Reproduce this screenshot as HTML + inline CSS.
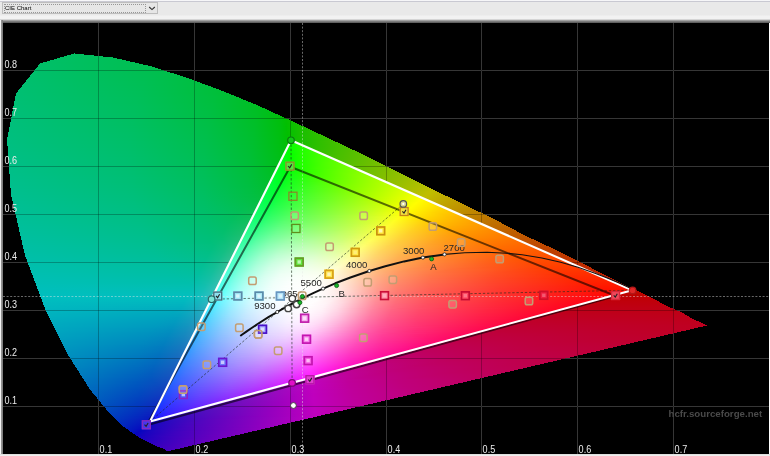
<!DOCTYPE html>
<html><head><meta charset="utf-8"><title>CIE Chart</title>
<style>
html,body{margin:0;padding:0}
body{width:770px;height:456px;position:relative;overflow:hidden;background:#ebebeb;font-family:"Liberation Sans",sans-serif}
.tb{position:absolute;left:0;top:0;width:770px;height:23px;background:linear-gradient(#f6f6f8 0,#f6f6f8 1px,#c9c9d2 1px,#c9c9d2 2px,#e9e9e9 2px,#e9e9e9 15px,#f2f2f2 16px,#f2f2f2 19px,#b8b8b8 20px,#8a8a8a 21px,#6e6e6e 22px,#555 23px)}
.cb{position:absolute;left:2px;top:2px;width:154px;height:10px;border:1px solid #bdbdbd;background:#e6e6e6}
.cb .f{position:absolute;left:1px;top:1px;width:140px;height:7px;border:1px dotted #969696}
.cb .t{position:absolute;left:2px;top:1.6px;font-size:6px;line-height:7px;color:#000;white-space:nowrap}
.cb svg{position:absolute;left:145px;top:3px}
.ch{position:absolute;left:3px;top:23px;width:766px;height:431px;background:#000;overflow:hidden}
.ch i{position:absolute;display:block;height:1px}
.lb{position:absolute;left:0;top:20px;width:3px;height:436px;background:linear-gradient(90deg,#f4f4f4 0,#f4f4f4 1px,#9a9a9a 1px,#777 3px)}
.rb{position:absolute;left:769px;top:23px;width:1px;height:433px;background:#fff}
.bb{position:absolute;left:0;top:454px;width:770px;height:2px;background:linear-gradient(#d8d8d8,#f4f4f4)}
svg.g,svg.o{position:absolute;left:0;top:0}
svg text{font-family:"Liberation Sans",sans-serif}
svg.o{will-change:transform}
.cb .t{will-change:transform}
</style></head><body>
<div class="tb"></div>
<div class="cb"><div class="f"></div><div class="t">CIE Chart</div><svg width="8" height="5" viewBox="0 0 8 5"><path d="M1.2 1l2.8 2.6L6.8 1" stroke="#333" stroke-width="1.1" fill="none"/></svg></div>
<div class="ch">
<svg class="g" style="left:-3px;top:-23px" width="770" height="456" viewBox="0 0 770 456"><path d="M98.5 23V454M194.5 23V454M290.5 23V454M386.5 23V454M481.5 23V454M577.5 23V454M673.5 23V454M3 406.5H769M3 358.5H769M3 310.5H769M3 262.5H769M3 214.5H769M3 166.5H769M3 118.5H769M3 70.5H769" stroke="#4a4a4a" stroke-width="1" fill="none"/></svg>
<i style="top:30px;left:71px;width:1px;background:linear-gradient(90deg,#00bf60 0px,#00bf60 1px)"></i>
<i style="top:31px;left:68px;width:13px;background:linear-gradient(90deg,#00bf60 0px,#00bf5e 13px)"></i>
<i style="top:32px;left:64px;width:27px;background:linear-gradient(90deg,#00bf61 0px,#00bf5c 27px)"></i>
<i style="top:33px;left:61px;width:39px;background:linear-gradient(90deg,#00bf62 0px,#00bf5a 39px)"></i>
<i style="top:34px;left:57px;width:53px;background:linear-gradient(90deg,#00bf63 0px,#00bf58 53px)"></i>
<i style="top:35px;left:54px;width:60px;background:linear-gradient(90deg,#00bf64 0px,#00bf57 60px)"></i>
<i style="top:36px;left:51px;width:68px;background:linear-gradient(90deg,#00bf65 0px,#00bf56 68px)"></i>
<i style="top:37px;left:47px;width:76px;background:linear-gradient(90deg,#00bf66 0px,#00bf55 76px)"></i>
<i style="top:38px;left:44px;width:83px;background:linear-gradient(90deg,#00bf67 0px,#00bf54 83px)"></i>
<i style="top:39px;left:40px;width:92px;background:linear-gradient(90deg,#00bf67 0px,#00bf53 92px)"></i>
<i style="top:40px;left:37px;width:99px;background:linear-gradient(90deg,#00bf68 0px,#00bf52 99px)"></i>
<i style="top:41px;left:36px;width:104px;background:linear-gradient(90deg,#00bf69 0px,#00bf51 104px)"></i>
<i style="top:42px;left:35px;width:110px;background:linear-gradient(90deg,#00bf69 0px,#00bf50 110px)"></i>
<i style="top:43px;left:35px;width:114px;background:linear-gradient(90deg,#00bf69 0px,#00bf4f 114px)"></i>
<i style="top:44px;left:34px;width:118px;background:linear-gradient(90deg,#00bf6a 0px,#00bf4e 115.5px,#00bf4e 118px)"></i>
<i style="top:45px;left:33px;width:122px;background:linear-gradient(90deg,#00bf6a 0px,#00bf4f 116.5px,#00bf4d 122px)"></i>
<i style="top:46px;left:32px;width:126px;background:linear-gradient(90deg,#00bf6a 0px,#00bf4f 116.5px,#00bf4c 126px)"></i>
<i style="top:47px;left:31px;width:130px;background:linear-gradient(90deg,#00bf6b 0px,#00bf50 116.5px,#00bf4b 130px)"></i>
<i style="top:48px;left:31px;width:133px;background:linear-gradient(90deg,#00bf6b 0px,#00bf50 116.5px,#00bf4b 133px)"></i>
<i style="top:49px;left:30px;width:137px;background:linear-gradient(90deg,#00bf6b 0px,#00bf50 116.5px,#00bf4a 137px)"></i>
<i style="top:50px;left:29px;width:142px;background:linear-gradient(90deg,#00bf6c 0px,#00bf51 117.5px,#00bf49 142px)"></i>
<i style="top:51px;left:28px;width:146px;background:linear-gradient(90deg,#00bf6c 0px,#00bf51 117.5px,#00bf48 146px)"></i>
<i style="top:52px;left:27px;width:150px;background:linear-gradient(90deg,#00bf6c 0px,#00bf52 117.5px,#00bf47 150px)"></i>
<i style="top:53px;left:27px;width:153px;background:linear-gradient(90deg,#00bf6d 0px,#00bf52 117.5px,#00bf46 153px)"></i>
<i style="top:54px;left:26px;width:157px;background:linear-gradient(90deg,#00bf6d 0px,#00bf52 118.5px,#00bf45 157px)"></i>
<i style="top:55px;left:25px;width:161px;background:linear-gradient(90deg,#00bf6d 0px,#00bf53 118.5px,#00bf44 161px)"></i>
<i style="top:56px;left:24px;width:165px;background:linear-gradient(90deg,#00bf6e 0px,#00bf53 118.5px,#00bf43 165px)"></i>
<i style="top:57px;left:23px;width:168px;background:linear-gradient(90deg,#00bf6e 0px,#00bf53 119.5px,#00bf42 168px)"></i>
<i style="top:58px;left:23px;width:171px;background:linear-gradient(90deg,#00bf6e 0px,#00bf54 119.5px,#00bf41 171px)"></i>
<i style="top:59px;left:22px;width:175px;background:linear-gradient(90deg,#00bf6f 0px,#00bf54 119.5px,#00bf40 175px)"></i>
<i style="top:60px;left:21px;width:178px;background:linear-gradient(90deg,#00bf6f 0px,#00bf55 119.5px,#00bf3f 178px)"></i>
<i style="top:61px;left:20px;width:182px;background:linear-gradient(90deg,#00bf70 0px,#00bf55 119.5px,#00bf3e 182px)"></i>
<i style="top:62px;left:19px;width:186px;background:linear-gradient(90deg,#00bf70 0px,#00bf55 120.5px,#00bf3d 186px)"></i>
<i style="top:63px;left:19px;width:189px;background:linear-gradient(90deg,#00bf70 0px,#00bf56 120.5px,#00bf3c 189px)"></i>
<i style="top:64px;left:18px;width:192px;background:linear-gradient(90deg,#00bf71 0px,#00bf56 120.5px,#00bf3b 192px)"></i>
<i style="top:65px;left:17px;width:196px;background:linear-gradient(90deg,#00bf71 0px,#00bf57 120.5px,#00bf3a 196px)"></i>
<i style="top:66px;left:16px;width:200px;background:linear-gradient(90deg,#00bf71 0px,#00bf57 121.5px,#00bf3a 196.5px,#00bf38 200px)"></i>
<i style="top:67px;left:15px;width:203px;background:linear-gradient(90deg,#00bf72 0px,#00bf57 121.5px,#00bf3b 196.5px,#00bf38 203px)"></i>
<i style="top:68px;left:15px;width:206px;background:linear-gradient(90deg,#00bf72 0px,#00bf58 121.5px,#00bf3b 196.5px,#00bf36 206px)"></i>
<i style="top:69px;left:14px;width:209px;background:linear-gradient(90deg,#00bf72 0px,#00bf58 121.5px,#00bf3b 197.5px,#00bf35 209px)"></i>
<i style="top:70px;left:13px;width:213px;background:linear-gradient(90deg,#00bf73 0px,#00bf58 122.5px,#00bf3b 198.5px,#00bf34 213px)"></i>
<i style="top:71px;left:13px;width:215px;background:linear-gradient(90deg,#00bf73 0px,#00bf59 121.5px,#00bf3c 197.5px,#00bf33 215px)"></i>
<i style="top:72px;left:13px;width:218px;background:linear-gradient(90deg,#00bf73 0px,#00bf59 121.5px,#00bf3c 197.5px,#00bf31 218px)"></i>
<i style="top:73px;left:12px;width:221px;background:linear-gradient(90deg,#00bf74 0px,#00bf59 122.5px,#00bf3d 198.5px,#00bf30 221px)"></i>
<i style="top:74px;left:12px;width:224px;background:linear-gradient(90deg,#00bf74 0px,#00bf5a 122.5px,#00bf3d 198.5px,#00bf2f 224px)"></i>
<i style="top:75px;left:12px;width:226px;background:linear-gradient(90deg,#00bf74 0px,#00bf5a 122.5px,#00bf3d 198.5px,#00bf2d 226px)"></i>
<i style="top:76px;left:12px;width:228px;background:linear-gradient(90deg,#00bf74 0px,#00bf5a 122.5px,#00bf3d 198.5px,#00bf2c 228px)"></i>
<i style="top:77px;left:12px;width:231px;background:linear-gradient(90deg,#00bf74 0px,#00bf5b 121.5px,#00bf3e 197.5px,#00bf2a 231px)"></i>
<i style="top:78px;left:11px;width:234px;background:linear-gradient(90deg,#00bf75 0px,#00bf5b 122.5px,#00bf3e 198.5px,#00bf29 234px)"></i>
<i style="top:79px;left:11px;width:237px;background:linear-gradient(90deg,#00bf75 0px,#00bf5b 122.5px,#00bf3e 198.5px,#00bf27 237px)"></i>
<i style="top:80px;left:11px;width:239px;background:linear-gradient(90deg,#00bf75 0px,#00bf5b 122.5px,#00bf3f 198.5px,#00bf26 239px)"></i>
<i style="top:81px;left:11px;width:242px;background:linear-gradient(90deg,#00bf75 0px,#00bf5c 122.5px,#00bf3f 198.5px,#00bf24 242px)"></i>
<i style="top:82px;left:11px;width:244px;background:linear-gradient(90deg,#00bf76 0px,#00bf5c 122.5px,#00bf3f 198.5px,#00bf22 244px)"></i>
<i style="top:83px;left:10px;width:247px;background:linear-gradient(90deg,#00bf76 0px,#00bf5d 122.5px,#00bf40 198.5px,#00bf22 244.5px,#00bf21 247px)"></i>
<i style="top:84px;left:10px;width:249px;background:linear-gradient(90deg,#00bf76 0px,#00bf5d 122.5px,#00bf40 198.5px,#00bf23 244.5px,#00bf1f 249px)"></i>
<i style="top:85px;left:10px;width:252px;background:linear-gradient(90deg,#00bf77 0px,#00bf5d 122.5px,#00bf40 198.5px,#00bf23 244.5px,#00bf1c 252px)"></i>
<i style="top:86px;left:10px;width:254px;background:linear-gradient(90deg,#00bf77 0px,#00bf5d 122.5px,#00bf41 198.5px,#00bf23 244.5px,#00bf1b 254px)"></i>
<i style="top:87px;left:10px;width:256px;background:linear-gradient(90deg,#00bf77 0px,#00bf5e 122.5px,#00bf41 198.5px,#00bf23 244.5px,#00bf19 256px)"></i>
<i style="top:88px;left:9px;width:259px;background:linear-gradient(90deg,#00bf77 0px,#00bf5e 122.5px,#00bf42 198.5px,#00bf24 244.5px,#00bf17 259px)"></i>
<i style="top:89px;left:9px;width:261px;background:linear-gradient(90deg,#00bf78 0px,#00bf5e 122.5px,#00bf42 198.5px,#00bf24 244.5px,#00bf15 261px)"></i>
<i style="top:90px;left:9px;width:263px;background:linear-gradient(90deg,#00bf78 0px,#00bf5f 122.5px,#00bf42 198.5px,#00bf25 244.5px,#00bf13 263px)"></i>
<i style="top:91px;left:9px;width:266px;background:linear-gradient(90deg,#00bf78 0px,#00bf5f 122.5px,#00bf42 198.5px,#00bf25 244.5px,#00bf0f 266px)"></i>
<i style="top:92px;left:9px;width:268px;background:linear-gradient(90deg,#00bf78 0px,#00bf5f 122.5px,#00bf43 198.5px,#00bf25 244.5px,#00bf0c 268px)"></i>
<i style="top:93px;left:9px;width:270px;background:linear-gradient(90deg,#00bf79 0px,#00bf5f 122.5px,#00bf43 197.5px,#00bf25 244.5px,#00bf0b 268.5px,#00bf09 270px)"></i>
<i style="top:94px;left:8px;width:273px;background:linear-gradient(90deg,#00bf79 0px,#00bf60 122.5px,#00bf44 198.5px,#00bf26 245.5px,#00bf0b 269.5px,#00bf06 273px)"></i>
<i style="top:95px;left:8px;width:275px;background:linear-gradient(90deg,#00bf79 0px,#00bf60 122.5px,#00bf44 198.5px,#00bf27 244.5px,#00bf0d 268.5px,#00bf01 275px)"></i>
<i style="top:96px;left:8px;width:278px;background:linear-gradient(90deg,#00bf7a 0px,#00bf60 122.5px,#00bf44 198.5px,#00bf27 244.5px,#00bf0d 268.5px,#00bf01 274.5px,#07bf00 278px)"></i>
<i style="top:97px;left:8px;width:280px;background:linear-gradient(90deg,#00bf7a 0px,#00bf61 122.5px,#00bf44 198.5px,#00bf27 244.5px,#00bf0d 268.5px,#02bf00 275.5px,#0bbf00 280px)"></i>
<i style="top:98px;left:8px;width:282px;background:linear-gradient(90deg,#00bf7a 0px,#00bf61 122.5px,#00bf45 197.5px,#00bf27 244.5px,#00bf0d 268.5px,#02bf00 275.5px,#0ebf00 282px)"></i>
<i style="top:99px;left:7px;width:285px;background:linear-gradient(90deg,#00bf7a 0px,#00bf62 122.5px,#00bf45 198.5px,#00bf27 245.5px,#00bf0e 269.5px,#02bf00 276.5px,#11bf00 285px)"></i>
<i style="top:100px;left:7px;width:287px;background:linear-gradient(90deg,#00bf7b 0px,#00bf62 122.5px,#00bf46 198.5px,#00bf28 245.5px,#00bf0e 269.5px,#01bf00 276.5px,#13bf00 287px)"></i>
<i style="top:101px;left:7px;width:289px;background:linear-gradient(90deg,#00bf7b 0px,#00bf62 122.5px,#00bf46 198.5px,#00bf28 245.5px,#00bf0d 270.5px,#01bf00 276.5px,#16bf00 289px)"></i>
<i style="top:102px;left:7px;width:291px;background:linear-gradient(90deg,#00bf7b 0px,#00bf62 122.5px,#00bf46 198.5px,#00bf28 245.5px,#00bf0d 270.5px,#01bf00 276.5px,#15bf00 287.5px,#19bf00 291px)"></i>
<i style="top:103px;left:7px;width:294px;background:linear-gradient(90deg,#00bf7b 0px,#00bf63 122.5px,#00bf47 197.5px,#00bf29 244.5px,#00bf0e 269.5px,#00bf00 276.5px,#12bf00 285.5px,#1dbf00 294px)"></i>
<i style="top:104px;left:6px;width:297px;background:linear-gradient(90deg,#00bf7c 0px,#00bf63 122.5px,#00bf47 198.5px,#00bf29 245.5px,#00bf0f 270.5px,#00bf01 277.5px,#12bf00 286.5px,#1fbf00 297px)"></i>
<i style="top:105px;left:6px;width:299px;background:linear-gradient(90deg,#00bf7c 0px,#00bf64 122.5px,#00bf48 198.5px,#00bf2a 245.5px,#00bf0f 270.5px,#00bf01 277.5px,#13bf00 287.5px,#21bf00 299px)"></i>
<i style="top:106px;left:6px;width:301px;background:linear-gradient(90deg,#00bf7c 0px,#00bf64 122.5px,#00bf48 198.5px,#00bf2a 245.5px,#00bf0f 270.5px,#00bf01 277.5px,#15bf00 288.5px,#24bf00 301px)"></i>
<i style="top:107px;left:6px;width:303px;background:linear-gradient(90deg,#00bf7d 0px,#00bf64 122.5px,#00bf48 198.5px,#00bf2a 245.5px,#00bf0f 270.5px,#00bf02 277.5px,#16bf00 289.5px,#26bf00 303px)"></i>
<i style="top:108px;left:6px;width:305px;background:linear-gradient(90deg,#00bf7d 0px,#00bf64 122.5px,#00bf49 197.5px,#00bf2b 244.5px,#00bf0f 270.5px,#02bf00 278.5px,#1abf00 292.5px,#29bf00 305px)"></i>
<i style="top:109px;left:5px;width:308px;background:linear-gradient(90deg,#00bf7d 0px,#00bf65 123.5px,#00bf49 198.5px,#00bf2c 245.5px,#00bf10 271.5px,#02bf00 279.5px,#19bf00 292.5px,#2bbf00 308px)"></i>
<i style="top:110px;left:5px;width:310px;background:linear-gradient(90deg,#00bf7e 0px,#00bf65 123.5px,#00bf49 198.5px,#00bf2c 245.5px,#00bf10 271.5px,#02bf00 279.5px,#17bf00 291.5px,#2dbf00 310px)"></i>
<i style="top:111px;left:5px;width:313px;background:linear-gradient(90deg,#00bf7e 0px,#00bf66 122.5px,#00bf4a 198.5px,#00bf2c 245.5px,#00bf10 271.5px,#01bf00 279.5px,#17bf00 291.5px,#31bf00 313px)"></i>
<i style="top:112px;left:5px;width:315px;background:linear-gradient(90deg,#00bf7e 0px,#00bf66 122.5px,#00bf4a 198.5px,#00bf2c 245.5px,#00bf10 271.5px,#01bf00 279.5px,#16bf00 290.5px,#33bf00 315px)"></i>
<i style="top:113px;left:5px;width:317px;background:linear-gradient(90deg,#00bf7e 0px,#00bf66 122.5px,#00bf4b 197.5px,#00bf2d 244.5px,#00bf12 270.5px,#00bf03 278.5px,#04bf00 280.5px,#1ebf00 296.5px,#35bf00 317px)"></i>
<i style="top:114px;left:4px;width:320px;background:linear-gradient(90deg,#00bf7f 0px,#00bf66 123.5px,#00bf4b 198.5px,#00bf2e 245.5px,#00bf12 271.5px,#00bf04 279.5px,#04bf00 281.5px,#1dbf00 296.5px,#37bf00 320px)"></i>
<i style="top:115px;left:4px;width:322px;background:linear-gradient(90deg,#00bf7f 0px,#00bf67 123.5px,#00bf4b 198.5px,#00bf2e 245.5px,#00bf12 271.5px,#00bf01 280.5px,#13bf00 289.5px,#3abf00 322px)"></i>
<i style="top:116px;left:4px;width:324px;background:linear-gradient(90deg,#00bf7f 0px,#00bf67 123.5px,#00bf4c 198.5px,#00bf2e 245.5px,#00bf13 271.5px,#00bf01 280.5px,#14bf00 290.5px,#3cbf00 324px)"></i>
<i style="top:117px;left:4px;width:326px;background:linear-gradient(90deg,#00bf80 0px,#00bf67 123.5px,#00bf4c 198.5px,#00bf2e 245.5px,#00bf13 271.5px,#00bf02 280.5px,#16bf00 291.5px,#3ebf00 326px)"></i>
<i style="top:118px;left:4px;width:328px;background:linear-gradient(90deg,#00bf80 0px,#00bf68 123.5px,#00bf4c 198.5px,#00bf2f 245.5px,#00bf13 271.5px,#00bf02 280.5px,#05bf00 283px,#0aff00 283px,#12ff00 287px,#0fbf00 287px,#36bf00 317.5px,#40bf00 328px)"></i>
<i style="top:119px;left:4px;width:331px;background:linear-gradient(90deg,#00bf80 0px,#00bf68 123.5px,#00bf4d 198.5px,#00bf2f 245.5px,#00bf13 271.5px,#00bf02 280.5px,#05bf00 283px,#0aff00 283px,#16ff00 289px,#12bf00 289px,#3bbf00 322.5px,#44bf00 331px)"></i>
<i style="top:120px;left:4px;width:333px;background:linear-gradient(90deg,#00bf80 0px,#00bf68 123.5px,#00bf4d 198.5px,#00bf2f 245.5px,#00bf13 271.5px,#02bf00 282px,#07ff00 282px,#1bff00 291px,#15bf00 291px,#41bf00 327.5px,#46bf00 333px)"></i>
<i style="top:121px;left:4px;width:335px;background:linear-gradient(90deg,#00bf81 0px,#00bf69 123.5px,#00bf4d 198.5px,#00bf2f 245.5px,#00bf14 271.5px,#02bf00 282px,#06ff00 282px,#21ff00 294px,#1abf00 294px,#48bf00 335px)"></i>
<i style="top:122px;left:4px;width:337px;background:linear-gradient(90deg,#00bf81 0px,#00bf69 122.5px,#00bf4e 197.5px,#00bf31 244.5px,#00bf14 271.5px,#00bf03 281px,#02ff00 281px,#18ff00 289.5px,#24ff00 296px,#1dbf00 296px,#4bbf00 337px)"></i>
<i style="top:123px;left:5px;width:338px;background:linear-gradient(90deg,#00bf81 0px,#00bf69 122.5px,#00bf4e 197.5px,#00bf30 244.5px,#00bf14 270.5px,#00bf03 280px,#01ff00 280px,#16ff00 287.5px,#28ff00 297px,#1fbf00 297px,#4dbf00 338px)"></i>
<i style="top:124px;left:5px;width:340px;background:linear-gradient(90deg,#00bf81 0px,#00bf69 122.5px,#00bf4e 197.5px,#00bf31 243.5px,#00bf14 270.5px,#00bf06 279px,#00ff05 279px,#01ff00 280.5px,#14ff00 286.5px,#2cff00 299px,#22bf00 299px,#4fbf00 340px)"></i>
<i style="top:125px;left:5px;width:342px;background:linear-gradient(90deg,#00bf82 0px,#00bf6a 122.5px,#00bf4e 197.5px,#00bf31 243.5px,#00bf15 270.5px,#00bf07 279px,#00ff05 279px,#00ff01 280.5px,#1f0 285.5px,#31ff00 302px,#26bf00 302px,#51bf00 342px)"></i>
<i style="top:126px;left:5px;width:344px;background:linear-gradient(90deg,#00bf82 0px,#00bf6a 122.5px,#00bf4f 197.5px,#00bf32 243.5px,#00bf15 270.5px,#00bf09 278px,#00ff09 278px,#00ff01 280.5px,#13ff00 286.5px,#35ff00 304px,#29bf00 304px,#54bf00 344px)"></i>
<i style="top:127px;left:5px;width:347px;background:linear-gradient(90deg,#00bf82 0px,#00bf6a 122.5px,#00bf50 196.5px,#00bf32 243.5px,#00bf15 270.5px,#00bf09 278px,#00ff09 278px,#00ff02 280.5px,#16ff00 287.5px,#38ff00 306px,#2bbf00 306px,#57bf00 347px)"></i>
<i style="top:128px;left:5px;width:349px;background:linear-gradient(90deg,#00bf82 0px,#00bf6b 122.5px,#00bf50 196.5px,#00bf32 243.5px,#00bf15 270.5px,#00bf0b 277px,#00ff0d 277px,#00ff02 280.5px,#15ff00 287.5px,#3cff00 308px,#2ebf00 308px,#59bf00 349px)"></i>
<i style="top:129px;left:5px;width:351px;background:linear-gradient(90deg,#00bf83 0px,#00bf6b 122.5px,#00bf50 196.5px,#00bf33 243.5px,#00bf16 270.5px,#00bf0c 277px,#00ff0d 277px,#00ff03 280.5px,#0bff00 283.5px,#2cff00 298.5px,#41ff00 311px,#32bf00 311px,#5cbf00 351px)"></i>
<i style="top:130px;left:5px;width:353px;background:linear-gradient(90deg,#00bf83 0px,#00bf6b 122.5px,#00bf51 196.5px,#00bf34 242.5px,#00bf17 269.5px,#00bf0e 276px,#00ff10 276px,#00ff03 280.5px,#07ff00 282.5px,#24ff00 294.5px,#4f0 313px,#34bf00 313px,#5ebf00 353px)"></i>
<i style="top:131px;left:5px;width:355px;background:linear-gradient(90deg,#00bf83 0px,#00bf6c 122.5px,#00bf51 196.5px,#00bf34 242.5px,#00bf18 269.5px,#00bf0e 276px,#00ff10 276px,#00ff04 280.5px,#07ff00 282.5px,#24ff00 294.5px,#48ff00 315px,#37bf00 315px,#60bf00 355px)"></i>
<i style="top:132px;left:5px;width:357px;background:linear-gradient(90deg,#00bf84 0px,#00bf6c 122.5px,#00bf51 196.5px,#00bf34 242.5px,#00bf18 269.5px,#00bf10 275px,#00ff13 275px,#02ff00 281.5px,#1aff00 289.5px,#48ff00 314.5px,#4dff00 318px,#3bbf00 318px,#63bf00 357px)"></i>
<i style="top:133px;left:5px;width:359px;background:linear-gradient(90deg,#00bf84 0px,#00bf6c 122.5px,#00bf52 196.5px,#00bf35 242.5px,#00bf18 269.5px,#00bf10 275px,#00ff13 275px,#02ff00 281.5px,#17ff00 288.5px,#43ff00 311.5px,#50ff00 320px,#3dbf00 320px,#65bf00 359px)"></i>
<i style="top:134px;left:5px;width:361px;background:linear-gradient(90deg,#00bf84 0px,#00bf6d 122.5px,#00bf52 196.5px,#00bf35 242.5px,#00bf18 269.5px,#00bf12 274px,#00ff16 274px,#00ff05 280.5px,#01ff00 281.5px,#15ff00 287.5px,#3eff00 308.5px,#53ff00 322px,#40bf00 322px,#67bf00 361px)"></i>
<i style="top:135px;left:5px;width:363px;background:linear-gradient(90deg,#00bf84 0px,#00bf6d 122.5px,#00bf52 196.5px,#00bf35 242.5px,#00bf19 269.5px,#00bf12 274px,#00ff16 274px,#00ff05 280.5px,#0f0 281.5px,#12ff00 286.5px,#3bff00 306.5px,#57ff00 324px,#42bf00 324px,#6abf00 363px)"></i>
<i style="top:136px;left:5px;width:365px;background:linear-gradient(90deg,#00bf85 0px,#00bf6d 122.5px,#00bf53 196.5px,#00bf36 242.5px,#00bf19 269.5px,#00bf14 273px,#00ff19 273px,#00ff06 280.5px,#00ff01 281.5px,#12ff00 286.5px,#3aff00 305.5px,#5cff00 327px,#46bf00 327px,#6cbf00 365px)"></i>
<i style="top:137px;left:6px;width:366px;background:linear-gradient(90deg,#00bf85 0px,#00bf6e 121.5px,#00bf53 195.5px,#00bf36 241.5px,#00bf19 268.5px,#00bf15 272px,#00ff19 272px,#00ff06 279.5px,#00ff02 280.5px,#14ff00 286.5px,#3fff00 307.5px,#5fff00 328px,#48bf00 328px,#6fbf00 366px)"></i>
<i style="top:138px;left:6px;width:368px;background:linear-gradient(90deg,#00bf85 0px,#00bf6e 121.5px,#00bf53 195.5px,#00bf36 241.5px,#00bf19 268.5px,#00bf16 271px,#00ff1c 271px,#00ff07 279.5px,#00ff02 280.5px,#17ff00 287.5px,#43ff00 309.5px,#62ff00 330px,#4bbf00 330px,#71bf00 368px)"></i>
<i style="top:139px;left:6px;width:370px;background:linear-gradient(90deg,#00bf85 0px,#00bf6e 121.5px,#00bf54 195.5px,#00bf37 241.5px,#00bf1a 268.5px,#00bf17 271px,#00ff1c 271px,#00ff07 279.5px,#04ff00 281.5px,#1eff00 290.5px,#4fff00 316.5px,#67ff00 333px,#4fbf00 333px,#74bf00 370px)"></i>
<i style="top:140px;left:6px;width:372px;background:linear-gradient(90deg,#00bf86 0px,#00bf6f 121.5px,#00bf54 195.5px,#00bf37 241.5px,#00bf1a 268.5px,#00bf18 270px,#00ff1f 270px,#00ff07 279.5px,#04ff00 281.5px,#1eff00 290.5px,#4fff00 316.5px,#6bff00 335px,#51bf00 335px,#76bf00 372px)"></i>
<i style="top:141px;left:6px;width:374px;background:linear-gradient(90deg,#00bf86 0px,#00bf6f 121.5px,#00bf54 195.5px,#00bf37 241.5px,#00bf1a 268.5px,#00bf19 270px,#00ff1f 270px,#00ff08 279.5px,#03ff00 281.5px,#1bff00 289.5px,#4aff00 313.5px,#6eff00 337px,#54bf00 337px,#79bf00 374px)"></i>
<i style="top:142px;left:6px;width:376px;background:linear-gradient(90deg,#00bf86 0px,#00bf6f 121.5px,#00bf55 194.5px,#00bf38 240.5px,#00bf1c 267.5px,#00bf1a 269px,#00ff21 269px,#00ff08 279.5px,#03ff00 281.5px,#1bff00 289.5px,#4aff00 313.5px,#72ff00 339px,#56bf00 339px,#7bbf00 376px)"></i>
<i style="top:143px;left:6px;width:378px;background:linear-gradient(90deg,#00bf87 0px,#00bf70 121.5px,#00bf56 194.5px,#00bf39 240.5px,#00bf1c 267.5px,#00bf1b 269px,#0f2 269px,#00ff09 279.5px,#02ff00 281.5px,#19ff00 288.5px,#45ff00 310.5px,#7f0 342px,#5abf00 342px,#7ebf00 378px)"></i>
<i style="top:144px;left:6px;width:380px;background:linear-gradient(90deg,#00bf87 0px,#00bf70 121.5px,#00bf56 194.5px,#00bf39 240.5px,#00bf1c 268px,#00ff24 268px,#00ff09 279.5px,#04ff03 281.5px,#16ff00 287.5px,#42ff00 308.5px,#7aff00 344px,#5dbf00 344px,#80bf00 380px)"></i>
<i style="top:145px;left:6px;width:382px;background:linear-gradient(90deg,#00bf87 0px,#00bf71 121.5px,#00bf56 194.5px,#00bf39 240.5px,#00bf1d 268px,#00ff24 268px,#00ff09 279.5px,#16ff00 287.5px,#41ff00 307.5px,#7dff00 346px,#5fbf00 346px,#83bf00 382px)"></i>
<i style="top:146px;left:6px;width:384px;background:linear-gradient(90deg,#00bf88 0px,#00bf71 121.5px,#00bf57 194.5px,#00bf3a 240.5px,#00bf1e 267px,#00ff27 267px,#00ff0d 278.5px,#00ff0a 279.5px,#14ff03 286.5px,#2f0 292.5px,#56ff00 319.5px,#81ff00 348px,#62bf00 348px,#86bf00 384px)"></i>
<i style="top:147px;left:6px;width:386px;background:linear-gradient(90deg,#00bf88 0px,#00bf71 121.5px,#00bf57 194.5px,#00bf3a 240.5px,#00bf1f 267px,#00ff27 267px,#00ff0e 278.5px,#1cff03 289.5px,#37ff00 302.5px,#76ff00 339.5px,#86ff00 351px,#66bf00 351px,#88bf00 386px)"></i>
<i style="top:148px;left:6px;width:388px;background:linear-gradient(90deg,#00bf88 0px,#00bf72 121.5px,#00bf58 194.5px,#00bf3a 240.5px,#00bf20 266px,#00ff29 266px,#00ff0e 278.5px,#13ff0a 284.5px,#29ff00 295.5px,#60ff00 325.5px,#8aff00 353px,#68bf00 353px,#8bbf00 388px)"></i>
<i style="top:149px;left:6px;width:390px;background:linear-gradient(90deg,#00bf88 0px,#00bf72 121.5px,#00bf58 194.5px,#00bf3b 240.5px,#00bf21 266px,#00ff2a 266px,#0f1 277.5px,#1aff09 287.5px,#30ff00 298.5px,#6aff00 331.5px,#8dff00 355px,#6bbf00 355px,#8ebf00 390px)"></i>
<i style="top:150px;left:6px;width:392px;background:linear-gradient(90deg,#00bf89 0px,#00bf72 121.5px,#00bf58 194.5px,#00bf3b 240.5px,#00bf22 265px,#00ff2c 265px,#01ff12 277.5px,#15ff0d 284.5px,#34ff00 300.5px,#70ff00 334.5px,#92ff00 358px,#6fbf00 358px,#90bf00 392px)"></i>
<i style="top:151px;left:7px;width:393px;background:linear-gradient(90deg,#00bf89 0px,#00bf72 121.5px,#00bf59 193.5px,#00bf3c 239.5px,#00bf23 264px,#01ff2d 264px,#01ff15 275.5px,#19ff0f 284.5px,#3aff00 302.5px,#7aff00 339.5px,#96ff00 359px,#71bf00 359px,#93bf00 393px)"></i>
<i style="top:152px;left:7px;width:395px;background:linear-gradient(90deg,#00bf89 0px,#00bf73 121.5px,#00bf59 193.5px,#00bf3c 239.5px,#00bf24 263px,#01ff2f 263px,#02ff16 275.5px,#18ff11 283.5px,#3eff00 304.5px,#7fff00 342.5px,#9f0 361px,#74bf00 361px,#96bf00 395px)"></i>
<i style="top:153px;left:7px;width:397px;background:linear-gradient(90deg,#00bf8a 0px,#00bf73 121.5px,#00bf59 193.5px,#00bf3c 239.5px,#01bf25 263px,#01ff2f 263px,#01ff18 274.5px,#17ff13 282.5px,#4f0 307.5px,#89ff00 348.5px,#9dff00 363px,#77bf00 363px,#99bf00 397px)"></i>
<i style="top:154px;left:7px;width:399px;background:linear-gradient(90deg,#00bf8a 0px,#00bf74 121.5px,#00bf5a 193.5px,#00bf3d 238.5px,#01bf26 262px,#01ff32 262px,#03ff19 274.5px,#18ff15 282.5px,#43ff02 306.5px,#89ff00 348.5px,#a2ff00 366px,#7bbf00 366px,#9bbf00 399px)"></i>
<i style="top:155px;left:7px;width:401px;background:linear-gradient(90deg,#00bf8a 0px,#00bf74 121.5px,#00bf5a 193.5px,#00bf3e 238.5px,#01bf27 262px,#01ff32 262px,#01ff1c 273.5px,#15ff18 280.5px,#46ff04 307.5px,#50ff00 313.5px,#9f0 358.5px,#a6ff00 368px,#7ebf00 368px,#9ebf00 401px)"></i>
<i style="top:156px;left:7px;width:403px;background:linear-gradient(90deg,#00bf8b 0px,#00bf74 121.5px,#00bf5b 193.5px,#00bf3e 238.5px,#01bf28 261px,#01ff34 261px,#01ff1f 272.5px,#1dff18 283.5px,#4dff02 311.5px,#98ff00 357.5px,#af0 370px,#80bf00 370px,#a1bf00 403px)"></i>
<i style="top:157px;left:7px;width:405px;background:linear-gradient(90deg,#00bf8b 0px,#00bf75 121.5px,#00bf5b 193.5px,#00bf3f 238.5px,#01bf29 261px,#01ff35 261px,#01ff1f 272.5px,#14ff1c 278.5px,#42ff0c 303.5px,#58ff00 317.5px,#a5ff00 365.5px,#aeff00 372px,#83bf00 372px,#a4bf00 405px)"></i>
<i style="top:158px;left:7px;width:407px;background:linear-gradient(90deg,#00bf8b 0px,#00bf75 121.5px,#00bf5c 193.5px,#00bf3e 239.5px,#01bf2b 260px,#01ff37 260px,#01ff22 271.5px,#1cff1c 281.5px,#53ff06 313.5px,#5cff00 319.5px,#af0 368.5px,#b3ff00 375px,#87bf00 375px,#a7bf00 407px)"></i>
<i style="top:159px;left:7px;width:409px;background:linear-gradient(90deg,#00bf8c 0px,#00bf75 121.5px,#00bf5c 193.5px,#00bf3f 239.5px,#01bf2b 260px,#01ff38 260px,#02ff23 271.5px,#14ff20 277.5px,#42ff11 302.5px,#62ff00 322.5px,#b2ff00 373.5px,#b7ff00 377px,#8abf00 377px,#aabf00 409px)"></i>
<i style="top:160px;left:7px;width:411px;background:linear-gradient(90deg,#00bf8c 0px,#00bf76 121.5px,#00bf5c 193.5px,#00bf3f 239.5px,#01bf2d 259px,#02ff3a 259px,#01ff25 270.5px,#1aff20 279.5px,#4fff0e 309.5px,#6f0 324.5px,#b8ff00 376.5px,#bf0 379px,#8dbf00 379px,#adbf00 411px)"></i>
<i style="top:161px;left:7px;width:413px;background:linear-gradient(90deg,#00bf8c 0px,#00bf76 121.5px,#00bf5d 193.5px,#00bf40 239.5px,#01bf2d 259px,#02ff3b 259px,#03ff26 270.5px,#17ff23 277.5px,#48ff13 304.5px,#6cff00 327.5px,#bfff00 380.5px,#c0ff00 382px,#91bf00 382px,#b0bf00 413px)"></i>
<i style="top:162px;left:7px;width:415px;background:linear-gradient(90deg,#00bf8c 0px,#00bf77 121.5px,#00bf5d 193.5px,#00bf40 239.5px,#01bf2f 258px,#02ff3d 258px,#02ff29 269.5px,#19ff24 277.5px,#4bff15 305.5px,#72ff00 330.5px,#c4ff00 384px,#94bf00 384px,#b3bf00 415px)"></i>
<i style="top:163px;left:7px;width:417px;background:linear-gradient(90deg,#00bf8d 0px,#00bf77 121.5px,#00bf5e 193.5px,#00bf40 239.5px,#02bf2f 258px,#02ff3d 258px,#04ff2a 269.5px,#1aff26 277.5px,#4eff16 306.5px,#76ff00 332.5px,#c8ff00 386px,#97bf00 386px,#b6bf00 417px)"></i>
<i style="top:164px;left:7px;width:419px;background:linear-gradient(90deg,#00bf8d 0px,#00bf77 121.5px,#00bf5e 193.5px,#00bf41 239.5px,#02bf31 257px,#02ff40 257px,#02ff2c 268.5px,#17ff28 275.5px,#47ff1b 301.5px,#73ff04 330.5px,#7dff00 336.5px,#cf0 388px,#9abf00 388px,#babf00 419px)"></i>
<i style="top:165px;left:8px;width:420px;background:linear-gradient(90deg,#00bf8d 0px,#00bf78 121.5px,#00bf5f 192.5px,#01bf41 238.5px,#02bf31 256px,#02ff40 256px,#03ff2f 266.5px,#1dff29 276.5px,#55ff17 308.5px,#80ff00 336.5px,#d2ff00 390px,#9fbf00 390px,#bdbf00 420px)"></i>
<i style="top:166px;left:8px;width:422px;background:linear-gradient(90deg,#00bf8e 0px,#00bf78 121.5px,#00bf5f 192.5px,#01bf42 238.5px,#02bf33 255px,#03ff43 255px,#03ff2f 266.5px,#16ff2d 272.5px,#43ff20 296.5px,#7aff07 332.5px,#85ff00 339.5px,#d6ff00 392px,#a2bf00 392px,#bfbe00 422px)"></i>
<i style="top:167px;left:8px;width:424px;background:linear-gradient(90deg,#00bf8e 0px,#00bf78 121.5px,#00bf5f 192.5px,#01bf42 239.5px,#02bf34 255px,#03ff43 255px,#03ff32 265.5px,#1cff2d 274.5px,#4fff1e 303.5px,#82ff05 336.5px,#8aff00 341.5px,#daff00 394px,#a5bf00 394px,#bfbd00 421.5px,#bfbb00 424px)"></i>
<i style="top:168px;left:8px;width:426px;background:linear-gradient(90deg,#00bf8e 0px,#00bf79 121.5px,#00bf60 192.5px,#01bf42 239.5px,#02bf35 254px,#03ff46 254px,#04ff33 265.5px,#17ff30 271.5px,#44ff24 295.5px,#83ff08 336.5px,#90ff00 344.5px,#e0ff00 397px,#a9bf00 397px,#bfbe00 419.5px,#bfb800 426px)"></i>
<i style="top:169px;left:8px;width:428px;background:linear-gradient(90deg,#00bf8f 0px,#00bf79 121.5px,#00bf60 192.5px,#01bf43 239.5px,#03bf36 254px,#04ff46 254px,#04ff35 264.5px,#1dff31 273.5px,#50ff22 302.5px,#89ff07 339.5px,#94ff00 346.5px,#e5ff00 399px,#acbf00 399px,#bfbe00 418.5px,#bfb500 428px)"></i>
<i style="top:170px;left:8px;width:430px;background:linear-gradient(90deg,#00bf8f 0px,#00bf7a 121.5px,#00bf61 192.5px,#01bf42 240.5px,#03bf37 253px,#04ff49 253px,#05ff36 264.5px,#1aff34 271.5px,#4aff27 297.5px,#8cff09 340.5px,#9aff00 349.5px,#e9ff00 401px,#b0bf00 401px,#bfbe00 417.5px,#bfb200 430px)"></i>
<i style="top:171px;left:8px;width:432px;background:linear-gradient(90deg,#00bf8f 0px,#00bf7a 121.5px,#00bf61 192.5px,#02bf43 240.5px,#03bf38 253px,#04ff49 253px,#04ff39 263.5px,#1cff35 271.5px,#4dff28 298.5px,#90ff09 342.5px,#9eff00 351.5px,#edff00 403px,#b3bf00 403px,#bfbd00 416.5px,#bfaf00 432px)"></i>
<i style="top:172px;left:8px;width:434px;background:linear-gradient(90deg,#00bf90 0px,#00bf7b 121.5px,#00bf62 192.5px,#02bf43 241.5px,#03bf3a 252px,#05ff4c 252px,#07ff3a 263.5px,#1dff37 271.5px,#50ff29 299.5px,#95ff0a 344.5px,#a4ff00 354.5px,#f3ff00 406px,#b8bf00 406px,#bfbd00 415.5px,#bfac00 434px)"></i>
<i style="top:173px;left:8px;width:437px;background:linear-gradient(90deg,#00bf90 0px,#00bf7b 121.5px,#00bf62 192.5px,#02bf42 242.5px,#04bf3a 252px,#05ff4d 252px,#05ff3c 262.5px,#1bff39 269.5px,#49ff2e 294.5px,#96ff0c 344.5px,#a8ff00 356.5px,#f8ff00 408px,#bbbf00 408px,#bfbc00 415.5px,#bfa900 437px)"></i>
<i style="top:174px;left:9px;width:438px;background:linear-gradient(90deg,#00bf90 0px,#00bf7b 121.5px,#00bf63 191.5px,#02bf43 241.5px,#04bf3c 250px,#05ff4f 250px,#06ff3f 260.5px,#21ff3a 270.5px,#56ff2c 300.5px,#9dff0b 347.5px,#afff00 358.5px,#fdff00 409px,#bfbf00 409px,#bfa600 438px)"></i>
<i style="top:175px;left:9px;width:440px;background:linear-gradient(90deg,#00bf91 0px,#00bf7c 121.5px,#00bf63 191.5px,#03bf43 242.5px,#04bf3d 250px,#06ff50 250px,#06ff40 260.5px,#1aff3e 266.5px,#45ff33 289.5px,#9aff10 344.5px,#b3ff00 360.5px,#fffe00 409.5px,#fffd00 411px,#bfbc00 411px,#bfa300 440px)"></i>
<i style="top:176px;left:9px;width:442px;background:linear-gradient(90deg,#00bf91 0px,#00bf7c 121.5px,#00bf64 191.5px,#03bf43 243.5px,#05bf3e 249px,#06ff52 249px,#07ff43 259.5px,#20ff3f 268.5px,#52ff31 296.5px,#a5ff0d 350.5px,#b9ff00 363.5px,#fffe00 408.5px,#fff700 414px,#bfb800 414px,#bfa000 442px)"></i>
<i style="top:177px;left:9px;width:444px;background:linear-gradient(90deg,#00bf91 0px,#00bf7c 121.5px,#00bf64 191.5px,#03bf45 241.5px,#05bf3f 249px,#07ff53 249px,#08ff44 259.5px,#1bff42 265.5px,#47ff37 288.5px,#a2ff12 347.5px,#beff00 365.5px,#fffd00 407.5px,#fff200 416px,#bfb500 416px,#bf9e00 444px)"></i>
<i style="top:178px;left:10px;width:445px;background:linear-gradient(90deg,#00bf92 0px,#00bf7d 120.5px,#00bf65 190.5px,#03bf47 238.5px,#05bf41 247px,#07ff55 247px,#08ff47 257.5px,#1fff43 265.5px,#4dff38 290.5px,#af1 350.5px,#c4ff00 367.5px,#fffd00 405.5px,#fe0 417px,#bfb100 417px,#bf9b00 445px)"></i>
<i style="top:179px;left:10px;width:447px;background:linear-gradient(90deg,#00bf92 0px,#00bf7d 121.5px,#00bf65 191.5px,#03bf49 236.5px,#06bf42 247px,#08ff56 247px,#0aff48 257.5px,#1fff45 264.5px,#4cff3b 288.5px,#adff12 351.5px,#c9ff00 369.5px,#fffe00 403.5px,#ffe800 420px,#bfad00 420px,#bf9900 447px)"></i>
<i style="top:180px;left:10px;width:449px;background:linear-gradient(90deg,#00bf92 0px,#00bf7e 121.5px,#00bf65 191.5px,#03bf4b 235.5px,#06bf43 246px,#09ff59 246px,#09ff4a 256.5px,#1fff48 263.5px,#4aff3e 286.5px,#aeff14 351.5px,#d0ff00 372.5px,#fffe00 402.5px,#ffe400 422px,#bfaa00 422px,#bf9600 449px)"></i>
<i style="top:181px;left:10px;width:451px;background:linear-gradient(90deg,#00bf93 0px,#00bf7e 121.5px,#00bf66 191.5px,#03bf4d 233.5px,#07bf44 246px,#09ff5a 246px,#0cff4c 256.5px,#23ff49 264.5px,#51ff3e 289.5px,#b8ff12 356.5px,#d5ff00 374.5px,#fffe00 401.5px,#ffe000 424px,#bfa700 424px,#bf9400 451px)"></i>
<i style="top:182px;left:11px;width:452px;background:linear-gradient(90deg,#00bf93 0px,#00bf7f 120.5px,#00bf66 190.5px,#03bf4e 231.5px,#07bf46 244px,#0aff5c 244px,#0bff4e 254.5px,#21ff4c 261.5px,#4cff42 284.5px,#b6ff16 353.5px,#d6ff02 373.5px,#fffd00 399.5px,#ffdc00 425px,#bfa400 425px,#bf9100 452px)"></i>
<i style="top:183px;left:11px;width:454px;background:linear-gradient(90deg,#00bf93 0px,#00bf7f 120.5px,#00bf67 190.5px,#03bf50 230.5px,#08bf47 244px,#0bff5d 244px,#0cff51 253.5px,#28ff4d 263.5px,#57ff41 290.5px,#c5ff12 361.5px,#e0ff00 378.5px,#fffd00 398.5px,#ffd700 428px,#bfa000 428px,#bf8f00 454px)"></i>
<i style="top:184px;left:11px;width:456px;background:linear-gradient(90deg,#00bf94 0px,#00bf7f 121.5px,#00bf67 190.5px,#03bf52 228.5px,#08bf49 243px,#0bff60 243px,#0dff52 253.5px,#20ff51 259.5px,#49ff48 280.5px,#b6ff1c 351.5px,#e0ff03 377.5px,#e9ff00 382.5px,#fffe00 396.5px,#ffd600 426.5px,#ffd300 430px,#bf9e00 430px,#bf8d00 456px)"></i>
<i style="top:185px;left:11px;width:458px;background:linear-gradient(90deg,#00bf94 0px,#00bf80 121.5px,#00bf68 190.5px,#03bf53 227.5px,#09bf4a 243px,#0cff61 243px,#0dff55 252.5px,#28ff52 261.5px,#53ff48 285.5px,#caff15 362.5px,#ecff00 383.5px,#fffe00 395.5px,#ffd700 424.5px,#ffcf00 432px,#bf9b00 432px,#bf8a00 458px)"></i>
<i style="top:186px;left:11px;width:460px;background:linear-gradient(90deg,#00bf94 0px,#00bf80 121.5px,#00bf68 190.5px,#03bf54 226.5px,#09bf4b 242px,#0dff63 242px,#0fff57 252.5px,#23ff55 258.5px,#4aff4e 278.5px,#b5ff22 348.5px,#e9ff06 380.5px,#f1ff00 385.5px,#fffd00 394.5px,#ffd600 423.5px,#ffcb00 435px,#bf9700 435px,#bf8800 460px)"></i>
<i style="top:187px;left:12px;width:461px;background:linear-gradient(90deg,#00bf95 0px,#00bf81 120.5px,#00bf69 189.5px,#03bf55 224.5px,#0abf4c 241px,#0eff65 241px,#0fff59 250.5px,#28ff57 258.5px,#51ff4e 280.5px,#c8ff1c 358.5px,#f2ff04 383.5px,#f8ff00 387.5px,#fffd00 392.5px,#ffd600 421.5px,#ffc700 436px,#bf9500 436px,#bf8600 461px)"></i>
<i style="top:188px;left:12px;width:463px;background:linear-gradient(90deg,#00bf95 0px,#00bf81 120.5px,#00bf69 189.5px,#03bf57 223.5px,#0abf4e 240px,#0eff67 240px,#12ff5b 250.5px,#28ff59 257.5px,#50ff52 278.5px,#c0ff22 352.5px,#f5ff06 384.5px,#feff00 389.5px,#ffd400 421.5px,#ffc400 438px,#bf9200 438px,#bf8400 463px)"></i>
<i style="top:189px;left:12px;width:466px;background:linear-gradient(90deg,#00bf95 0px,#00bf81 121.5px,#00bf69 190.5px,#03bf58 222.5px,#0bbf4f 240px,#0fff68 240px,#12ff5e 249.5px,#28ff5c 256.5px,#4fff55 276.5px,#afff2c 340.5px,#f6ff0b 383.5px,#fffc01 390.5px,#ffd500 418.5px,#ffc000 440px,#bf9000 440px,#bf8100 466px)"></i>
<i style="top:190px;left:12px;width:468px;background:linear-gradient(90deg,#00bf96 0px,#00bf82 121.5px,#00bf6a 190.5px,#03bf59 221.5px,#0cbf51 239px,#10ff6b 239px,#15ff5f 249.5px,#2aff5e 256.5px,#51ff57 276.5px,#acff30 337.5px,#fbff0b 385.5px,#fffa05 390.5px,#fff400 394.5px,#ffcd00 424.5px,#ffbc00 443px,#bf8c00 443px,#bf7f00 468px)"></i>
<i style="top:191px;left:13px;width:469px;background:linear-gradient(90deg,#00bf96 0px,#00bf82 120.5px,#00bf6b 189.5px,#03bf5b 219.5px,#0dbf52 238px,#11ff6c 238px,#14ff62 247.5px,#2bff61 254.5px,#51ff5a 274.5px,#a1ff38 328.5px,#ffff0d 385.5px,#ffed00 396.5px,#ffc700 427.5px,#ffb900 444px,#bf8a00 444px,#bf7d00 469px)"></i>
<i style="top:192px;left:13px;width:471px;background:linear-gradient(90deg,#00bf97 0px,#00bf83 120.5px,#00bf6b 189.5px,#03bf5c 218.5px,#0dbf53 237px,#12ff6f 237px,#15ff65 246.5px,#32ff62 256.5px,#5aff5b 278.5px,#c1ff2d 347.5px,#fffd0f 385.5px,#ffe800 398.5px,#ffc300 430.5px,#ffb600 446px,#bf8800 446px,#bf7b00 471px)"></i>
<i style="top:193px;left:13px;width:473px;background:linear-gradient(90deg,#00bf97 0px,#00bf83 121.5px,#00bf6c 189.5px,#03bf5d 217.5px,#0ebf55 237px,#13ff70 237px,#16ff66 246.5px,#2bff66 252.5px,#50ff61 270.5px,#90ff46 314.5px,#e4ff21 367.5px,#fffe14 383.5px,#ffe200 401.5px,#ffbc00 435.5px,#ffb200 448px,#bf8500 448px,#bf7900 473px)"></i>
<i style="top:194px;left:13px;width:475px;background:linear-gradient(90deg,#00bf97 0px,#00bf84 121.5px,#00bf6c 189.5px,#03bf5e 216.5px,#0ebf56 236px,#14ff72 236px,#17ff69 245.5px,#33ff68 254.5px,#59ff62 274.5px,#9cff43 321.5px,#f7ff1b 377.5px,#fffc16 383.5px,#fd0 403.5px,#ffb900 437.5px,#ffae00 451px,#bf8200 451px,#bf7700 475px)"></i>
<i style="top:195px;left:14px;width:476px;background:linear-gradient(90deg,#00bf98 0px,#00bf84 120.5px,#00bf6d 188.5px,#03bf5f 215.5px,#10bf58 235px,#15ff74 235px,#19ff6b 244.5px,#2eff6a 250.5px,#53ff66 268.5px,#8cff4f 308.5px,#d3ff2d 354.5px,#fffe1a 380.5px,#ffd800 405.5px,#ffb300 441.5px,#ffab00 452px,#bf8000 452px,#bf7500 476px)"></i>
<i style="top:196px;left:14px;width:478px;background:linear-gradient(90deg,#00bf98 0px,#00bf85 120.5px,#00bf6e 188.5px,#03bf60 214.5px,#10bf59 234px,#16ff76 234px,#1aff6e 243.5px,#33ff6d 251.5px,#59ff68 270.5px,#91ff50 310.5px,#d7ff2e 355.5px,#fffd1d 379.5px,#ffd300 407.5px,#ffaf00 444.5px,#ffa800 454px,#bf7e00 454px,#bf7300 478px)"></i>
<i style="top:197px;left:14px;width:480px;background:linear-gradient(90deg,#00bf98 0px,#00bf85 121.5px,#00bf6e 189.5px,#03bf61 213.5px,#11bf5a 234px,#18ff78 234px,#1dff70 243.5px,#34ff6f 250.5px,#58ff6b 268.5px,#8eff55 306.5px,#cfff34 349.5px,#ffff21 377.5px,#ffd103 407.5px,#ffc800 415.5px,#ffa500 455.5px,#ffa500 457px,#bf7b00 457px,#bf7100 480px)"></i>
<i style="top:198px;left:14px;width:482px;background:linear-gradient(90deg,#00bf99 0px,#00bf85 121.5px,#00bf6e 189.5px,#03bf63 212.5px,#12bf5c 233px,#19ff7a 233px,#1dff72 242.5px,#34ff72 249.5px,#58ff6f 266.5px,#8aff5b 302.5px,#c8ff3a 344.5px,#fffe24 376.5px,#ffd107 406.5px,#ffc900 412.5px,#ffa700 451.5px,#ffa200 459px,#bf7900 459px,#bf6f00 482px)"></i>
<i style="top:199px;left:14px;width:484px;background:linear-gradient(90deg,#00bf99 0px,#00bf86 121.5px,#00bf6f 189.5px,#03bf63 212.5px,#13bf5d 233px,#1aff7c 233px,#21ff74 242.5px,#37ff74 249.5px,#5cff71 267.5px,#8cff5d 302.5px,#c7ff3d 342.5px,#fffe26 375.5px,#ffd00b 405.5px,#ffc300 416.5px,#ffa100 457.5px,#ff9f00 461px,#bf7700 461px,#bf6d00 484px)"></i>
<i style="top:200px;left:15px;width:484px;background:linear-gradient(90deg,#00bf99 0px,#00bf86 121.5px,#00bf70 188.5px,#03bf65 210.5px,#13bf5f 231px,#1bff7e 231px,#20ff77 240.5px,#35ff77 246.5px,#58ff75 262.5px,#86ff65 294.5px,#c0ff43 336.5px,#fffd29 373.5px,#ffd00e 403.5px,#ffbf00 417.5px,#ff9d00 459.5px,#ff9c00 462px,#bf7500 462px,#bf6c00 484px)"></i>
<i style="top:201px;left:15px;width:486px;background:linear-gradient(90deg,#00bf9a 0px,#00bf87 121.5px,#00bf70 188.5px,#03bf66 209.5px,#15bf60 231px,#1cff80 231px,#21ff7a 239.5px,#3eff79 248.5px,#62ff77 266.5px,#8eff64 299.5px,#c4ff45 337.5px,#fffd2c 372.5px,#ffcf11 402.5px,#fb0 420.5px,#f90 465px,#bf7200 465px,#bf6a00 486px)"></i>
<i style="top:202px;left:15px;width:488px;background:linear-gradient(90deg,#00bf9a 0px,#00bf87 121.5px,#00bf71 188.5px,#03bf67 208.5px,#15bf62 230px,#1dff82 230px,#23ff7b 239.5px,#39ff7c 245.5px,#5cff7b 261.5px,#84ff6e 289.5px,#bcff4b 331.5px,#fffe30 370.5px,#ffd014 400.5px,#ffb700 422.5px,#ff9600 467px,#bf7000 467px,#bf6800 488px)"></i>
<i style="top:203px;left:15px;width:490px;background:linear-gradient(90deg,#00bf9b 0px,#00bf88 121.5px,#00bf71 188.5px,#03bf68 208.5px,#15bf63 228.5px,#16bf63 230px,#1fff84 230px,#24ff7e 238.5px,#41ff7f 247.5px,#64ff7d 264.5px,#8eff6d 295.5px,#c1ff4c 333.5px,#fffe32 369.5px,#ffd017 399.5px,#ffb200 425.5px,#ff9300 469px,#bf6e00 469px,#bf6600 490px)"></i>
<i style="top:204px;left:16px;width:491px;background:linear-gradient(90deg,#00bf9b 0px,#00bf88 121.5px,#00bf72 188.5px,#03bf69 206.5px,#15bf65 226.5px,#17bf65 228px,#20ff86 228px,#27ff80 237.5px,#3dff81 243.5px,#61ff81 259.5px,#86ff76 285.5px,#bdff52 328.5px,#fffe35 367.5px,#ffcf1a 397.5px,#ffaf00 426.5px,#ff9000 471px,#bf6c00 471px,#bf6400 491px)"></i>
<i style="top:205px;left:16px;width:493px;background:linear-gradient(90deg,#00bf9b 0px,#00bf89 121.5px,#00bf72 188.5px,#03bf6a 206.5px,#15bf66 225.5px,#18bf66 228px,#21ff88 228px,#28ff83 236.5px,#43ff84 244.5px,#65ff84 260.5px,#8bff78 287.5px,#beff55 327.5px,#fffd37 366.5px,#ffcf1c 396.5px,#fa0 429.5px,#ff8e00 473px,#bf6a00 473px,#bf6300 493px)"></i>
<i style="top:206px;left:16px;width:495px;background:linear-gradient(90deg,#00bf9c 0px,#00bf89 121.5px,#00bf73 188.5px,#03bf6b 205.5px,#16bf68 224.5px,#18bf68 227px,#22ff8a 227px,#2bff85 236.5px,#43ff86 243.5px,#67ff87 259.5px,#8aff7d 284.5px,#beff58 326.5px,#fffd3a 365.5px,#ffce1f 395.5px,#ffa700 431.5px,#ff8b00 475px,#bf6800 475px,#bf6100 495px)"></i>
<i style="top:207px;left:16px;width:497px;background:linear-gradient(90deg,#00bf9c 0px,#00bf8a 121.5px,#00bf74 188.5px,#03bf6c 205.5px,#16bf69 223.5px,#1abf69 227px,#24ff8c 227px,#2bff87 235.5px,#44ff89 242.5px,#68ff8a 258.5px,#89ff82 281.5px,#b2ff64 316.5px,#e4ff48 348.5px,#fffe3e 363.5px,#ffd123 392.5px,#ffa501 431.5px,#f80 477px,#bf6600 477px,#bf5f00 497px)"></i>
<i style="top:208px;left:16px;width:498px;background:linear-gradient(90deg,#00bf9d 0px,#00bf8a 122.5px,#00bf74 188.5px,#03bf6d 204.5px,#16bf6a 222.5px,#1abf6b 226px,#25ff8e 226px,#2fff8a 235.5px,#47ff8b 242.5px,#6cff8d 258.5px,#8cff85 281.5px,#b2ff69 314.5px,#e1ff4d 345.5px,#fffe40 362.5px,#ffd025 391.5px,#ffa505 430.5px,#ff9f00 436.5px,#ff8500 480px,#bf6400 480px,#bf5e00 498px)"></i>
<i style="top:209px;left:17px;width:499px;background:linear-gradient(90deg,#00bf9d 0px,#00bf8b 121.5px,#00bf75 187.5px,#04bf6e 203.5px,#16bf6c 220.5px,#1cbf6c 225px,#27ff90 225px,#2eff8c 233.5px,#48ff8e 240.5px,#6bff90 255.5px,#8bff8a 276.5px,#abff73 306.5px,#d4ff56 335.5px,#fffe43 360.5px,#ffd027 389.5px,#ffa409 428.5px,#ff9c00 438.5px,#ff8300 481px,#bf6200 481px,#bf5c00 499px)"></i>
<i style="top:210px;left:17px;width:501px;background:linear-gradient(90deg,#00bf9d 0px,#00bf8b 122.5px,#00bf75 188.5px,#03bf6f 202.5px,#16bf6d 219.5px,#1cbf6e 224px,#27ff92 224px,#2fff8e 232.5px,#4eff90 241.5px,#72ff93 257.5px,#91ff8c 279.5px,#b1ff73 309.5px,#d9ff57 337.5px,#fffd46 359.5px,#ffcf2a 388.5px,#ffa40b 427.5px,#ff9800 440.5px,#ff8100 483px,#bf6000 483px,#bf5b00 501px)"></i>
<i style="top:211px;left:17px;width:503px;background:linear-gradient(90deg,#00bf9e 0px,#00bf8c 122.5px,#00bf76 188.5px,#04bf70 202.5px,#17bf6e 219.5px,#1ebf6f 224px,#29ff94 224px,#32ff90 232.5px,#49ff92 238.5px,#6eff95 253.5px,#8cff93 272.5px,#aaff7f 300.5px,#ceff61 329.5px,#ffff4a 357.5px,#ffd02d 386.5px,#ffa510 424.5px,#ff9500 443.5px,#ff7e00 485px,#bf5e00 485px,#bf5900 503px)"></i>
<i style="top:212px;left:17px;width:505px;background:linear-gradient(90deg,#00bf9e 0px,#00bf8c 122.5px,#00bf77 188.5px,#04bf71 201.5px,#15bf70 217.5px,#1ebf70 223px,#2aff96 223px,#33ff93 231.5px,#52ff96 240.5px,#7f9 256.5px,#95ff94 277.5px,#b1ff7d 305.5px,#d5ff60 332.5px,#fffe4c 356.5px,#ffcf2f 385.5px,#ffa412 423.5px,#ff9200 445.5px,#ff7b00 488px,#bf5c00 488px,#bf5700 505px)"></i>
<i style="top:213px;left:18px;width:506px;background:linear-gradient(90deg,#00bf9f 0px,#00bf8d 122.5px,#00bf77 188.5px,#05bf72 201.5px,#18bf71 217.5px,#20bf72 222px,#2cff98 222px,#35ff95 230.5px,#4dff97 236.5px,#73ff9b 251.5px,#91ff99 270.5px,#acff88 296.5px,#ceff69 325.5px,#fffe4f 354.5px,#ffcf31 383.5px,#ffa414 421.5px,#ff8e00 447.5px,#ff7900 489px,#bf5b00 489px,#bf5600 506px)"></i>
<i style="top:214px;left:18px;width:508px;background:linear-gradient(90deg,#00bf9f 0px,#00bf8d 122.5px,#00bf78 188.5px,#05bf73 201.5px,#1abf73 217.5px,#20bf73 221px,#2dff9a 221px,#36ff97 229.5px,#54ff9a 237.5px,#78ff9e 252.5px,#96ff9c 271.5px,#afff8b 297.5px,#d0ff6b 325.5px,#fffd52 353.5px,#ffcf33 382.5px,#ffa317 420.5px,#ff8b00 450.5px,#f70 491px,#bf5900 491px,#bf5400 508px)"></i>
<i style="top:215px;left:18px;width:510px;background:linear-gradient(90deg,#00bfa0 0px,#00bf8e 122.5px,#00bf78 188.5px,#06bf74 201.5px,#1abf74 216.5px,#22bf75 221px,#2fff9c 221px,#39ff99 229.5px,#54ff9c 236.5px,#7affa1 251.5px,#96ffa0 269.5px,#afff91 294.5px,#ceff71 322.5px,#fffd55 352.5px,#ffce36 381.5px,#ffa319 419.5px,#f80 452.5px,#ff7400 494px,#bf5700 494px,#bf5300 510px)"></i>
<i style="top:216px;left:18px;width:513px;background:linear-gradient(90deg,#00bfa0 0px,#00bf8e 123.5px,#00bf79 188.5px,#06bf75 201.5px,#1bbf75 216.5px,#22bf76 220px,#2fff9e 220px,#39ff9c 228.5px,#55ff9f 235.5px,#7bffa4 250.5px,#99ffa4 268.5px,#b1ff95 293.5px,#ceff75 321.5px,#ffff59 350.5px,#ffcf39 379.5px,#ffa41c 416.5px,#ff8400 455.5px,#ff7200 496px,#bf5500 496px,#bf5100 513px)"></i>
<i style="top:217px;left:19px;width:514px;background:linear-gradient(90deg,#00bfa0 0px,#00bf8f 122.5px,#00bf7a 187.5px,#08bf76 201.5px,#1fbf77 216.5px,#24bf78 219px,#31ffa0 219px,#3dff9e 227.5px,#58ffa1 234.5px,#7fffa7 249.5px,#9bffa7 266.5px,#b2ff9a 290.5px,#cfff79 319.5px,#fffe5c 348.5px,#ffce3b 377.5px,#ffa41e 414.5px,#ff8200 456.5px,#ff7000 497px,#bf5300 497px,#bf4f00 514px)"></i>
<i style="top:218px;left:19px;width:516px;background:linear-gradient(90deg,#00bfa1 0px,#00bf8f 123.5px,#00bf7a 188.5px,#0bbf77 203.5px,#23bf79 218px,#32ffa2 218px,#3dffa0 226.5px,#59ffa3 233.5px,#80ffa9 248.5px,#9dffab 265.5px,#b4ff9e 289.5px,#d0ff7d 318.5px,#fffe5f 347.5px,#ffcf3e 375.5px,#ffa522 411.5px,#ff7f00 458.5px,#ff6d00 499px,#bf5200 499px,#bf4e00 516px)"></i>
<i style="top:219px;left:19px;width:518px;background:linear-gradient(90deg,#00bfa1 0px,#00bf90 123.5px,#00bf7b 188.5px,#0cbf78 203.5px,#25bf7b 218px,#34ffa3 218px,#41ffa2 226.5px,#5fffa6 234.5px,#86ffac 249.5px,#a1ffae 266.5px,#b7ffa1 289.5px,#d2ff80 318.5px,#fbff65 343.5px,#fffb60 347.5px,#ffcd3f 375.5px,#ffa322 412.5px,#ff7d01 458.5px,#ff6b00 502px,#bf5000 502px,#bf4c00 518px)"></i>
<i style="top:220px;left:19px;width:520px;background:linear-gradient(90deg,#00bfa2 0px,#00bf91 123.5px,#00bf7c 188.5px,#0dbf79 203.5px,#25bf7c 217px,#34ffa5 217px,#40ffa4 225.5px,#59ffa7 231.5px,#81ffae 245.5px,#9effb1 261.5px,#b5ffa9 283.5px,#c9ff90 308.5px,#e8ff74 331.5px,#fffd65 345.5px,#ffd144 371.5px,#ffa728 406.5px,#ff7e07 455.5px,#ff7900 464.5px,#ff6900 504px,#bf4e00 504px,#bf4b00 520px)"></i>
<i style="top:221px;left:19px;width:522px;background:linear-gradient(90deg,#00bfa2 0px,#00bf91 124.5px,#02bf7c 191.5px,#12bf7a 206.5px,#27bf7d 217px,#36ffa7 217px,#41ffa6 224.5px,#63ffab 233.5px,#8bffb2 248.5px,#a7ffb4 265.5px,#bbffa9 288.5px,#d5ff87 317.5px,#fcff6c 341.5px,#fff965 346.5px,#ffce45 372.5px,#ffa328 408.5px,#ff7b06 458.5px,#ff7600 466.5px,#ff6700 506px,#bf4d00 506px,#bf4900 522px)"></i>
<i style="top:222px;left:20px;width:523px;background:linear-gradient(90deg,#00bfa3 0px,#00bf92 123.5px,#02bf7d 190.5px,#14bf7c 205.5px,#27bf7e 215px,#36ffa9 215px,#43ffa8 223.5px,#5dffac 229.5px,#85ffb3 243.5px,#a4ffb7 259.5px,#baffb1 281.5px,#cbff9a 304.5px,#e6ff7e 326.5px,#fffe6d 341.5px,#ffd34b 366.5px,#ffa92e 400.5px,#ff800e 448.5px,#ff7300 468.5px,#ff6400 508px,#bf4b00 508px,#bf4800 523px)"></i>
<i style="top:223px;left:20px;width:526px;background:linear-gradient(90deg,#00bfa3 0px,#00bf92 124.5px,#02bf7e 189.5px,#13bf7d 204.5px,#29bf80 215px,#38ffab 215px,#4fa 222.5px,#64ffaf 230.5px,#8bffb6 244.5px,#a8ffba 260.5px,#bdffb3 282.5px,#ceff9c 305.5px,#e8ff80 326.5px,#fffe70 340.5px,#ffd44f 364.5px,#ffa931 398.5px,#ff8112 445.5px,#ff7000 470.5px,#ff6200 510px,#bf4900 510px,#bf4600 526px)"></i>
<i style="top:224px;left:20px;width:528px;background:linear-gradient(90deg,#00bfa4 0px,#00bf93 124.5px,#02bf7f 189.5px,#13bf7e 203.5px,#28bf81 214px,#39ffad 214px,#47ffac 222.5px,#64ffb1 229.5px,#8cffb8 243.5px,#aaffbd 259.5px,#bfffb8 280.5px,#ceffa3 302.5px,#e5ff87 323.5px,#fffd74 339.5px,#ffd451 363.5px,#fa3 396.5px,#ff8114 443.5px,#ff6e00 473.5px,#ff6000 512px,#bf4800 512px,#bf4500 528px)"></i>
<i style="top:225px;left:20px;width:530px;background:linear-gradient(90deg,#00bfa4 0px,#00bf93 125.5px,#02bf80 188.5px,#12bf7f 202.5px,#2abf83 214px,#3bffaf 214px,#46ffae 221.5px,#64ffb2 228.5px,#8dffba 242.5px,#acffc0 258.5px,#c0ffbc 278.5px,#cfffa9 300.5px,#e4ff8d 321.5px,#fffd77 338.5px,#ffd453 362.5px,#ffa935 395.5px,#ff8016 442.5px,#ff6b00 476.5px,#ff5e00 514px,#bf4600 514px,#bf4300 530px)"></i>
<i style="top:226px;left:21px;width:531px;background:linear-gradient(90deg,#00bfa4 0px,#00bf94 125.5px,#02bf81 187.5px,#13bf80 201.5px,#2abf84 212px,#3bffb0 212px,#4affb0 220.5px,#6bffb5 228.5px,#93ffbe 242.5px,#b1ffc3 258.5px,#c5ffbe 279.5px,#d3ffa9 301.5px,#e8ff8e 321.5px,#fffe7d 335.5px,#ffd658 358.5px,#ffac39 390.5px,#ff831b 435.5px,#ff6800 478.5px,#ff5c00 516px,#bf4500 516px,#bf4200 531px)"></i>
<i style="top:227px;left:21px;width:533px;background:linear-gradient(90deg,#00bfa5 0px,#00bf95 125.5px,#02bf82 186.5px,#13bf82 200.5px,#2cbf85 212px,#3dffb2 212px,#49ffb2 219.5px,#68ffb6 226.5px,#92ffbf 240.5px,#b0ffc5 255.5px,#c4ffc4 273.5px,#d1ffb4 295.5px,#e5ff97 317.5px,#fffe80 334.5px,#ffd65b 357.5px,#ffad3c 388.5px,#ff831e 433.5px,#f60 480.5px,#ff5a00 518px,#bf4300 518px,#bf4000 533px)"></i>
<i style="top:228px;left:21px;width:535px;background:linear-gradient(90deg,#00bfa5 0px,#00bf95 125.5px,#01bf84 185.5px,#12bf83 199.5px,#2bbf86 211px,#3dffb4 211px,#4effb4 219.5px,#6fffb9 227.5px,#98ffc2 241.5px,#b5ffc8 256.5px,#c7ffc7 274.5px,#d3ffb7 295.5px,#e5ff9b 316.5px,#fffe84 333.5px,#ffd55e 356.5px,#ffad3f 386.5px,#ff8421 430.5px,#ff6300 483.5px,#ff5800 520px,#bf4200 520px,#bf3f00 535px)"></i>
<i style="top:229px;left:21px;width:537px;background:linear-gradient(90deg,#00bfa6 0px,#00bf96 126.5px,#02bf85 185.5px,#13bf84 199.5px,#2dbf88 211px,#3fffb6 211px,#4cffb6 218.5px,#67ffba 224.5px,#93ffc3 238.5px,#b3ffca 253.5px,#c7ffcb 270.5px,#d3ffbe 291.5px,#e5ffa1 314.5px,#fffd88 332.5px,#ffd560 355.5px,#ffae41 384.5px,#ff8524 427.5px,#ff6100 484.5px,#ff5600 522px,#bf4000 522px,#bf3e00 537px)"></i>
<i style="top:230px;left:22px;width:538px;background:linear-gradient(90deg,#00bfa6 0px,#00bf96 126.5px,#01bf86 183.5px,#13bf85 197.5px,#2cbf89 209px,#3fffb7 209px,#4cffb8 216.5px,#72ffbd 225.5px,#9cffc6 239.5px,#baffcd 254.5px,#ccffcd 272.5px,#d7ffbe 293.5px,#e8ffa2 314.5px,#fffd8c 330.5px,#ffd563 353.5px,#ffae44 381.5px,#ff8526 424.5px,#ff5f00 484.5px,#ff5400 524px,#bf3f00 524px,#bf3c00 538px)"></i>
<i style="top:231px;left:22px;width:540px;background:linear-gradient(90deg,#00bfa7 0px,#00bf97 126.5px,#02bf87 183.5px,#14bf86 197.5px,#2fbf8b 209px,#41ffb9 209px,#4fffb9 216.5px,#6affbd 222.5px,#97ffc7 236.5px,#b8ffcf 251.5px,#ccffd1 267.5px,#d7ffc6 288.5px,#e7ffaa 311.5px,#fffe92 328.5px,#ffd667 351.5px,#ffb149 377.5px,#ff892b 418.5px,#ff6107 478.5px,#ff5c00 489.5px,#ff5200 526px,#bf3d00 526px,#bf3b00 540px)"></i>
<i style="top:232px;left:22px;width:542px;background:linear-gradient(90deg,#00bfa7 0px,#00bf98 127.5px,#02bf88 182.5px,#13bf87 196.5px,#2ebf8b 208px,#40ffbb 208px,#4effbb 215.5px,#71ffc0 223.5px,#9dffca 237.5px,#bdffd2 252.5px,#d0ffd4 269.5px,#daffc8 290.5px,#eaffab 312.5px,#fffe96 327.5px,#ffd66a 350.5px,#ffb24c 375.5px,#ff8a2e 415.5px,#ff620b 474.5px,#ff5900 492.5px,#ff5000 528px,#bf3c00 528px,#bf3a00 542px)"></i>
<i style="top:233px;left:22px;width:544px;background:linear-gradient(90deg,#00bfa8 0px,#00bf98 127.5px,#02bf89 182.5px,#14bf89 196.5px,#30bf8d 208px,#42ffbc 208px,#51ffbd 215.5px,#71ffc2 222.5px,#9effcb 236.5px,#beffd4 251.5px,#d1ffd7 267.5px,#dcffcc 288.5px,#eaffb1 310.5px,#fffe9a 326.5px,#ffd66d 349.5px,#ffb24e 374.5px,#ff8a30 413.5px,#ff630e 471.5px,#ff5700 494.5px,#ff4e00 531px,#bf3a00 531px,#bf3800 544px)"></i>
<i style="top:234px;left:23px;width:545px;background:linear-gradient(90deg,#00bfa8 0px,#00bf99 127.5px,#02bf8a 180.5px,#13bf8a 194.5px,#2fbf8e 206px,#42ffbe 206px,#50ffbf 213.5px,#71ffc3 220.5px,#9effcd 234.5px,#bfffd6 249.5px,#d3ffd9 265.5px,#deffd0 286.5px,#ecffb4 309.5px,#fffd9e 324.5px,#ffd46e 348.5px,#ffb150 372.5px,#ff8a32 411.5px,#ff6210 469.5px,#f50 496.5px,#ff4c00 532px,#bf3900 532px,#bf3700 545px)"></i>
<i style="top:235px;left:23px;width:547px;background:linear-gradient(90deg,#00bfa9 0px,#00bf9a 128.5px,#02bf8c 180.5px,#13bf8b 193.5px,#2ebf8f 204.5px,#31bf8f 206px,#44ffc0 206px,#54ffc1 213.5px,#78ffc6 221.5px,#a4ffd0 235.5px,#c4ffd9 250.5px,#d7ffdc 266.5px,#e0ffd2 287.5px,#eeffb7 309.5px,#fffda2 323.5px,#ffd471 347.5px,#ffb152 371.5px,#ff8a34 409.5px,#ff6213 467.5px,#ff5200 498.5px,#ff4a00 534px,#bf3700 534px,#bf3500 547px)"></i>
<i style="top:236px;left:24px;width:548px;background:linear-gradient(90deg,#00bfa9 0px,#00bf9a 128.5px,#02bf8d 178.5px,#12bf8c 191.5px,#2dbf90 202.5px,#30bf90 204px,#44ffc1 204px,#52ffc2 211.5px,#73ffc7 218.5px,#a1ffd1 232.5px,#c4ffda 247.5px,#d8ffde 263.5px,#e2ffd6 284.5px,#eeffbd 306.5px,#fffea8 320.5px,#ffd375 345.5px,#ffb155 368.5px,#ff8b37 405.5px,#ff6316 462.5px,#ff5000 500.5px,#ff4800 535px,#bf3600 535px,#bf3400 548px)"></i>
<i style="top:237px;left:24px;width:550px;background:linear-gradient(90deg,#00bfaa 0px,#00bf9b 129.5px,#02bf8e 178.5px,#13bf8d 191.5px,#2fbf91 202.5px,#32bf92 204px,#45ffc3 204px,#56ffc4 211.5px,#7affc9 219.5px,#a7ffd3 233.5px,#c8ffdc 248.5px,#dbffe0 264.5px,#e4ffd8 285.5px,#f0ffbe 307.5px,#fffeac 319.5px,#ffd276 345.5px,#ffb056 368.5px,#ff8938 405.5px,#ff6217 462.5px,#ff4e00 502.5px,#ff4600 538px,#bf3400 538px,#bf3300 550px)"></i>
<i style="top:238px;left:24px;width:552px;background:linear-gradient(90deg,#00bfaa 0px,#00bf9c 129.5px,#02bf8f 177.5px,#12bf8f 190.5px,#2ebf92 201.5px,#31bf93 203px,#45ffc4 203px,#54ffc5 210.5px,#71ffc9 216.5px,#a2ffd3 230.5px,#c5ffdd 245.5px,#daffe2 260.5px,#e5ffdd 281.5px,#edffc9 301.5px,#fffeb0 318.5px,#ffd179 344.5px,#ffb15a 366.5px,#ff8b3b 402.5px,#ff631a 458.5px,#ff4c00 505.5px,#f40 540px,#bf3300 540px,#bf3200 552px)"></i>
<i style="top:239px;left:25px;width:553px;background:linear-gradient(90deg,#00bfab 0px,#00bf9c 129.5px,#02bf90 176.5px,#13bf90 189.5px,#30bf94 200.5px,#33bf94 202px,#46ffc6 202px,#54ffc7 208.5px,#7cffcd 217.5px,#aaffd7 231.5px,#ccffe0 246.5px,#dfffe5 262.5px,#e8ffde 283.5px,#f2ffc7 304.5px,#fffdb4 316.5px,#ffd07a 343.5px,#ffaf5b 365.5px,#ff893c 401.5px,#ff621c 457.5px,#ff4900 506.5px,#ff4200 541px,#bf3200 541px,#bf3000 553px)"></i>
<i style="top:240px;left:25px;width:555px;background:linear-gradient(90deg,#00bfab 0px,#00bf9d 130.5px,#02bf92 175.5px,#12bf91 188.5px,#2ebf95 199.5px,#32bf95 201px,#46ffc8 201px,#56ffc9 208.5px,#74ffcd 214.5px,#a4ffd6 228.5px,#c9ffe0 243.5px,#deffe6 258.5px,#e8ffe3 279.5px,#efffd1 298.5px,#fffdb9 315.5px,#ffce7c 343.5px,#ffad5c 365.5px,#ff883e 400.5px,#ff611d 456.5px,#ff4700 509.5px,#ff4100 543px,#bf3000 543px,#bf2f00 555px)"></i>
<i style="top:241px;left:25px;width:557px;background:linear-gradient(90deg,#00bfac 0px,#00bf9d 131.5px,#02bf93 175.5px,#14bf92 188.5px,#30bf96 199.5px,#34bf97 201px,#48ffc9 201px,#55ffca 207.5px,#7bffcf 215.5px,#aaffd9 229.5px,#cdffe3 244.5px,#e1ffe8 259.5px,#ebffe4 280.5px,#f2ffd1 300.5px,#fffdbd 314.5px,#ffcc7d 343.5px,#ffab5d 365.5px,#ff873f 400.5px,#ff5f1e 457.5px,#ff4500 512.5px,#ff3f00 546px,#bf2f00 546px,#bf2e00 557px)"></i>
<i style="top:242px;left:26px;width:558px;background:linear-gradient(90deg,#00bfac 0px,#00bf9e 131.5px,#02bf94 173.5px,#13bf94 186.5px,#2fbf97 197.5px,#32bf98 199px,#47ffcb 199px,#58ffcc 206.5px,#7affd0 213.5px,#aaffda 227.5px,#ceffe4 242.5px,#e2ffea 257.5px,#ecffe7 278.5px,#f2ffd6 297.5px,#fffdc1 312.5px,#ffcb7f 342.5px,#ffaa5e 364.5px,#ff8640 398.5px,#ff5f20 454.5px,#ff4300 513.5px,#ff3d00 547px,#bf2d00 547px,#bf2c00 558px)"></i>
<i style="top:243px;left:26px;width:560px;background:linear-gradient(90deg,#00bfad 0px,#00bf9f 132.5px,#02bf95 173.5px,#14bf95 186.5px,#31bf98 197.5px,#34bf99 199px,#48ffcc 199px,#56ffcd 205.5px,#78ffd2 212.5px,#aaffdb 226.5px,#ccffe4 240.5px,#e3ffeb 255.5px,#edffea 275.5px,#f2ffdc 294.5px,#fffec7 310.5px,#ffc77e 343.5px,#ffa75e 365.5px,#ff8340 400.5px,#ff5c1f 458.5px,#ff4100 516.5px,#ff3b00 549px,#bf2c00 549px,#bf2b00 560px)"></i>
<i style="top:244px;left:27px;width:561px;background:linear-gradient(90deg,#00bfad 0px,#00bfa0 132.5px,#02bf96 171.5px,#13bf96 184.5px,#2fbf99 195.5px,#33bf9a 197px,#48ffce 197px,#5affcf 204.5px,#7bffd3 211.5px,#acffdd 225.5px,#cfffe6 239.5px,#e5ffed 254.5px,#efffec 274.5px,#f4ffde 293.5px,#fffecb 308.5px,#ffc67f 342.5px,#ffa660 363.5px,#ff8342 397.5px,#ff5c21 454.5px,#ff3f00 517.5px,#ff3900 551px,#bf2b00 551px,#bf2a00 561px)"></i>
<i style="top:245px;left:27px;width:562px;background:linear-gradient(90deg,#00bfae 0px,#00bfa0 133.5px,#02bf98 171.5px,#14bf97 184.5px,#31bf9b 195.5px,#35bf9b 197px,#49ffcf 197px,#57ffd0 203.5px,#7affd5 210.5px,#acffde 224.5px,#cfffe7 238.5px,#e6ffee 253.5px,#f0ffef 272.5px,#f4ffe3 291.5px,#fffdce 307.5px,#ffd08f 335.5px,#ffae6a 356.5px,#ff8e4e 383.5px,#ff682e 432.5px,#ff4107 507.5px,#ff3d00 520.5px,#ff3700 553px,#bf2900 553px,#bf2900 562px)"></i>
<i style="top:246px;left:27px;width:564px;background:linear-gradient(90deg,#00bfae 0px,#00bfa1 134.5px,#02bf99 170.5px,#13bf99 183.5px,#30bf9c 194.5px,#33bf9c 196px,#48ffd1 196px,#5bffd2 203.5px,#81ffd7 211.5px,#b1ffe0 225.5px,#d3ffe9 239.5px,#e8fff0 254.5px,#f2fff0 274.5px,#f6ffe3 293.5px,#fffdd2 306.5px,#ffd699 331.5px,#ffb271 352.5px,#ff9454 376.5px,#ff6f36 420.5px,#ff4811 490.5px,#ff3b00 522.5px,#ff3600 555px,#bf2800 555px,#bf2700 564px)"></i>
<i style="top:247px;left:28px;width:565px;background:linear-gradient(90deg,#00bfaf 0px,#00bfa2 134.5px,#02bf9a 169.5px,#14bf9a 182.5px,#32bf9d 193.5px,#35bf9e 195px,#4affd2 195px,#58ffd3 201.5px,#77ffd7 207.5px,#a7ffdf 220.5px,#cdffe8 234.5px,#e6fff0 249.5px,#f2fff3 266.5px,#f5ffea 286.5px,#fffdd6 304.5px,#ffdaa1 327.5px,#ffb475 349.5px,#ff9658 372.5px,#ff7139 414.5px,#ff4a16 482.5px,#ff3800 524.5px,#ff3400 556px,#bf2700 556px,#bf2600 565px)"></i>
<i style="top:248px;left:28px;width:567px;background:linear-gradient(90deg,#00bfaf 0px,#00bfa3 135.5px,#02bf9c 168.5px,#13bf9b 181.5px,#30bf9e 192.5px,#34bf9f 194px,#49ffd4 194px,#57ffd5 200.5px,#7effd9 208.5px,#b0ffe2 222.5px,#d4ffeb 236.5px,#eafff2 251.5px,#f4fff3 270.5px,#f8ffe9 290.5px,#fffdd9 303.5px,#ffdca7 325.5px,#ffb579 347.5px,#ff975c 369.5px,#ff733d 409.5px,#ff4c1a 475.5px,#ff3600 526.5px,#ff3200 559px,#bf2500 559px,#bf2500 567px)"></i>
<i style="top:249px;left:28px;width:569px;background:linear-gradient(90deg,#00bfb0 0px,#00bfa3 137.5px,#02bf9d 168.5px,#14bf9c 181.5px,#32bfa0 192.5px,#36bfa0 194px,#4affd6 194px,#59ffd7 200.5px,#78ffda 206.5px,#a9ffe2 219.5px,#cfffea 233.5px,#e8fff2 248.5px,#f4fff5 265.5px,#f8ffee 286.5px,#fffddc 302.5px,#ffdead 323.5px,#ffb57c 346.5px,#ff975e 368.5px,#ff733f 407.5px,#ff4c1d 472.5px,#ff3400 529.5px,#ff3000 561px,#bf2400 561px,#bf2300 569px)"></i>
<i style="top:250px;left:29px;width:570px;background:linear-gradient(90deg,#00bfb1 0px,#00bfa4 137.5px,#02bf9e 166.5px,#13bf9e 179.5px,#30bfa0 190.5px,#34bfa1 192px,#49ffd7 192px,#58ffd8 198.5px,#7fffdc 206.5px,#b2ffe5 220.5px,#d5ffed 234.5px,#ecfff4 249.5px,#f6fff6 267.5px,#f9ffed 288.5px,#fffddf 300.5px,#ffe1b4 320.5px,#ffb67f 344.5px,#ff9861 365.5px,#ff7644 401.5px,#ff4f21 464.5px,#ff3200 531.5px,#ff2e00 562px,#bf2300 562px,#bf2200 570px)"></i>
<i style="top:251px;left:29px;width:572px;background:linear-gradient(90deg,#00bfb1 0px,#00bfa5 138.5px,#02bf9f 166.5px,#14bf9f 179.5px,#32bfa2 190.5px,#36bfa2 192px,#4affd9 192px,#5affda 198.5px,#7dffdd 205.5px,#b1ffe5 219.5px,#d5ffee 233.5px,#edfff5 248.5px,#f7fff7 266.5px,#faffef 287.5px,#fffde2 299.5px,#ffe3ba 318.5px,#ffb682 343.5px,#ff9763 364.5px,#ff7746 398.5px,#ff5024 460.5px,#ff3102 528.5px,#ff2d00 565px,#bf2100 565px,#bf2100 572px)"></i>
<i style="top:252px;left:30px;width:573px;background:linear-gradient(90deg,#00bfb2 0px,#00bfa5 139.5px,#02bfa1 164.5px,#13bfa0 177.5px,#31bfa3 188.5px,#34bfa3 190px,#49ffda 190px,#58ffdb 196.5px,#7cffde 203.5px,#b0ffe6 217.5px,#d5ffee 231.5px,#edfff5 246.5px,#f8fff8 264.5px,#fbfff1 286.5px,#fffde5 297.5px,#ffe5c0 315.5px,#ffb483 342.5px,#ff9664 363.5px,#ff7547 397.5px,#ff4e25 459.5px,#ff2e00 535.5px,#ff2b00 566px,#bf2000 566px,#bf2000 573px)"></i>
<i style="top:253px;left:30px;width:575px;background:linear-gradient(90deg,#00bfb2 0px,#00bfa6 141.5px,#02bfa2 164.5px,#14bfa2 177.5px,#2fbfa4 187.5px,#36bfa5 190px,#4bffdc 190px,#5bffdd 196.5px,#7effe0 203.5px,#b2ffe8 217.5px,#d7ffef 231.5px,#eefff6 246.5px,#f9fff9 264.5px,#fcfff2 286.5px,#fffce7 297.5px,#ffe4c1 315.5px,#ffb384 342.5px,#ff9465 363.5px,#ff7448 397.5px,#ff4d25 460.5px,#ff2c00 538.5px,#ff2900 568px,#bf1f00 568px,#bf1e00 575px)"></i>
<i style="top:254px;left:30px;width:577px;background:linear-gradient(90deg,#00bfb3 0px,#00bfa7 142.5px,#02bfa3 163.5px,#13bfa3 176.5px,#31bfa5 187.5px,#34bfa6 189px,#49ffdd 189px,#58ffde 195.5px,#78ffe1 201.5px,#aaffe7 214.5px,#d2ffef 228.5px,#ebfff6 242.5px,#f8fffa 259.5px,#fcfff5 283.5px,#fffce9 296.5px,#ffe5c5 314.5px,#ffb186 342.5px,#ff9266 363.5px,#ff734a 396.5px,#ff4c27 458.5px,#ff2a00 540.5px,#ff2700 570px,#bf1d00 570px,#bf1d00 577px)"></i>
<i style="top:255px;left:31px;width:578px;background:linear-gradient(90deg,#00bfb3 0px,#00bfa8 143.5px,#02bfa5 162.5px,#14bfa4 175.5px,#2fbfa6 185.5px,#36bfa7 188px,#4bffdf 188px,#5cffe0 194.5px,#83ffe3 202.5px,#b6ffea 216.5px,#dafff2 230.5px,#f1fff8 245.5px,#fafffb 263.5px,#fdfff4 286.5px,#fff9e5 298.5px,#ffdfbf 316.5px,#ffae85 342.5px,#ff9066 363.5px,#ff7049 397.5px,#ff4926 461.5px,#ff2901 537.5px,#ff2500 572px,#bf1c00 572px,#bf1c00 578px)"></i>
<i style="top:256px;left:31px;width:580px;background:linear-gradient(90deg,#00bfb4 0px,#00bfa9 145.5px,#03bfa6 162.5px,#15bfa6 175.5px,#31bfa8 185.5px,#34bfa8 187px,#49ffe1 187px,#58ffe1 193.5px,#78ffe4 199.5px,#abffea 212.5px,#d3fff1 226.5px,#ecfff7 240.5px,#f9fffb 257.5px,#fdfff7 282.5px,#fffbed 294.5px,#ffe6cc 311.5px,#ffae88 341.5px,#ff9069 361.5px,#ff724d 393.5px,#ff4b2a 455.5px,#ff2700 542.5px,#ff2400 574px,#bf1b00 574px,#bf1a00 580px)"></i>
<i style="top:257px;left:31px;width:582px;background:linear-gradient(90deg,#00bfb5 0px,#00bfaa 147.5px,#02bfa7 161.5px,#14bfa7 174.5px,#2fbfa9 184.5px,#36bfaa 187px,#4bffe2 187px,#57ffe3 192.5px,#7fffe6 200.5px,#b3ffec 214.5px,#d9fff3 228.5px,#f0fff8 242.5px,#fbfffc 259.5px,#fefff7 284.5px,#fff8e9 297.5px,#ffdfc4 315.5px,#ffab87 342.5px,#ff8c67 363.5px,#ff6d4b 397.5px,#ff4627 462.5px,#ff2400 547.5px,#f20 576px,#bf1900 576px,#bf1900 582px)"></i>
<i style="top:258px;left:32px;width:583px;background:linear-gradient(90deg,#00bfb5 0px,#00bfaa 148.5px,#03bfa9 160.5px,#15bfa9 173.5px,#30bfaa 183.5px,#34bfab 185px,#49ffe4 185px,#58ffe4 191.5px,#74ffe6 196.5px,#a8ffec 209.5px,#d1fff2 223.5px,#ecfff8 237.5px,#fafffc 253.5px,#fefff9 280.5px,#fffaee 293.5px,#ffe5cf 310.5px,#fa8 341.5px,#ff8c69 361.5px,#ff6e4e 393.5px,#ff472a 457.5px,#ff2300 547.5px,#ff2000 577px,#bf1800 577px,#bf1800 583px)"></i>
<i style="top:259px;left:32px;width:585px;background:linear-gradient(90deg,#00bfb6 0px,#00bfab 150.5px,#03bfaa 160.5px,#16bfaa 173.5px,#32bfac 183.5px,#36bfac 185px,#4affe6 185px,#56ffe6 190.5px,#7fffe9 198.5px,#b4ffee 212.5px,#dafff4 226.5px,#f1fff9 240.5px,#fcfffd 257.5px,#fffff9 283.5px,#fff5e8 298.5px,#ffd9c2 316.5px,#ffa889 341.5px,#ff8a6a 361.5px,#ff6d4e 393.5px,#ff462b 457.5px,#ff2100 549.5px,#ff1e00 580px,#bf1700 580px,#bf1600 585px)"></i>
<i style="top:260px;left:33px;width:586px;background:linear-gradient(90deg,#00bfb6 0px,#00bfac 152.5px,#08bfab 163.5px,#1ebfac 175.5px,#34bfad 183px,#49ffe7 183px,#59ffe8 189.5px,#79ffea 195.5px,#acffee 208.5px,#d4fff4 222.5px,#eefff9 236.5px,#fbfffd 252.5px,#fffffa 281.5px,#fff6ea 296.5px,#ffdac5 314.5px,#ffa78a 340.5px,#ff896b 360.5px,#ff6b4f 392.5px,#ff442b 457.5px,#ff1f00 551.5px,#ff1c00 581px,#bf1500 581px,#bf1500 586px)"></i>
<i style="top:261px;left:33px;width:588px;background:linear-gradient(90deg,#00bfb7 0px,#01bfad 156.5px,#12bfad 169.5px,#2ebfae 180.5px,#35bfaf 183px,#4affe9 183px,#56ffe9 188.5px,#7bffeb 195.5px,#b1fff0 209.5px,#d8fff5 223.5px,#f0fffa 237.5px,#fcfffd 254.5px,#fffffa 282.5px,#fff4e9 297.5px,#ffd7c4 315.5px,#ffa389 341.5px,#ff866b 361.5px,#ff684f 394.5px,#ff422b 460.5px,#ff1d00 554.5px,#ff1b00 583px,#bf1400 583px,#bf1400 588px)"></i>
<i style="top:262px;left:33px;width:590px;background:linear-gradient(90deg,#00bfb8 0px,#02bfae 156.5px,#13bfae 169.5px,#30bfaf 180.5px,#33bfb0 182px,#49ffeb 182px,#59ffeb 188.5px,#7dffed 195.5px,#b3fff1 209.5px,#d9fff6 223.5px,#f1fffa 237.5px,#fdfffe 254.5px,#fffefa 282.5px,#fff4ea 297.5px,#ffd6c4 315.5px,#ffa289 341.5px,#ff846b 361.5px,#ff674f 394.5px,#ff402b 461.5px,#ff1a00 557.5px,#ff1900 586px,#bf1200 586px,#bf1200 590px)"></i>
<i style="top:263px;left:34px;width:591px;background:linear-gradient(90deg,#00bfb8 0px,#01bfb0 154.5px,#12bfb0 167.5px,#2ebfb1 178.5px,#35bfb1 181px,#4affec 181px,#56ffed 186.5px,#76ffee 192.5px,#aafff2 205.5px,#d3fff6 219.5px,#eefffa 233.5px,#fcfffd 249.5px,#fffefb 280.5px,#fff4ec 295.5px,#ffd9ca 312.5px,#ffa28c 339.5px,#ff846d 359.5px,#ff6751 391.5px,#ff402d 457.5px,#ff1800 557.5px,#ff1700 587px,#bf1100 587px,#bf1100 591px)"></i>
<i style="top:264px;left:34px;width:593px;background:linear-gradient(90deg,#00bfb9 0px,#02bfb1 154.5px,#13bfb1 167.5px,#30bfb2 178.5px,#33bfb2 180px,#48ffee 180px,#54ffee 185.5px,#81fff0 194.5px,#b6fff4 208.5px,#dbfff8 222.5px,#f2fffb 236.5px,#fdfffe 253.5px,#fffefb 281.5px,#fff3eb 296.5px,#ffd4c6 314.5px,#ff9f8b 340.5px,#ff816d 360.5px,#ff6451 393.5px,#ff3d2c 461.5px,#ff1600 561.5px,#ff1500 589px,#bf1000 589px,#bf0f00 593px)"></i>
<i style="top:265px;left:34px;width:595px;background:linear-gradient(90deg,#00bfba 0px,#01bfb3 153.5px,#12bfb3 166.5px,#2ebfb3 177.5px,#35bfb4 180px,#49fff0 180px,#55fff0 185.5px,#71fff1 190.5px,#a6fff4 203.5px,#d1fff8 217.5px,#edfffb 231.5px,#fbfffe 247.5px,#fffefc 280.5px,#fff4ed 295.5px,#ffd8cc 312.5px,#ff9d8c 340.5px,#ff806e 360.5px,#ff6252 393.5px,#ff3b2c 462.5px,#ff1400 564.5px,#ff1300 591px,#bf0e00 591px,#bf0e00 595px)"></i>
<i style="top:266px;left:35px;width:597px;background:linear-gradient(90deg,#00bfba 0px,#02bfb4 152.5px,#13bfb4 165.5px,#2fbfb5 176.5px,#33bfb5 178px,#48fff2 178px,#53fff2 183.5px,#7dfff3 191.5px,#b2fff6 205.5px,#d9fff9 219.5px,#f1fffc 233.5px,#fdfffe 250.5px,#fffefc 280.5px,#fff2ec 295.5px,#ffd5ca 312.5px,#ff9c8d 339.5px,#ff7e6f 359.5px,#ff6152 392.5px,#ff3a2d 461.5px,#ff1200 565.5px,#f10 593px,#bf0d00 593px,#bf0d00 597px)"></i>
<i style="top:267px;left:35px;width:599px;background:linear-gradient(90deg,#00bfbb 0px,#01bfb6 151.5px,#12bfb6 164.5px,#2ebfb6 175.5px,#34bfb6 178px,#48fff3 178px,#55fff4 183.5px,#71fff4 188.5px,#a6fff6 201.5px,#d1fff9 215.5px,#edfffc 229.5px,#fbfffe 244.5px,#fffefe 276.5px,#fff6f3 291.5px,#ffded6 307.5px,#ff9a8d 339.5px,#ff7d6f 359.5px,#ff6053 392.5px,#ff392d 462.5px,#ff1000 568.5px,#ff0f00 594px,#bf0b00 594px,#bf0b00 599px)"></i>
<i style="top:268px;left:36px;width:600px;background:linear-gradient(90deg,#00bfbc 0px,#02bfb7 150.5px,#13bfb7 163.5px,#2fbfb8 174.5px,#32bfb8 176px,#47fff5 176px,#53fff5 181.5px,#78fff6 188.5px,#aefff8 202.5px,#d7fffb 216.5px,#f0fffd 230.5px,#fdfffe 246.5px,#fffdfc 279.5px,#fff1ed 294.5px,#ffd3cb 311.5px,#ff998e 338.5px,#ff7b70 358.5px,#ff5e54 391.5px,#ff372e 461.5px,#ff0e00 570.5px,#ff0d00 589px,#bf0a00 589px,#bf0900 600px)"></i>
<i style="top:269px;left:36px;width:602px;background:linear-gradient(90deg,#00bfbc 0px,#01bfb9 149.5px,#12bfb9 162.5px,#2dbfb9 173.5px,#34bfb9 176px,#48fff7 176px,#55fff7 181.5px,#75fff8 187.5px,#a9fff9 200.5px,#d3fffb 214.5px,#eefffd 228.5px,#fcfffe 244.5px,#fffdfc 279.5px,#fff1ee 294.5px,#ffd2cc 311.5px,#ff978f 338.5px,#ff7971 358.5px,#ff5d55 391.5px,#ff362f 462.5px,#ff0b00 572.5px,#ff0b00 586px,#bf0800 586px,#bf0800 602px)"></i>
<i style="top:270px;left:36px;width:604px;background:linear-gradient(90deg,#00bfbd 0px,#02bfba 149.5px,#13bfba 162.5px,#2fbfbb 173.5px,#32bfbb 175px,#46fff9 175px,#52fff9 180.5px,#77fffa 187.5px,#aefffb 201.5px,#d6fffc 215.5px,#f0fffe 229.5px,#fdffff 245.5px,#fffdfc 279.5px,#fff0ee 294.5px,#ffd1cc 311.5px,#ff968f 338.5px,#ff7871 358.5px,#ff5b55 391.5px,#ff342f 463.5px,#ff0900 575.5px,#ff0800 582px,#bf0600 582px,#bf0600 604px)"></i>
<i style="top:271px;left:37px;width:605px;background:linear-gradient(90deg,#00bfbe 0px,#01bfbc 147.5px,#12bfbc 160.5px,#2dbfbc 171.5px,#33bfbc 174px,#47fffb 174px,#55fffb 179.5px,#79fffb 186.5px,#affffc 200.5px,#d7fffd 214.5px,#f0fffe 228.5px,#fdffff 244.5px,#fffdfc 279.5px,#ffeeed 294.5px,#ffcbc8 312.5px,#ff928e 338.5px,#ff7470 359.5px,#ff5653 395.5px,#ff2f2c 471.5px,#ff0600 577px,#bf0400 577px,#bf0400 605px)"></i>
<i style="top:272px;left:37px;width:607px;background:linear-gradient(90deg,#00bfbe 0px,#02bfbd 147.5px,#12bfbd 160.5px,#2ebfbe 171.5px,#31bfbe 173px,#46fffd 173px,#51fffd 178.5px,#72fffd 184.5px,#a6fffd 197.5px,#d0fffe 211.5px,#ecfffe 225.5px,#fcffff 241.5px,#fffefe 275.5px,#fff3f3 290.5px,#ffd7d6 306.5px,#ff9291 337.5px,#ff7372 358.5px,#ff5755 392.5px,#ff2f2e 467.5px,#ff0402 573px,#bf0201 573px,#bf0200 607px)"></i>
<i style="top:273px;left:37px;width:609px;background:linear-gradient(90deg,#00bfbf 0px,#01bfbf 146.5px,#12bfbf 159.5px,#2cbfbf 170.5px,#33bfbf 173px,#46ffff 173px,#4fffff 177.5px,#79ffff 185.5px,#afffff 199.5px,#d6ffff 213.5px,#efffff 227.5px,#fdffff 243.5px,#fffcfc 279.5px,#ffeded 294.5px,#ffc8c9 312.5px,#ff8f8f 338.5px,#ff7171 359.5px,#ff5454 395.5px,#ff2b2c 473.5px,#ff0305 570px,#bf0204 570px,#bf0002 609px)"></i>
<i style="top:274px;left:38px;width:610px;background:linear-gradient(90deg,#00bfbf 0px,#02bebf 145.5px,#12bebf 158.5px,#2ebebf 169.5px,#31bebf 171px,#45fdff 171px,#50fdff 176.5px,#6dfdff 181.5px,#a2feff 194.5px,#cffeff 209.5px,#edfeff 224.5px,#fbffff 240.5px,#fffefe 274.5px,#fff2f3 289.5px,#ffd5d7 305.5px,#ff8f92 336.5px,#ff7174 356.5px,#ff5558 389.5px,#ff2e31 463.5px,#ff0408 565px,#bf0206 565px,#bf0004 593.5px,#bf0004 610px)"></i>
<i style="top:275px;left:38px;width:612px;background:linear-gradient(90deg,#00bebf 0px,#01bcbf 144.5px,#13bcbf 158.5px,#2fbcbf 169.5px,#32bcbf 171px,#46fbff 171px,#4efbff 175.5px,#78fbff 183.5px,#adfcff 197.5px,#d6fdff 212.5px,#f0feff 227.5px,#fdffff 244.5px,#fffcfd 277.5px,#ffedef 292.5px,#ffc8cb 310.5px,#ff8d92 336.5px,#ff7075 356.5px,#ff5459 389.5px,#ff2d32 463.5px,#ff040b 561px,#bf0308 561px,#bf0006 585.5px,#bf0006 612px)"></i>
<i style="top:276px;left:39px;width:613px;background:linear-gradient(90deg,#00bdbf 0px,#02bbbf 143.5px,#12bbbf 156.5px,#2dbbbf 167.5px,#30bbbf 169px,#44f9ff 169px,#4ff9ff 174.5px,#6cfaff 179.5px,#a0faff 192.5px,#cdfcff 207.5px,#ebfdff 222.5px,#fafeff 238.5px,#fffeff 268.5px,#fff6f7 284.5px,#ffdee1 299.5px,#ff8c93 335.5px,#ff6e75 355.5px,#ff535a 388.5px,#ff2c32 462.5px,#ff040d 557px,#bf020a 557px,#bf0008 595.5px,#bf0008 613px)"></i>
<i style="top:277px;left:39px;width:615px;background:linear-gradient(90deg,#00bdbf 0px,#01b9bf 142.5px,#13b9bf 156.5px,#2fb9bf 167.5px,#32b9bf 169px,#45f7ff 169px,#4df7ff 173.5px,#72f8ff 180.5px,#a8f9ff 194.5px,#d2fbff 209.5px,#edfdff 224.5px,#fcfeff 241.5px,#fffdfd 274.5px,#ffeef1 289.5px,#ffcdd2 306.5px,#ff8c95 334.5px,#ff6e77 354.5px,#ff525c 386.5px,#ff2c35 458.5px,#ff0410 553px,#bf020b 553px,#bf000a 576.5px,#bf0009 615px)"></i>
<i style="top:278px;left:39px;width:617px;background:linear-gradient(90deg,#00bcbf 0px,#02b8bf 142.5px,#14b7bf 156.5px,#30b8bf 168px,#43f5ff 168px,#4ff5ff 173.5px,#6ff6ff 179.5px,#a5f8ff 193.5px,#d0faff 208.5px,#ecfcff 223.5px,#fbfeff 240.5px,#fffdfd 273.5px,#ffeff2 288.5px,#ffd0d7 304.5px,#ff8c97 333.5px,#ff6d79 353.5px,#ff525e 384.5px,#ff2d37 454.5px,#ff0412 549px,#bf030d 549px,#bf000c 570.5px,#bf000b 617px)"></i>
<i style="top:279px;left:40px;width:617px;background:linear-gradient(90deg,#00bbbf 0px,#01b6bf 140.5px,#13b6bf 154.5px,#2eb6bf 165.5px,#31b6bf 167px,#44f3ff 167px,#4cf3ff 171.5px,#71f4ff 178.5px,#a6f6ff 192.5px,#d0f9ff 207.5px,#ebfbff 222.5px,#fafdff 239.5px,#fffdfe 269.5px,#fff2f5 284.5px,#ffd8df 299.5px,#ff8a98 332.5px,#ff6c79 352.5px,#ff515e 383.5px,#ff2b38 453.5px,#ff0414 545px,#bf020f 545px,#bf000d 573.5px,#bf000c 617px)"></i>
<i style="top:280px;left:40px;width:619px;background:linear-gradient(90deg,#00babf 0px,#02b5bf 140.5px,#14b4bf 154.5px,#2fb5bf 166px,#43f1ff 166px,#4ff1ff 171.5px,#73f2ff 178.5px,#a7f5ff 192.5px,#d0f8ff 207.5px,#ebfaff 222.5px,#fafdff 239.5px,#fffefe 267.5px,#fff3f6 283.5px,#ffd8e0 298.5px,#ff8998 332.5px,#ff6a7a 352.5px,#ff4f5f 383.5px,#ff2a39 453.5px,#ff0416 541px,#bf0310 541px,#bf000f 560.5px,#bf000d 619px)"></i>
<i style="top:281px;left:40px;width:621px;background:linear-gradient(90deg,#00babf 0px,#01b3bf 139.5px,#13b3bf 153.5px,#2eb3bf 164.5px,#31b4bf 166px,#43efff 166px,#4befff 170.5px,#6bf0ff 176.5px,#a1f3ff 190.5px,#ccf6ff 205.5px,#e8f9ff 220.5px,#f8fcff 237.5px,#fffeff 263.5px,#fff5f9 280.5px,#ffdde6 295.5px,#ff8798 332.5px,#ff687b 352.5px,#ff4d5f 384.5px,#ff2838 455.5px,#ff0418 537px,#bf0312 537px,#bf0010 556.5px,#bf000e 621px)"></i>
<i style="top:282px;left:41px;width:622px;background:linear-gradient(90deg,#00b9bf 0px,#02b2bf 138.5px,#14b1bf 152.5px,#2fb2bf 164px,#42eeff 164px,#4aedff 168.5px,#75efff 177.5px,#abf2ff 192.5px,#d4f6ff 208.5px,#eefaff 224.5px,#fcfcff 244.5px,#fffdfe 267.5px,#fff0f6 282.5px,#ffd5e0 297.5px,#ff879b 330.5px,#ff697e 349.5px,#ff4e62 379.5px,#ff2a3c 447.5px,#ff041a 533px,#bf0213 533px,#bf0012 555.5px,#bf000f 622px)"></i>
<i style="top:283px;left:41px;width:624px;background:linear-gradient(90deg,#00b8bf 0px,#01b0bf 137.5px,#13b0bf 151.5px,#2db1bf 162.5px,#30b1bf 164px,#42ecff 164px,#4aecff 168.5px,#66ecff 173.5px,#9cf0ff 187.5px,#c9f4ff 203.5px,#e7f8ff 219.5px,#f8fbff 237.5px,#fffeff 261.5px,#fff4f9 278.5px,#ffdce7 293.5px,#ff859b 330.5px,#ff677e 349.5px,#ff4d63 379.5px,#ff293d 447.5px,#ff041d 529px,#bf0315 529px,#bf0013 550.5px,#bf0011 624px)"></i>
<i style="top:284px;left:42px;width:625px;background:linear-gradient(90deg,#00b8bf 0px,#02afbf 136.5px,#13aebf 150.5px,#2eafbf 162px,#41eaff 162px,#49eaff 166.5px,#70ebff 174.5px,#a6efff 189.5px,#d0f3ff 205.5px,#ebf7ff 221.5px,#fafbff 241.5px,#fffdfe 263.5px,#fff1f7 279.5px,#ffd6e3 294.5px,#ff859d 328.5px,#ff6780 347.5px,#ff4d65 376.5px,#ff293f 442.5px,#ff041f 524px,#bf0317 524px,#bf0015 541.5px,#bf0012 625px)"></i>
<i style="top:285px;left:42px;width:628px;background:linear-gradient(90deg,#00b7bf 0px,#01adbf 135.5px,#12adbf 149.5px,#2faebf 162px,#42e8ff 162px,#4ae8ff 166.5px,#65e9ff 171.5px,#9aecff 185.5px,#c7f1ff 201.5px,#e5f6ff 217.5px,#f7f9ff 236.5px,#fffdff 258.5px,#fff4f9 275.5px,#ffdde9 290.5px,#ffa0b7 315.5px,#ff7893 334.5px,#ff5c77 355.5px,#ff4059 395.5px,#ff1932 475.5px,#ff0420 521px,#bf0318 521px,#bf0016 540.5px,#bf0013 628px)"></i>
<i style="top:286px;left:42px;width:630px;background:linear-gradient(90deg,#00b6bf 0px,#02acbf 135.5px,#13abbf 149.5px,#2eacbf 161px,#40e6ff 161px,#48e6ff 165.5px,#6be7ff 172.5px,#a1ebff 187.5px,#cbf0ff 203.5px,#e7f5ff 219.5px,#f9f9ff 240.5px,#fffcff 261.5px,#fff1f8 277.5px,#ffd7e5 292.5px,#ff819d 328.5px,#ff6381 347.5px,#ff4a66 376.5px,#ff2640 443.5px,#ff0423 517px,#bf031a 517px,#bf0018 535.5px,#bf0013 630px)"></i>
<i style="top:287px;left:43px;width:631px;background:linear-gradient(90deg,#00b5bf 0px,#02aabf 134.5px,#14aabf 148.5px,#2fabbf 160px,#41e4ff 160px,#4ae4ff 164.5px,#68e5ff 170.5px,#9eeaff 185.5px,#c9efff 201.5px,#e5f4ff 217.5px,#f8f9ff 238.5px,#fffcff 259.5px,#fff0f8 275.5px,#ffd7e6 290.5px,#ff819f 326.5px,#ff6383 345.5px,#ff4968 374.5px,#ff2542 440.5px,#ff0525 512px,#bf031b 512px,#bf0019 527.5px,#bf0014 631px)"></i>
<i style="top:288px;left:43px;width:634px;background:linear-gradient(90deg,#00b5bf 0px,#00a9bf 129.5px,#0ba8bf 142.5px,#22a9bf 154.5px,#2da9bf 159px,#3fe2ff 159px,#47e2ff 163.5px,#69e4ff 170.5px,#9fe8ff 185.5px,#c9eeff 201.5px,#e6f3ff 218.5px,#faf9ff 241.5px,#fffafe 260.5px,#ffeef7 276.5px,#ffd1e3 292.5px,#ff81a1 325.5px,#ff6284 344.5px,#ff496a 372.5px,#ff2644 436.5px,#ff0427 509px,#bf031d 509px,#bf001b 525.5px,#bf0015 634px)"></i>
<i style="top:289px;left:44px;width:635px;background:linear-gradient(90deg,#00b4bf 0px,#00a8bf 126.5px,#07a7bf 137.5px,#1ca7bf 150.5px,#2ea8bf 158px,#40e0ff 158px,#49e0ff 162.5px,#6be2ff 169.5px,#9fe7ff 184.5px,#cbedff 201.5px,#e7f2ff 218.5px,#fbf9ff 243.5px,#fff9fe 261.5px,#ffe9f5 277.5px,#ffcadf 293.5px,#ff7fa1 324.5px,#ff6085 343.5px,#ff476a 371.5px,#ff2545 435.5px,#ff0429 504px,#bf031e 504px,#bf001c 520.5px,#bf0016 635px)"></i>
<i style="top:290px;left:44px;width:637px;background:linear-gradient(90deg,#00b3bf 0px,#00a7bf 124.5px,#04a6bf 134.5px,#19a5bf 148.5px,#2ca7bf 157px,#3edeff 157px,#46deff 161.5px,#64e0ff 167.5px,#9ae5ff 182.5px,#c7ebff 199.5px,#e4f1ff 216.5px,#faf8ff 240.5px,#fff9ff 258.5px,#ffecf7 274.5px,#ffcee3 290.5px,#ff7da1 324.5px,#ff5f85 343.5px,#ff456a 372.5px,#ff2245 437.5px,#ff052b 500px,#bf0320 500px,#bf001e 514.5px,#bf0017 637px)"></i>
<i style="top:291px;left:45px;width:637px;background:linear-gradient(90deg,#00b2bf 0px,#00a6bf 121.5px,#03a4bf 131.5px,#16a4bf 145.5px,#2ea5bf 156px,#3fdcff 156px,#49dcff 160.5px,#6adeff 167.5px,#9de4ff 182.5px,#c9eaff 199.5px,#e5f0ff 216.5px,#fbf8ff 241.5px,#fff7fe 258.5px,#ffe8f6 274.5px,#ffcae1 290.5px,#ff7da3 322.5px,#ff5e87 341.5px,#ff456c 369.5px,#ff2247 433.5px,#ff042d 496px,#bf0321 496px,#bf001f 513.5px,#bf0018 637px)"></i>
<i style="top:292px;left:45px;width:639px;background:linear-gradient(90deg,#00b2bf 0px,#00a5bf 119.5px,#03a3bf 131.5px,#16a3bf 145.5px,#2ca4bf 155px,#3edbff 155px,#45daff 159.5px,#5fdcff 164.5px,#92e1ff 178.5px,#c0e7ff 195.5px,#dfedff 212.5px,#f7f5ff 236.5px,#fff8ff 255.5px,#ffebf8 271.5px,#ffcee5 287.5px,#ff7ba3 322.5px,#ff5c87 341.5px,#ff436d 369.5px,#ff2147 433.5px,#ff052f 492px,#bf0323 492px,#bf0021 507.5px,#bf0019 639px)"></i>
<i style="top:293px;left:46px;width:640px;background:linear-gradient(90deg,#00b1bf 0px,#00a4bf 116.5px,#03a2bf 129.5px,#15a1bf 143.5px,#2da3bf 154px,#3ed9ff 154px,#43d9ff 157.5px,#68dbff 165.5px,#9ee1ff 181.5px,#c8e8ff 198.5px,#e5eeff 216.5px,#fbf6ff 241.5px,#fff4fe 258.5px,#ffe4f5 273.5px,#ffc2de 290.5px,#ff7aa5 320.5px,#ff5c89 339.5px,#ff426e 367.5px,#ff2049 430.5px,#ff0531 487px,#bf0324 487px,#bf0022 500.5px,#bf0019 640px)"></i>
<i style="top:294px;left:46px;width:641px;background:linear-gradient(90deg,#00b0bf 0px,#00a3bf 115.5px,#02a0bf 128.5px,#14a0bf 142.5px,#2ba1bf 153px,#3dd7ff 153px,#44d7ff 157.5px,#5ed8ff 162.5px,#93deff 177.5px,#c0e5ff 194.5px,#dfebff 212.5px,#f8f4ff 237.5px,#fff5ff 255.5px,#ffe5f6 271.5px,#ffc4e1 288.5px,#ff78a5 320.5px,#ff5a89 339.5px,#ff416f 367.5px,#ff1e49 431.5px,#ff0433 484px,#bf0326 484px,#bf0023 500.5px,#bf001a 641px)"></i>
<i style="top:295px;left:47px;width:642px;background:linear-gradient(90deg,#00afbf 0px,#00a2bf 112.5px,#029fbf 126.5px,#159ebf 141.5px,#2ca0bf 152px,#3dd5ff 152px,#42d5ff 155.5px,#67d7ff 163.5px,#9cddff 179.5px,#c6e5ff 196.5px,#e4ecff 215.5px,#faf4ff 239.5px,#fff2fe 256.5px,#ffe1f5 271.5px,#ffbddd 289.5px,#ff78a7 318.5px,#ff598b 337.5px,#ff4070 365.5px,#ff1e4b 428.5px,#ff0535 479px,#bf0327 479px,#bf0025 493.5px,#bf001b 642px)"></i>
<i style="top:296px;left:47px;width:644px;background:linear-gradient(90deg,#00aebf 0px,#00a1bf 111.5px,#029ebf 126.5px,#149dbf 140.5px,#2b9ebf 151px,#3cd3ff 151px,#44d3ff 155.5px,#61d5ff 161.5px,#94dbff 176.5px,#c1e2ff 194.5px,#e1eaff 213.5px,#f9f3ff 238.5px,#fff1ff 255.5px,#ffdff4 271.5px,#ffb8da 290.5px,#ff75a7 318.5px,#ff578b 337.5px,#ff3e71 365.5px,#ff1c4b 428.5px,#ff0537 475px,#bf0329 475px,#bf0027 487.5px,#bf001c 644px)"></i>
<i style="top:297px;left:48px;width:645px;background:linear-gradient(90deg,#00aebf 0px,#00a0bf 109.5px,#029cbf 124.5px,#159bbf 139.5px,#2c9dbf 150px,#3cd1ff 150px,#41d1ff 153.5px,#62d3ff 160.5px,#97daff 176.5px,#c3e1ff 194.5px,#e2e9ff 213.5px,#f8f2ff 237.5px,#ffefff 254.5px,#ffdcf4 270.5px,#ffb5da 289.5px,#ff73a7 317.5px,#ff548a 337.5px,#ff3b6f 367.5px,#ff1849 433.5px,#ff0539 471px,#bf032a 471px,#bf0028 486.5px,#bf001c 645px)"></i>
<i style="top:298px;left:48px;width:648px;background:linear-gradient(90deg,#00adbf 0px,#009fbf 107.5px,#029bbf 124.5px,#169abf 139.5px,#2a9cbf 149px,#3bd0ff 149px,#43cfff 153.5px,#63d2ff 160.5px,#98d8ff 176.5px,#c3e0ff 194.5px,#e3e8ff 214.5px,#f8f1ff 237.5px,#ffedff 254.5px,#ffdaf3 270.5px,#ffafd7 290.5px,#ff71a7 317.5px,#ff528b 337.5px,#ff396f 368.5px,#ff1549 435.5px,#ff053b 467px,#bf032c 467px,#bf002a 480.5px,#bf001d 648px)"></i>
<i style="top:299px;left:49px;width:649px;background:linear-gradient(90deg,#00acbf 0px,#009ebf 105.5px,#029abf 122.5px,#1599bf 137.5px,#2b9abf 148px,#3bceff 148px,#40cdff 151.5px,#5dcfff 157.5px,#90d5ff 172.5px,#bdddff 190.5px,#dee5ff 210.5px,#f6efff 234.5px,#feecff 251.5px,#ffdaf5 267.5px,#ffb3dc 286.5px,#ff70a9 315.5px,#ff528c 335.5px,#ff3871 365.5px,#ff164b 430.5px,#ff053d 462px,#bf032e 462px,#bf002b 474.5px,#bf001e 649px)"></i>
<i style="top:300px;left:49px;width:651px;background:linear-gradient(90deg,#00abbf 0px,#009dbf 104.5px,#0298bf 122.5px,#1697bf 137.5px,#2a99bf 147px,#3accff 147px,#43ccff 151.5px,#62ceff 158.5px,#96d5ff 174.5px,#c1ddff 192.5px,#e1e5ff 212.5px,#f7eeff 235.5px,#ffeaff 252.5px,#ffd6f3 268.5px,#ffa9d6 289.5px,#ff6ea8 315.5px,#ff508d 335.5px,#ff3671 366.5px,#ff134b 432.5px,#ff0640 458px,#bf042f 458px,#bf002d 471.5px,#bf001e 651px)"></i>
<i style="top:301px;left:50px;width:652px;background:linear-gradient(90deg,#00aabf 0px,#009cbf 102.5px,#0297bf 120.5px,#1496bf 135.5px,#2b98bf 146px,#3acaff 146px,#3fcaff 149.5px,#58cbff 154.5px,#8bd1ff 169.5px,#b8daff 187.5px,#dbe2ff 207.5px,#f4ebff 231.5px,#fdeaff 247.5px,#ffdef9 260.5px,#ffbfe7 277.5px,#ff6daa 313.5px,#ff4f8e 333.5px,#ff3673 363.5px,#ff134d 428.5px,#ff0541 454px,#bf0331 454px,#bf002e 466.5px,#bf001f 652px)"></i>
<i style="top:302px;left:50px;width:654px;background:linear-gradient(90deg,#00aabf 0px,#009bbf 101.5px,#0296bf 120.5px,#1595bf 135.5px,#2996bf 145px,#39c8ff 145px,#3ec8ff 148.5px,#61cbff 156.5px,#94d1ff 172.5px,#c0daff 191.5px,#e1e3ff 212.5px,#f6ebff 235.5px,#ffe4ff 252.5px,#ffcdf0 269.5px,#ff97cc 293.5px,#ff65a5 316.5px,#ff498a 337.5px,#ff2e6c 373.5px,#ff0846 445.5px,#ff0544 450px,#bf0433 450px,#bf0030 463.5px,#bf0020 654px)"></i>
<i style="top:303px;left:51px;width:649px;background:linear-gradient(90deg,#00a9bf 0px,#009abf 99.5px,#0294bf 118.5px,#1493bf 133.5px,#2a95bf 144px,#3ac7ff 144px,#3ec6ff 147.5px,#57c8ff 152.5px,#89ceff 167.5px,#b8d7ff 186.5px,#dce0ff 207.5px,#f4e9ff 231.5px,#fde5ff 247.5px,#ffd8f9 259.5px,#ffb9e6 276.5px,#ff6cad 310.5px,#ff4d91 330.5px,#ff3475 360.5px,#ff114f 424.5px,#ff0646 445px,#bf0434 445px,#bf0031 457.5px,#bf0021 640.5px,#bf0021 649px)"></i>
<i style="top:304px;left:51px;width:644px;background:linear-gradient(90deg,#00a8bf 0px,#0099bf 98.5px,#0293bf 118.5px,#1592bf 133.5px,#2893bf 143px,#38c5ff 143px,#3dc4ff 146.5px,#60c7ff 154.5px,#95ceff 171.5px,#c0d7ff 190.5px,#e1e0ff 212.5px,#f6e7ff 234.5px,#ffdfff 251.5px,#ffc4ee 269.5px,#ff85c3 297.5px,#ff5ca1 318.5px,#ff4187 340.5px,#ff2465 385.5px,#ff0548 442px,#bf0336 442px,#bf0033 453.5px,#bf0022 629.5px,#bf0022 644px)"></i>
<i style="top:305px;left:52px;width:639px;background:linear-gradient(90deg,#00a7bf 0px,#0097bf 96.5px,#0292bf 116.5px,#1490bf 131.5px,#2992bf 142px,#39c3ff 142px,#3ec3ff 145.5px,#5ac5ff 151.5px,#8dcbff 167.5px,#bad4ff 186.5px,#ddf 208.5px,#f4e5ff 231.5px,#fddfff 247.5px,#ffcdf5 261.5px,#ffa4db 281.5px,#ff67ad 309.5px,#ff4891 330.5px,#ff2f74 362.5px,#ff0a4e 429.5px,#ff064a 437px,#bf0437 437px,#bf0034 450.5px,#bf0023 623.5px,#bf0022 639px)"></i>
<i style="top:306px;left:52px;width:635px;background:linear-gradient(90deg,#00a7bf 0px,#0096bf 95.5px,#0290bf 116.5px,#158fbf 131.5px,#2891bf 141px,#38c1ff 141px,#3cc1ff 144.5px,#5bc3ff 151.5px,#8dcaff 167.5px,#bad3ff 186.5px,#dddcff 208.5px,#f3e3ff 231.5px,#fddcff 247.5px,#ffcdf7 259.5px,#ffa8e0 278.5px,#ff66af 308.5px,#ff4792 329.5px,#ff2e76 361.5px,#ff094f 427.5px,#ff064d 433px,#bf0439 433px,#bf0036 445.5px,#bf0025 611.5px,#bf0023 635px)"></i>
<i style="top:307px;left:53px;width:630px;background:linear-gradient(90deg,#00a6bf 0px,#0096bf 93.5px,#028fbf 114.5px,#148ebf 129.5px,#2990bf 140px,#38bfff 140px,#3ebfff 143.5px,#5cc1ff 150.5px,#90c9ff 167.5px,#bdd2ff 187.5px,#e0dcff 210.5px,#f5e1ff 233.5px,#ffd5fe 250.5px,#ffb6ea 269.5px,#ff65b0 306.5px,#ff4694 327.5px,#ff2c77 359.5px,#ff0850 425.5px,#ff064f 429px,#bf043b 429px,#bf0038 440.5px,#bf0026 600.5px,#bf0024 630px)"></i>
<i style="top:308px;left:53px;width:625px;background:linear-gradient(90deg,#00a5bf 0px,#0095bf 92.5px,#028ebf 114.5px,#148dbf 129.5px,#278ebf 139px,#37beff 139px,#3bbdff 142.5px,#56bfff 148.5px,#89c6ff 164.5px,#b7cfff 184.5px,#dcd9ff 207.5px,#f2dfff 230.5px,#fdd5ff 247.5px,#ffbaef 265.5px,#ff6cb8 301.5px,#ff4a9a 322.5px,#ff317e 350.5px,#ff0f59 409.5px,#ff0651 425px,#bf043d 425px,#bf0039 437.5px,#bf0028 593.5px,#bf0025 625px)"></i>
<i style="top:309px;left:54px;width:620px;background:linear-gradient(90deg,#00a4bf 0px,#0093bf 91.5px,#028dbf 112.5px,#158bbf 128.5px,#288dbf 138px,#37bcff 138px,#3dbbff 141.5px,#5fbeff 149.5px,#94c6ff 167.5px,#bfcfff 187.5px,#e2d9ff 211.5px,#f4dcff 232.5px,#ffcdfd 250.5px,#ffaae7 270.5px,#ff62b1 304.5px,#ff4395 325.5px,#ff2978 358.5px,#ff0654 420px,#bf043e 420px,#bf003b 431.5px,#bf0029 581.5px,#bf0026 620px)"></i>
<i style="top:310px;left:54px;width:616px;background:linear-gradient(90deg,#00a3bf 0px,#0092bf 90.5px,#028bbf 112.5px,#168abf 128.5px,#268bbf 137px,#36baff 137px,#3ab9ff 140.5px,#55bcff 146.5px,#87c2ff 162.5px,#b5ccff 182.5px,#dad5ff 205.5px,#f1daff 229.5px,#fdcfff 246.5px,#ffbcf4 259.5px,#ff7fcb 288.5px,#ff53a7 311.5px,#ff398c 334.5px,#ff1b6a 380.5px,#ff0656 417px,#bf0440 417px,#bf003d 429.5px,#bf002a 576.5px,#bf0027 616px)"></i>
<i style="top:311px;left:55px;width:610px;background:linear-gradient(90deg,#00a2bf 0px,#0091bf 89.5px,#028abf 110.5px,#1589bf 126.5px,#278abf 136px,#36b8ff 136px,#3db8ff 139.5px,#5dbbff 147.5px,#92c3ff 165.5px,#beccff 186.5px,#e1d6ff 210.5px,#f2d7ff 230.5px,#ffc8fe 248.5px,#ffa3e6 269.5px,#ff5eb3 302.5px,#ff3f96 324.5px,#ff2477 359.5px,#ff0658 412px,#bf0442 412px,#bf003f 423.5px,#bf002c 564.5px,#bf0028 610px)"></i>
<i style="top:312px;left:55px;width:606px;background:linear-gradient(90deg,#00a2bf 0px,#0090bf 88.5px,#0289bf 110.5px,#1687bf 126.5px,#2689bf 135px,#35b6ff 135px,#39b6ff 138.5px,#50b8ff 143.5px,#82beff 159.5px,#b1c7ff 179.5px,#d6d1ff 202.5px,#efd6ff 226.5px,#facbff 242.5px,#ffc1fc 250.5px,#ff99e1 272.5px,#ff5bb3 302.5px,#ff3d96 324.5px,#f27 360.5px,#ff065b 408px,#bf0444 408px,#bf0040 419.5px,#bf002d 556.5px,#bf0029 606px)"></i>
<i style="top:313px;left:56px;width:601px;background:linear-gradient(90deg,#00a1bf 0px,#008fbf 86.5px,#0288bf 108.5px,#1586bf 124.5px,#2788bf 134px,#35b5ff 134px,#38b4ff 136.5px,#59b7ff 144.5px,#8dbfff 162.5px,#bac8ff 183.5px,#ddd1ff 207.5px,#efd3ff 227.5px,#fdc3ff 245.5px,#ff9de6 267.5px,#ff5ab4 300.5px,#ff3c98 322.5px,#ff2178 358.5px,#ff065d 404px,#bf0445 404px,#bf0042 416.5px,#bf002f 550.5px,#bf002a 601px)"></i>
<i style="top:314px;left:56px;width:597px;background:linear-gradient(90deg,#00a0bf 0px,#008ebf 85.5px,#0286bf 108.5px,#1585bf 124.5px,#2586bf 133px,#34b3ff 133px,#39b2ff 136.5px,#56b5ff 143.5px,#88bcff 160.5px,#b6c5ff 181.5px,#dacfff 205.5px,#eed0ff 226.5px,#fbc2ff 243.5px,#ffb8fb 250.5px,#ff8bdc 274.5px,#ff56b3 301.5px,#ff3896 324.5px,#ff1b74 365.5px,#ff0660 400px,#bf0447 400px,#bf0044 411.5px,#bf0030 540.5px,#bf002b 597px)"></i>
<i style="top:315px;left:57px;width:591px;background:linear-gradient(90deg,#009fbf 0px,#008dbf 84.5px,#0285bf 106.5px,#1483bf 122.5px,#2685bf 132px,#34b1ff 132px,#37b1ff 134.5px,#54b3ff 141.5px,#86baff 158.5px,#b4c3ff 179.5px,#d9cdff 203.5px,#edceff 224.5px,#fac0ff 241.5px,#ffb6fd 248.5px,#ff85da 274.5px,#ff53b3 300.5px,#ff3696 323.5px,#ff1874 365.5px,#ff0762 395px,#bf0449 395px,#bf0046 405.5px,#bf0032 529.5px,#bf002c 591px)"></i>
<i style="top:316px;left:57px;width:587px;background:linear-gradient(90deg,#009ebf 0px,#008cbf 83.5px,#0284bf 106.5px,#1582bf 122.5px,#2583bf 131px,#33afff 131px,#39afff 134.5px,#55b1ff 141.5px,#89b9ff 159.5px,#b8c3ff 181.5px,#dccbff 206.5px,#eecaff 226.5px,#ffb6ff 246.5px,#ff81da 274.5px,#ff50b3 300.5px,#ff3396 324.5px,#ff1573 368.5px,#ff0665 392px,#bf044b 392px,#bf0047 403.5px,#bf0033 525.5px,#bf002d 587px)"></i>
<i style="top:317px;left:58px;width:582px;background:linear-gradient(90deg,#009dbf 0px,#008bbf 82.5px,#0283bf 104.5px,#1481bf 120.5px,#2582bf 130px,#33aeff 130px,#36adff 132.5px,#53afff 139.5px,#87b7ff 157.5px,#b5c0ff 179.5px,#dac9ff 204.5px,#ecc8ff 224.5px,#fdb4ff 243.5px,#ffa4f5 253.5px,#ff51b5 297.5px,#ff3398 321.5px,#ff1575 364.5px,#ff0767 387px,#bf044d 387px,#bf0049 398.5px,#bf0035 516.5px,#bf002e 582px)"></i>
<i style="top:318px;left:58px;width:577px;background:linear-gradient(90deg,#009cbf 0px,#008abf 81.5px,#0281bf 104.5px,#1580bf 120.5px,#2481bf 129px,#32acff 129px,#38abff 132.5px,#57aeff 140.5px,#8ab6ff 158.5px,#b7bfff 180.5px,#dac7ff 205.5px,#ecc5ff 224.5px,#feafff 244.5px,#ff76d6 275.5px,#ff49b1 300.5px,#ff2d94 325.5px,#ff0e70 372.5px,#ff076a 383px,#bf054f 383px,#bf004b 394.5px,#bf0036 509.5px,#bf002f 577px)"></i>
<i style="top:319px;left:59px;width:572px;background:linear-gradient(90deg,#009bbf 0px,#0089bf 80.5px,#0280bf 102.5px,#157ebf 119.5px,#2580bf 128px,#32aaff 128px,#35a9ff 130.5px,#4eabff 136.5px,#80b2ff 153.5px,#b0bcff 175.5px,#d5c4ff 200.5px,#e9c3ff 220.5px,#f7b3ff 237.5px,#ffa6fd 246.5px,#ff4bb5 296.5px,#ff2e98 321.5px,#ff0f74 366.5px,#ff066d 379px,#bf0451 379px,#bf004d 390.5px,#bf0038 502.5px,#bf0030 572px)"></i>
<i style="top:320px;left:59px;width:568px;background:linear-gradient(90deg,#009bbf 0px,#0088bf 80.5px,#027fbf 102.5px,#167dbf 119.5px,#237ebf 127px,#31a8ff 127px,#38a8ff 130.5px,#56abff 138.5px,#8ab2ff 157.5px,#b8bcff 180.5px,#dac3ff 205.5px,#eabeff 223.5px,#ffa6ff 244.5px,#ff4ab7 295.5px,#ff2c99 320.5px,#ff0d75 365.5px,#ff0770 375px,#bf0553 375px,#bf004f 385.5px,#bf003a 493.5px,#bf0032 568px)"></i>
<i style="top:321px;left:60px;width:563px;background:linear-gradient(90deg,#009abf 0px,#0087bf 78.5px,#027ebf 100.5px,#157cbf 117.5px,#247dbf 126px,#31a6ff 126px,#34a6ff 128.5px,#4aa7ff 133.5px,#7caeff 150.5px,#abb7ff 172.5px,#d2bfff 197.5px,#e6bdff 218.5px,#f5adff 235.5px,#ff9efd 245.5px,#ff48b8 293.5px,#ff2a9a 319.5px,#ff0a75 365.5px,#ff0773 370px,#bf0555 370px,#bf0051 381.5px,#bf003b 486.5px,#bf0033 563px)"></i>
<i style="top:322px;left:60px;width:558px;background:linear-gradient(90deg,#0099bf 0px,#0085bf 78.5px,#027dbf 100.5px,#167abf 117.5px,#237cbf 125px,#30a5ff 125px,#32a4ff 127.5px,#52a7ff 135.5px,#83aeff 153.5px,#b2b7ff 176.5px,#d7beff 202.5px,#e8b8ff 221.5px,#fe9eff 243.5px,#ff46b8 293.5px,#ff289a 319.5px,#ff0876 365.5px,#ff0775 367px,#bf0457 367px,#bf0053 377.5px,#bf003d 479.5px,#bf0034 558px)"></i>
<i style="top:323px;left:61px;width:553px;background:linear-gradient(90deg,#0098bf 0px,#0084bf 77.5px,#027bbf 98.5px,#1579bf 115.5px,#237abf 124px,#30a3ff 124px,#34a2ff 126.5px,#50a5ff 133.5px,#81acff 151.5px,#b0b5ff 174.5px,#d5bbff 200.5px,#e7b6ff 219.5px,#fc9cff 240.5px,#ff92fa 246.5px,#ff44ba 291.5px,#ff269a 318.5px,#ff0778 362px,#bf055a 362px,#bf0055 372.5px,#bf003f 471.5px,#bf0035 553px)"></i>
<i style="top:324px;left:61px;width:549px;background:linear-gradient(90deg,#0097bf 0px,#0083bf 76.5px,#027abf 98.5px,#1578bf 115.5px,#2279bf 123px,#2fa1ff 123px,#31a1ff 125.5px,#4da3ff 132.5px,#7faaff 150.5px,#aeb2ff 173.5px,#d3b9ff 199.5px,#e5b3ff 218.5px,#f99bff 238.5px,#ff90fc 245.5px,#ff43bb 290.5px,#ff259c 317.5px,#ff087b 358px,#bf055c 358px,#bf0057 369.5px,#bf0041 465.5px,#bf0036 549px)"></i>
<i style="top:325px;left:62px;width:543px;background:linear-gradient(90deg,#0096bf 0px,#0082bf 75.5px,#0279bf 96.5px,#1477bf 113.5px,#2378bf 122px,#2f9fff 122px,#339fff 124.5px,#4fa1ff 131.5px,#82a8ff 150.5px,#b0b1ff 173.5px,#d4b6ff 199.5px,#e5afff 218.5px,#ff90ff 242.5px,#ff41bc 288.5px,#ff239d 315.5px,#ff087e 353px,#bf055e 353px,#bf0059 364.5px,#bf0043 457.5px,#bf0037 543px)"></i>
<i style="top:326px;left:62px;width:539px;background:linear-gradient(90deg,#0095bf 0px,#0081bf 74.5px,#0278bf 96.5px,#1575bf 113.5px,#2176bf 121px,#2e9eff 121px,#309dff 123.5px,#4c9fff 130.5px,#7da6ff 148.5px,#acaeff 171.5px,#d1b4ff 197.5px,#e3adff 216.5px,#f794ff 236.5px,#ff8afd 243.5px,#ff3ebd 288.5px,#ff209c 316.5px,#ff0881 350px,#bf0560 350px,#bf005c 360.5px,#bf0044 451.5px,#bf0038 539px)"></i>
<i style="top:327px;left:63px;width:534px;background:linear-gradient(90deg,#0094bf 0px,#0080bf 73.5px,#0277bf 94.5px,#1574bf 112.5px,#2275bf 120px,#2e9cff 120px,#339bff 122.5px,#519eff 130.5px,#82a5ff 149.5px,#b1adff 173.5px,#d4b0ff 200.5px,#e5a6ff 218.5px,#ff85fd 242.5px,#ff3dbe 286.5px,#ff1e9d 315.5px,#ff0884 345px,#bf0563 345px,#bf005e 356.5px,#bf0046 444.5px,#bf0039 534px)"></i>
<i style="top:328px;left:63px;width:530px;background:linear-gradient(90deg,#0093bf 0px,#007fbf 73.5px,#0276bf 94.5px,#1673bf 112.5px,#2174bf 119px,#2d9aff 119px,#2f99ff 121.5px,#489bff 127.5px,#79a2ff 145.5px,#aaf 169.5px,#ceaeff 195.5px,#e1a7ff 214.5px,#f68cff 235.5px,#ff81fe 242.5px,#ff3abe 286.5px,#ff1b9c 316.5px,#ff0888 341px,#bf0665 341px,#bf0060 351.5px,#bf0049 436.5px,#bf003a 530px)"></i>
<i style="top:329px;left:64px;width:524px;background:linear-gradient(90deg,#0092bf 0px,#007ebf 72.5px,#0275bf 92.5px,#1572bf 110.5px,#2173bf 118px,#2d98ff 118px,#3298ff 120.5px,#529bff 129.5px,#85a2ff 149.5px,#b3aaff 174.5px,#d5aaff 201.5px,#e69dff 219.5px,#ff7dfe 241.5px,#ff39bf 284.5px,#ff199e 314.5px,#ff088b 337px,#bf0567 337px,#bf0062 347.5px,#bf004a 430.5px,#bf003c 524px)"></i>
<i style="top:330px;left:64px;width:520px;background:linear-gradient(90deg,#0092bf 0px,#007dbf 71.5px,#0273bf 92.5px,#1670bf 110.5px,#2071bf 117px,#2c97ff 117px,#2f96ff 119.5px,#4497ff 124.5px,#739dff 141.5px,#a4a5ff 165.5px,#caa9ff 192.5px,#dea0ff 212.5px,#f585ff 233.5px,#ff79fe 241.5px,#ff37c1 283.5px,#ff179e 314.5px,#ff088e 333px,#bf066a 333px,#bf0065 343.5px,#bf004d 423.5px,#bf003d 520px)"></i>
<i style="top:331px;left:65px;width:515px;background:linear-gradient(90deg,#0091bf 0px,#007cbf 70.5px,#0272bf 91.5px,#166fbf 109.5px,#2070bf 116px,#2c95ff 116px,#3294ff 118.5px,#5197ff 127.5px,#839eff 147.5px,#b0a5ff 172.5px,#d1a5ff 198.5px,#e297ff 216.5px,#ff75fe 240.5px,#ff34c1 282.5px,#ff139c 315.5px,#ff0992 328px,#bf066d 328px,#bf0067 338.5px,#bf004f 415.5px,#bf003e 515px)"></i>
<i style="top:332px;left:65px;width:510px;background:linear-gradient(90deg,#0090bf 0px,#007abf 70.5px,#0271bf 90.5px,#156ebf 108.5px,#1f6ebf 115px,#2b93ff 115px,#2e92ff 117.5px,#4994ff 124.5px,#7a9bff 143.5px,#aaa2ff 168.5px,#cea2ff 196.5px,#e195ff 215.5px,#ff71fe 240.5px,#ff32c2 281.5px,#ff109d 315.5px,#ff0995 325px,#bf066f 325px,#bf0069 335.5px,#bf0051 411.5px,#bf003f 510px)"></i>
<i style="top:333px;left:66px;width:505px;background:linear-gradient(90deg,#008fbf 0px,#0079bf 69.5px,#0270bf 89.5px,#166dbf 107.5px,#206dbf 114px,#2b91ff 114px,#3191ff 116.5px,#5394ff 126.5px,#859aff 147.5px,#b3a1ff 173.5px,#d19eff 198.5px,#e28eff 216.5px,#ff6cfe 239.5px,#ff31c4 279.5px,#ff0c9b 316.5px,#ff0999 320px,#bf0672 320px,#bf006c 330.5px,#bf0053 403.5px,#bf0040 505px)"></i>
<i style="top:334px;left:67px;width:500px;background:linear-gradient(90deg,#008ebf 0px,#0078bf 68.5px,#026fbf 87.5px,#156bbf 105.5px,#1e6cbf 112px,#2a90ff 112px,#2e8fff 114.5px,#4b91ff 122.5px,#7d97ff 142.5px,#ab9eff 167.5px,#cd9cff 194.5px,#e08dff 213.5px,#ff68fe 238.5px,#ff2ec4 278.5px,#ff0a9d 315px,#bf0775 315px,#bf006f 325.5px,#bf0055 395.5px,#bf0041 500px)"></i>
<i style="top:335px;left:67px;width:495px;background:linear-gradient(90deg,#008dbf 0px,#0077bf 67.5px,#026dbf 87.5px,#176abf 106.5px,#1f6bbf 112px,#2a8eff 112px,#2b8dff 113.5px,#468fff 120.5px,#7695ff 139.5px,#a59bff 164.5px,#ca9aff 192.5px,#dd8bff 211.5px,#fc67ff 236.5px,#ff5cf7 243.5px,#ff26bf 282.5px,#ff0aa0 312px,#bf0677 312px,#bf0071 322.5px,#bf0057 391.5px,#bf0043 495px)"></i>
<i style="top:336px;left:68px;width:490px;background:linear-gradient(90deg,#008cbf 0px,#0076bf 66.5px,#026cbf 85.5px,#1669bf 104.5px,#1e69bf 110px,#298cff 110px,#2d8bff 112.5px,#4a8dff 120.5px,#7b93ff 140.5px,#a9f 166.5px,#ca96ff 192.5px,#dd86ff 211.5px,#ff5ffd 238.5px,#ff28c4 277.5px,#ff0aa4 307px,#bf077a 307px,#bf0074 317.5px,#bf005a 383.5px,#bf0044 490px)"></i>
<i style="top:337px;left:69px;width:485px;background:linear-gradient(90deg,#008bbf 0px,#0075bf 65.5px,#026bbf 84.5px,#1668bf 103.5px,#1e68bf 109px,#298aff 109px,#2a89ff 110.5px,#428bff 116.5px,#7090ff 134.5px,#a096ff 159.5px,#c595ff 187.5px,#da86ff 207.5px,#fa60ff 233.5px,#ff59fc 238.5px,#ff24c3 277.5px,#ff0ba8 302px,#bf077d 302px,#bf0077 312.5px,#bf005c 376.5px,#bf0045 485px)"></i>
<i style="top:338px;left:69px;width:481px;background:linear-gradient(90deg,#008abf 0px,#0073bf 65.5px,#036abf 84.5px,#1766bf 103.5px,#1d67bf 108px,#2889ff 108px,#2d88ff 110.5px,#4b8aff 119.5px,#7d90ff 140.5px,#aa95ff 166.5px,#c990ff 191.5px,#dd7dff 211.5px,#ff57fd 237.5px,#ff23c6 275.5px,#ff0bac 299px,#bf0780 299px,#bf0179 309.5px,#bf005f 371.5px,#bf0047 475.5px,#bf0046 481px)"></i>
<i style="top:339px;left:70px;width:475px;background:linear-gradient(90deg,#0089bf 0px,#0072bf 64.5px,#0269bf 82.5px,#1665bf 101.5px,#1e65bf 107px,#2886ff 107px,#2986ff 108.5px,#4187ff 114.5px,#718cff 133.5px,#a192ff 159.5px,#c48eff 186.5px,#d97eff 206.5px,#fa58ff 232.5px,#ff51fc 237.5px,#ff1ec4 276.5px,#ff0cb0 294px,#bf0883 294px,#bf017c 304.5px,#bf0062 363.5px,#bf004a 462.5px,#bf0048 475px)"></i>
<i style="top:340px;left:70px;width:471px;background:linear-gradient(90deg,#0088bf 0px,#0071bf 63.5px,#0368bf 82.5px,#1664bf 101.5px,#1c64bf 106px,#2785ff 106px,#2c84ff 108.5px,#4a86ff 117.5px,#7b8cff 138.5px,#a990ff 165.5px,#c78aff 189.5px,#db76ff 209.5px,#ff4ffe 236.5px,#ff1cc5 275.5px,#ff0cb5 290px,#bf0987 290px,#bf017f 301.5px,#bf0064 359.5px,#bf004b 456.5px,#bf0049 471px)"></i>
<i style="top:341px;left:71px;width:466px;background:linear-gradient(90deg,#0087bf 0px,#0070bf 63.5px,#0267bf 80.5px,#1563bf 99.5px,#1d63bf 105px,#2783ff 105px,#4b85ff 116.5px,#7d8aff 138.5px,#aa8dff 165.5px,#c786ff 189.5px,#dc71ff 209.5px,#ff4bfe 235.5px,#ff1ac7 273.5px,#ff0cb8 286px,#bf0889 286px,#bf0182 296.5px,#bf0066 352.5px,#bf004e 445.5px,#bf004a 466px)"></i>
<i style="top:342px;left:72px;width:460px;background:linear-gradient(90deg,#0086bf 0px,#006ebf 62.5px,#0365bf 79.5px,#1761bf 99.5px,#1c61bf 103px,#2681ff 103px,#2c81ff 105.5px,#4c83ff 115.5px,#7d88ff 137.5px,#aa8bff 164.5px,#c682ff 188.5px,#dc6bff 209.5px,#ff47fe 234.5px,#ff16c7 272.5px,#ff0dbd 281px,#bf098d 281px,#bf0186 290.5px,#bf006a 343.5px,#bf0051 431.5px,#bf004c 460px)"></i>
<i style="top:343px;left:72px;width:456px;background:linear-gradient(90deg,#0085bf 0px,#006ebf 61.5px,#0265bf 78.5px,#1660bf 98.5px,#1c60bf 103px,#267fff 103px,#4a81ff 114.5px,#7b86ff 136.5px,#a888ff 163.5px,#c47fff 187.5px,#db69ff 208.5px,#ff43fe 234.5px,#ff14c8 271.5px,#ff0ec2 277px,#bf0a91 277px,#bf0188 288.5px,#bf006c 340.5px,#bf0053 426.5px,#bf004d 456px)"></i>
<i style="top:344px;left:73px;width:451px;background:linear-gradient(90deg,#0084bf 0px,#006cbf 60.5px,#0363bf 77.5px,#175fbf 97.5px,#1b5fbf 101px,#257eff 101px,#267dff 102.5px,#407eff 109.5px,#7083ff 129.5px,#9f86ff 156.5px,#bf7fff 182.5px,#d66aff 203.5px,#fb43ff 230.5px,#ff3cfb 235.5px,#ff0ec6 273px,#bf0a94 273px,#bf028c 282.5px,#bf0070 332.5px,#bf0056 414.5px,#bf004e 451px)"></i>
<i style="top:345px;left:74px;width:446px;background:linear-gradient(90deg,#0082bf 0px,#006bbf 60.5px,#0362bf 76.5px,#175dbf 96.5px,#1b5dbf 100px,#257cff 100px,#467dff 110.5px,#7881ff 132.5px,#a583ff 160.5px,#c279ff 184.5px,#da61ff 206.5px,#ff3bfe 232.5px,#ff0fcb 268px,#bf0a97 268px,#bf028f 278.5px,#bf0072 326.5px,#bf0058 405.5px,#bf0050 446px)"></i>
<i style="top:346px;left:74px;width:441px;background:linear-gradient(90deg,#0081bf 0px,#006abf 59.5px,#0261bf 75.5px,#165cbf 95.5px,#1a5cbf 99px,#247aff 99px,#257aff 100.5px,#3c7bff 106.5px,#6a7eff 125.5px,#9a81ff 152.5px,#bb7aff 178.5px,#d365ff 200.5px,#ff36fd 233.5px,#ff10d1 264px,#bf0b9b 264px,#bf0292 274.5px,#bf0075 321.5px,#bf005b 397.5px,#bf0051 441px)"></i>
<i style="top:347px;left:75px;width:436px;background:linear-gradient(90deg,#0080bf 0px,#0069bf 58.5px,#0360bf 74.5px,#165bbf 94.5px,#1b5bbf 98px,#2478ff 98px,#4279ff 107.5px,#727dff 128.5px,#a07eff 156.5px,#bf74ff 181.5px,#d75cff 203.5px,#ff32fd 232.5px,#ff10d5 260px,#bf0b9e 260px,#bf0296 269.5px,#bf0079 314.5px,#bf005e 387.5px,#bf0053 436px)"></i>
<i style="top:348px;left:76px;width:431px;background:linear-gradient(90deg,#007fbf 0px,#0067bf 58.5px,#035fbf 73.5px,#1859bf 94.5px,#1a59bf 96px,#2377ff 96px,#2476ff 97.5px,#3b77ff 103.5px,#687aff 122.5px,#977cff 149.5px,#b874ff 175.5px,#d05eff 197.5px,#f835ff 226.5px,#ff2efd 231.5px,#ff11da 255px,#bf0ca3 255px,#bf0399 265.5px,#bf007b 309.5px,#bf0061 379.5px,#bf0054 431px)"></i>
<i style="top:349px;left:76px;width:426px;background:linear-gradient(90deg,#007ebf 0px,#0066bf 57.5px,#035ebf 72.5px,#1758bf 93.5px,#1a58bf 96px,#2375ff 96px,#4176ff 105.5px,#7079ff 126.5px,#9e79ff 154.5px,#bc6eff 179.5px,#d654ff 202.5px,#ff2bfd 231.5px,#ff12e0 251px,#bf0da7 251px,#bf039d 261.5px,#bf007f 304.5px,#bf0063 372.5px,#bf0056 426px)"></i>
<i style="top:350px;left:77px;width:421px;background:linear-gradient(90deg,#007dbf 0px,#0065bf 56.5px,#035cbf 71.5px,#1757bf 92.5px,#1957bf 94px,#2273ff 94px,#4774ff 106.5px,#7877ff 129.5px,#a475ff 158.5px,#c067ff 182.5px,#df45ff 208.5px,#ff27fe 230.5px,#ff12e5 247px,#bf0caa 247px,#bf03a1 256.5px,#bf0082 298.5px,#bf0066 363.5px,#bf0057 421px)"></i>
<i style="top:351px;left:77px;width:417px;background:linear-gradient(90deg,#007cbf 0px,#0063bf 56.5px,#035bbf 71.5px,#1855bf 92.5px,#1955bf 94px,#2271ff 94px,#3d72ff 102.5px,#6c75ff 123.5px,#9a74ff 151.5px,#b968ff 176.5px,#d44dff 200.5px,#ff23fe 230.5px,#ff13eb 243px,#bf0daf 243px,#bf03a4 253.5px,#bf0085 294.5px,#bf0069 357.5px,#bf0059 417px)"></i>
<i style="top:352px;left:78px;width:412px;background:linear-gradient(90deg,#007bbf 0px,#0062bf 55.5px,#045abf 70.5px,#1854bf 92px,#2170ff 92px,#4370ff 103.5px,#7473ff 126.5px,#a270ff 156.5px,#be60ff 180.5px,#df3cff 208.5px,#ff1ffe 229.5px,#ff14f1 238px,#bf0eb4 238px,#bf03a8 248.5px,#bf0088 288.5px,#bf006c 348.5px,#bf005a 412px)"></i>
<i style="top:353px;left:79px;width:406px;background:linear-gradient(90deg,#007abf 0px,#0061bf 54.5px,#0359bf 68.5px,#1853bf 91px,#216dff 91px,#3a6eff 98.5px,#6770ff 118.5px,#956fff 146.5px,#b563ff 172.5px,#d246ff 197.5px,#ff1bfe 228.5px,#ff15f7 233px,#bf0fb8 233px,#bf04ad 243.5px,#bf008c 282.5px,#bf006f 340.5px,#bf005c 406px)"></i>
<i style="top:354px;left:79px;width:402px;background:linear-gradient(90deg,#0079bf 0px,#0060bf 54.5px,#0358bf 68.5px,#1751bf 90px,#206cff 90px,#406cff 100.5px,#6f6eff 122.5px,#9d6bff 152.5px,#b95cff 176.5px,#d93aff 203.5px,#ff16fe 228.5px,#ff15fc 230px,#bf0ebc 230px,#bf04b0 240.5px,#bf008f 278.5px,#bf0072 334.5px,#bf005d 402px)"></i>
<i style="top:355px;left:80px;width:397px;background:linear-gradient(90deg,#0077bf 0px,#005ebf 53.5px,#0456bf 67.5px,#1850bf 89px,#206aff 89px,#366aff 95.5px,#636cff 115.5px,#936aff 144.5px,#b35dff 170.5px,#d040ff 195.5px,#fb16ff 225px,#bd0fbf 225px,#bf04b5 235.5px,#bf0093 272.5px,#bf0076 326.5px,#bf005f 397px)"></i>
<i style="top:356px;left:81px;width:391px;background:linear-gradient(90deg,#0076bf 0px,#005cbf 53.5px,#0554bf 68.5px,#174fbf 87px,#1f68ff 87px,#3f69ff 97.5px,#6f6aff 120.5px,#9c65ff 150.5px,#b954ff 175.5px,#e02aff 206.5px,#f417ff 220px,#b810bf 220px,#bf05bc 228.5px,#bf019a 263.5px,#bf007c 313.5px,#bf0061 391px)"></i>
<i style="top:357px;left:81px;width:387px;background:linear-gradient(90deg,#0075bf 0px,#005cbf 52.5px,#0553bf 67.5px,#174dbf 87px,#1f66ff 87px,#3566ff 93.5px,#6268ff 113.5px,#9165ff 142.5px,#b157ff 168.5px,#cf38ff 194.5px,#ef17ff 217px,#b410bf 217px,#bf05be 227.5px,#bf019b 262.5px,#bf007d 312.5px,#bf0062 387px)"></i>
<i style="top:358px;left:82px;width:382px;background:linear-gradient(90deg,#0074bf 0px,#005abf 51.5px,#0552bf 66.5px,#164cbf 85px,#1e65ff 85px,#3b65ff 94.5px,#6966ff 116.5px,#9761ff 146.5px,#b54fff 171.5px,#d82aff 200.5px,#e919ff 212px,#b011bf 212px,#bc05bf 222.5px,#bf04bb 228.5px,#bf0099 264.5px,#bf007b 316.5px,#bf0064 382px)"></i>
<i style="top:359px;left:83px;width:377px;background:linear-gradient(90deg,#0073bf 0px,#0058bf 51.5px,#084fbf 69.5px,#164bbf 84px,#1f62ff 84px,#3763ff 91.5px,#6464ff 112.5px,#935fff 142.5px,#b24eff 168.5px,#d42aff 196.5px,#e21aff 207px,#ab13bf 207px,#b805bf 218.5px,#bf03bd 226.5px,#bf009a 262.5px,#bf007c 314.5px,#bf0066 377px)"></i>
<i style="top:360px;left:83px;width:372px;background:linear-gradient(90deg,#0072bf 0px,#0058bf 50.5px,#074fbf 67.5px,#1549bf 83px,#1e61ff 83px,#3761ff 91.5px,#6661ff 113.5px,#955bff 144.5px,#b349ff 169.5px,#d723ff 198.5px,#de1bff 204px,#a713bf 204px,#b306bf 214.5px,#bf03bd 226.5px,#bf009b 262.5px,#bf007c 314.5px,#bf0068 372px)"></i>
<i style="top:361px;left:84px;width:367px;background:linear-gradient(90deg,#0070bf 0px,#0056bf 50.5px,#0b4bbf 71.5px,#1648bf 82px,#1f5fff 82px,#385fff 90.5px,#665fff 112.5px,#9558ff 143.5px,#b345ff 168.5px,#d61eff 197.5px,#d81dff 199px,#a314bf 199px,#ae07bf 209.5px,#bf02bd 225.5px,#bf009b 261.5px,#bf007d 313.5px,#bf0069 367px)"></i>
<i style="top:362px;left:84px;width:363px;background:linear-gradient(90deg,#006fbf 0px,#0055bf 49.5px,#0a4bbf 69.5px,#1547bf 81px,#1d5dff 81px,#345dff 88.5px,#615dff 109.5px,#9157ff 140.5px,#b044ff 166.5px,#d120ff 193.5px,#d21eff 195px,#9f16bf 195px,#ab07bf 206.5px,#bf02bd 225.5px,#bf009b 261.5px,#bf007d 314.5px,#bf006b 363px)"></i>
<i style="top:363px;left:85px;width:357px;background:linear-gradient(90deg,#006ebf 0px,#0054bf 48.5px,#0b49bf 69.5px,#1545bf 80px,#1e5bff 80px,#3a5bff 89.5px,#685bff 112.5px,#9751ff 144.5px,#b43cff 169.5px,#ce1fff 191px,#9b16bf 191px,#a608bf 201.5px,#bf02bd 224.5px,#bf009b 261.5px,#bf007c 315.5px,#bf006d 357px)"></i>
<i style="top:364px;left:86px;width:352px;background:linear-gradient(90deg,#006cbf 0px,#0052bf 48.5px,#0e46bf 71.5px,#1444bf 78px,#1c5aff 78px,#305aff 84.5px,#5b59ff 104.5px,#8c52ff 135.5px,#ac40ff 161.5px,#c820ff 186px,#9717bf 186px,#a309bf 197.5px,#bf01bd 223.5px,#bf009b 260.5px,#bf007d 314.5px,#bf006f 352px)"></i>
<i style="top:365px;left:86px;width:348px;background:linear-gradient(90deg,#006cbf 0px,#0051bf 47.5px,#0d45bf 70.5px,#1442bf 78px,#1e58ff 78px,#3958ff 87.5px,#6656ff 110.5px,#954cff 142.5px,#b334ff 168.5px,#c322ff 182px,#9318bf 182px,#9e0abf 193.5px,#bf01be 223.5px,#bf009c 260.5px,#bf007d 315.5px,#bf0071 348px)"></i>
<i style="top:366px;left:87px;width:343px;background:linear-gradient(90deg,#006abf 0px,#004fbf 47.5px,#1042bf 72.5px,#1341bf 76px,#1b56ff 76px,#2f56ff 82.5px,#5a55ff 102.5px,#8a4dff 133.5px,#aa39ff 159.5px,#bf22ff 178px,#9018bf 178px,#9a0bbf 188.5px,#bd01bf 219.5px,#bf0098 265.5px,#bf007a 323.5px,#bf0073 343px)"></i>
<i style="top:367px;left:88px;width:337px;background:linear-gradient(90deg,#0069bf 0px,#024bbf 51.5px,#1340bf 75px,#1e54ff 75px,#3a54ff 85.5px,#6a51ff 110.5px,#9545ff 141.5px,#b32cff 166.5px,#ba24ff 173px,#8c1abf 173px,#970bbf 184.5px,#bb01bf 216.5px,#bf01bc 223.5px,#bf009a 262.5px,#bf007b 319.5px,#bf0075 337px)"></i>
<i style="top:368px;left:89px;width:332px;background:linear-gradient(90deg,#0067bf 0px,#024abf 49.5px,#133ebf 73px,#1b52ff 73px,#3152ff 80.5px,#5e50ff 102.5px,#8f45ff 135.5px,#ac2eff 160.5px,#b525ff 168px,#881bbf 168px,#930cbf 179.5px,#b601bf 211.5px,#bf01bd 221.5px,#bf009b 260.5px,#bf007c 317.5px,#bf0077 332px)"></i>
<i style="top:369px;left:89px;width:328px;background:linear-gradient(90deg,#0066bf 0px,#0249bf 49.5px,#133dbf 73px,#1d51ff 73px,#3950ff 83.5px,#684dff 108.5px,#933fff 139.5px,#b026ff 163.5px,#b125ff 165px,#861abf 165px,#900dbf 176.5px,#b401bf 209.5px,#bf01bd 221.5px,#bf009b 260.5px,#bf007d 317.5px,#bf0079 328px)"></i>
<i style="top:370px;left:90px;width:322px;background:linear-gradient(90deg,#0065bf 0px,#0248bf 47.5px,#123cbf 71px,#1a4fff 71px,#334eff 79.5px,#604bff 102.5px,#8e3eff 134.5px,#ab27ff 158.5px,#ac26ff 160px,#821bbf 160px,#8d0dbf 172.5px,#b201bf 206.5px,#bf00bd 220.5px,#bf009b 259.5px,#bf007d 317.5px,#bf007b 322px)"></i>
<i style="top:371px;left:91px;width:317px;background:linear-gradient(90deg,#0063bf 0px,#0247bf 46.5px,#123abf 70px,#1d4dff 70px,#3a4cff 81.5px,#6a48ff 107.5px,#9338ff 137.5px,#a727ff 155px,#7e1cbf 155px,#890ebf 167.5px,#ae02bf 202.5px,#bf00bd 219.5px,#bf009b 259.5px,#bf007d 317px)"></i>
<i style="top:372px;left:92px;width:312px;background:linear-gradient(90deg,#0062bf 0px,#0245bf 45.5px,#1139bf 68px,#1a4bff 68px,#344aff 77.5px,#6247ff 101.5px,#8d38ff 132.5px,#a326ff 151px,#7b1cbf 151px,#850ebf 162.5px,#ab02bf 198.5px,#bf00bd 218.5px,#bf009b 258.5px,#bf007f 312px)"></i>
<i style="top:373px;left:93px;width:307px;background:linear-gradient(90deg,#0060bf 0px,#0245bf 43.5px,#1137bf 67px,#1c49ff 67px,#3948ff 78.5px,#6843ff 104.5px,#9033ff 133.5px,#9e27ff 146px,#771cbf 146px,#820fbf 158.5px,#a902bf 195.5px,#bf00bd 217.5px,#bf009c 257.5px,#bf0081 307px)"></i>
<i style="top:374px;left:94px;width:301px;background:linear-gradient(90deg,#005fbf 0px,#0243bf 42.5px,#1136bf 65px,#1a47ff 65px,#3346ff 74.5px,#6042ff 98.5px,#8a33ff 128.5px,#9927ff 141px,#741dbf 141px,#7e0fbf 153.5px,#a702bf 192.5px,#bf00be 216.5px,#bf009b 257.5px,#bf0084 301px)"></i>
<i style="top:375px;left:94px;width:297px;background:linear-gradient(90deg,#005ebf 0px,#0242bf 41.5px,#1134bf 65px,#1c46ff 65px,#3a44ff 77.5px,#6a3dff 104.5px,#8f2cff 132.5px,#9527ff 138px,#711cbf 138px,#7b0fbf 150.5px,#a502bf 190.5px,#bf00be 216.5px,#bf009c 257.5px,#bf0086 297px)"></i>
<i style="top:376px;left:95px;width:292px;background:linear-gradient(90deg,#005cbf 0px,#0241bf 40.5px,#1033bf 63px,#1944ff 63px,#3442ff 73.5px,#623dff 98.5px,#8a2cff 127.5px,#9027ff 133px,#6d1cbf 133px,#7710bf 145.5px,#a302bf 187.5px,#bf00be 215.5px,#bf009c 256.5px,#bf0089 292px)"></i>
<i style="top:377px;left:96px;width:286px;background:linear-gradient(90deg,#005abf 0px,#0240bf 39.5px,#1132bf 62px,#1b42ff 62px,#3940ff 74.5px,#6838ff 101.5px,#8b27ff 128px,#691cbf 128px,#7310bf 140.5px,#a102bf 184.5px,#bf00be 214.5px,#bf009c 256.5px,#bf008b 286px)"></i>
<i style="top:378px;left:97px;width:281px;background:linear-gradient(90deg,#0059bf 0px,#023fbf 37.5px,#0f30bf 60px,#1940ff 60px,#343fff 70.5px,#6237ff 96.5px,#8627ff 123px,#651dbf 123px,#7010bf 136.5px,#a001bf 182.5px,#bf00be 213.5px,#bf009c 255.5px,#bf008e 281px)"></i>
<i style="top:379px;left:98px;width:276px;background:linear-gradient(90deg,#0057bf 0px,#023ebf 36.5px,#0f2fbf 58px,#163eff 58px,#2d3dff 66.5px,#5a37ff 90.5px,#8226ff 119px,#621cbf 119px,#6d10bf 131.5px,#9e01bf 179.5px,#bf00be 212.5px,#bf009c 254.5px,#bf0090 276px)"></i>
<i style="top:380px;left:98px;width:272px;background:linear-gradient(90deg,#0056bf 0px,#023cbf 36.5px,#0f2dbf 58px,#183cff 58px,#353aff 69.5px,#6432ff 96.5px,#7d26ff 115px,#5e1cbf 115px,#6a10bf 128.5px,#9d01bf 178.5px,#bf00bd 213.5px,#bf009c 256.5px,#bf0093 272px)"></i>
<i style="top:381px;left:99px;width:266px;background:linear-gradient(90deg,#0054bf 0px,#023cbf 34.5px,#0e2cbf 56px,#163bff 56px,#2f39ff 65.5px,#5c31ff 90.5px,#7726ff 110px,#5a1cbf 110px,#6710bf 124.5px,#9b01bf 175.5px,#bf00bd 212.5px,#bf009b 256.5px,#bf0096 266px)"></i>
<i style="top:382px;left:100px;width:261px;background:linear-gradient(90deg,#0052bf 0px,#023abf 33.5px,#0e2bbf 55px,#1839ff 55px,#3436ff 66.5px,#622cff 93.5px,#7324ff 106px,#571bbf 106px,#6210bf 118.5px,#9a01bf 173.5px,#bf00bd 211.5px,#bf009c 255.5px,#bf0099 261px)"></i>
<i style="top:383px;left:101px;width:256px;background:linear-gradient(90deg,#0051bf 0px,#0339bf 32.5px,#0e29bf 53px,#1637ff 53px,#3035ff 63.5px,#5e2bff 89.5px,#6e24ff 101px,#531abf 101px,#600fbf 115.5px,#9901bf 171.5px,#bf00be 210.5px,#bf009c 254.5px,#bf009b 256px)"></i>
<i style="top:384px;left:102px;width:250px;background:linear-gradient(90deg,#004fbf 0px,#0338bf 31.5px,#0e28bf 52px,#1735ff 52px,#3532ff 64.5px,#6426ff 92.5px,#6824ff 96px,#4f1abf 96px,#5c0fbf 110.5px,#9901bf 169.5px,#bf00be 209.5px,#bf009f 250px)"></i>
<i style="top:385px;left:103px;width:245px;background:linear-gradient(90deg,#004dbf 0px,#0237bf 29.5px,#0d27bf 50px,#1533ff 50px,#2f30ff 60.5px,#5e25ff 87.5px,#6422ff 92px,#4c19bf 92px,#570fbf 104.5px,#9701bf 166.5px,#bf00be 208.5px,#bf00a1 245px)"></i>
<i style="top:386px;left:103px;width:241px;background:linear-gradient(90deg,#004cbf 0px,#0335bf 29.5px,#0e25bf 50px,#1731ff 50px,#342eff 62.5px,#5e22ff 88px,#4819bf 88px,#550fbf 102.5px,#9701bf 166.5px,#bf00be 208.5px,#bf00a4 241px)"></i>
<i style="top:387px;left:104px;width:236px;background:linear-gradient(90deg,#004abf 0px,#0334bf 28.5px,#0c24bf 48px,#152fff 48px,#312cff 59.5px,#5821ff 83px,#4318bf 83px,#510ebf 97.5px,#9600bf 164.5px,#bf00be 207.5px,#bf00a7 236px)"></i>
<i style="top:388px;left:105px;width:230px;background:linear-gradient(90deg,#0048bf 0px,#0333bf 27.5px,#0e22bf 47px,#172dff 47px,#3529ff 60.5px,#5420ff 79px,#4017bf 79px,#4d0ebf 92.5px,#9500bf 162.5px,#bf00be 206.5px,#bf00ab 230px)"></i>
<i style="top:389px;left:106px;width:225px;background:linear-gradient(90deg,#0046bf 0px,#0331bf 26.5px,#0c20bf 45px,#152bff 45px,#3027ff 56.5px,#4e1fff 74px,#3c17bf 74px,#4a0ebf 88.5px,#9500bf 160.5px,#bf00be 205.5px,#bf00ae 225px)"></i>
<i style="top:390px;left:107px;width:220px;background:linear-gradient(90deg,#0044bf 0px,#0330bf 25.5px,#0e1fbf 44px,#1629ff 44px,#3424ff 57.5px,#481fff 69px,#3716bf 69px,#460dbf 83.5px,#9400bf 158.5px,#bf00bd 205.5px,#bf00b2 220px)"></i>
<i style="top:391px;left:108px;width:214px;background:linear-gradient(90deg,#0042bf 0px,#032ebf 24.5px,#0b1dbf 42px,#1427ff 42px,#3122ff 54.5px,#431dff 65px,#3315bf 65px,#430dbf 79.5px,#9400bf 157.5px,#bf00bd 204.5px,#bf00b6 214px)"></i>
<i style="top:392px;left:109px;width:209px;background:linear-gradient(90deg,#0040bf 0px,#042cbf 24.5px,#0d1cbf 41px,#1625ff 41px,#351fff 55.5px,#3d1dff 60px,#2f15bf 60px,#3f0cbf 74.5px,#9300bf 155.5px,#bf00be 203.5px,#bf00b9 209px)"></i>
<i style="top:393px;left:110px;width:204px;background:linear-gradient(90deg,#003ebf 0px,#0429bf 24.5px,#0b1abf 39px,#1423ff 39px,#301eff 51.5px,#361cff 55px,#2a15bf 55px,#3b0cbf 69.5px,#8600bf 140.5px,#bf00be 202.5px,#bf00bd 204px)"></i>
<i style="top:394px;left:111px;width:199px;background:linear-gradient(90deg,#003cbf 0px,#0526bf 25.5px,#0a19bf 36.5px,#0d19bf 38px,#1521ff 38px,#311bff 51px,#2614bf 51px,#370cbf 65.5px,#7802bf 125.5px,#be00bf 199px)"></i>
<i style="top:395px;left:112px;width:193px;background:linear-gradient(90deg,#003abf 0px,#0721bf 27.5px,#0b17bf 36px,#141eff 36px,#2a1aff 46px,#2113bf 46px,#330bbf 60.5px,#6a03bf 110.5px,#ba00bf 193px)"></i>
<i style="top:396px;left:113px;width:188px;background:linear-gradient(90deg,#0038bf 0px,#0919bf 31.5px,#0d15bf 35px,#151cff 35px,#2219ff 41px,#1b13bf 41px,#2e0bbf 55.5px,#6004bf 98.5px,#a400bf 167.5px,#b600bf 188px)"></i>
<i style="top:397px;left:114px;width:183px;background:linear-gradient(90deg,#0035bf 0px,#0916bf 30.5px,#0b13bf 33px,#131aff 33px,#1c18ff 37px,#1712bf 37px,#2b0abf 51.5px,#5a05bf 91.5px,#9d00bf 159.5px,#b200bf 183px)"></i>
<i style="top:398px;left:115px;width:177px;background:linear-gradient(90deg,#0033bf 0px,#0915bf 28.5px,#0d12bf 31.5px,#260abf 46.5px,#5205bf 82.5px,#9600bf 150.5px,#ae00bf 177px)"></i>
<i style="top:399px;left:116px;width:172px;background:linear-gradient(90deg,#0030bf 0px,#0815bf 26.5px,#0e0fbf 30.5px,#2309bf 42.5px,#4c06bf 75.5px,#9200bf 145.5px,#aa00bf 172px)"></i>
<i style="top:400px;left:117px;width:167px;background:linear-gradient(90deg,#002ebf 0px,#0814bf 24.5px,#090ebf 27.5px,#1d09bf 37.5px,#4406bf 66.5px,#8e00bf 139.5px,#a700bf 167px)"></i>
<i style="top:401px;left:118px;width:161px;background:linear-gradient(90deg,#002cbf 0px,#0713bf 22.5px,#0a0bbf 26.5px,#2508bf 40.5px,#5204bf 77.5px,#9a00bf 151.5px,#a300bf 161px)"></i>
<i style="top:402px;left:119px;width:156px;background:linear-gradient(90deg,#0129bf 0px,#0712bf 20.5px,#0908bf 24.5px,#1d08bf 33.5px,#4405bf 63.5px,#8f00bf 137.5px,#9f00bf 156px)"></i>
<i style="top:403px;left:120px;width:151px;background:linear-gradient(90deg,#0127bf 0px,#070fbf 19.5px,#0907bf 22.5px,#2007bf 33.5px,#4b04bf 67.5px,#9500bf 143.5px,#9c00bf 151px)"></i>
<i style="top:404px;left:122px;width:145px;background:linear-gradient(90deg,#0223bf 0px,#070ebf 16.5px,#0a07bf 19.5px,#2107bf 31.5px,#4d03bf 67.5px,#9800bf 145px)"></i>
<i style="top:405px;left:123px;width:139px;background:linear-gradient(90deg,#0221bf 0px,#060ebf 14.5px,#0708bf 16.5px,#1b06bf 25.5px,#4204bf 55.5px,#9100bf 134.5px,#9400bf 139px)"></i>
<i style="top:406px;left:125px;width:133px;background:linear-gradient(90deg,#031dbf 0px,#060abf 12.5px,#0606bf 13.5px,#1706bf 20.5px,#3c04bf 47.5px,#8d00bf 128.5px,#9100bf 133px)"></i>
<i style="top:407px;left:126px;width:128px;background:linear-gradient(90deg,#031abf 0px,#0609bf 10.5px,#0a06bf 12.5px,#2505bf 27.5px,#5601bf 70.5px,#8d00bf 128px)"></i>
<i style="top:408px;left:127px;width:122px;background:linear-gradient(90deg,#0317bf 0px,#0705bf 9.5px,#1e05bf 20.5px,#4902bf 55.5px,#8900bf 122px)"></i>
<i style="top:409px;left:129px;width:116px;background:linear-gradient(90deg,#0412bf 0px,#0507bf 5.5px,#1a05bf 15.5px,#4302bf 47.5px,#8600bf 116px)"></i>
<i style="top:410px;left:130px;width:111px;background:linear-gradient(90deg,#040ebf 0px,#0506bf 3.5px,#1904bf 12.5px,#4002bf 43.5px,#8300bf 111px)"></i>
<i style="top:411px;left:132px;width:105px;background:linear-gradient(90deg,#0504bf 0px,#1704bf 8.5px,#3e02bf 38.5px,#8000bf 105px)"></i>
<i style="top:412px;left:133px;width:99px;background:linear-gradient(90deg,#0b04bf 0px,#2803bf 18.5px,#6500bf 74.5px,#7b00bf 99px)"></i>
<i style="top:413px;left:135px;width:93px;background:linear-gradient(90deg,#1204bf 0px,#3602bf 26.5px,#7800bf 93px)"></i>
<i style="top:414px;left:136px;width:88px;background:linear-gradient(90deg,#1503bf 0px,#3c01bf 30.5px,#7500bf 88px)"></i>
<i style="top:415px;left:138px;width:81px;background:linear-gradient(90deg,#1a03bf 0px,#4500bf 36.5px,#7100bf 81px)"></i>
<i style="top:416px;left:140px;width:75px;background:linear-gradient(90deg,#1e02bf 0px,#5100bf 44.5px,#6e00bf 75px)"></i>
<i style="top:417px;left:142px;width:69px;background:linear-gradient(90deg,#2202bf 0px,#5c00bf 52.5px,#6b00bf 69px)"></i>
<i style="top:418px;left:144px;width:63px;background:linear-gradient(90deg,#2602bf 0px,#6400bf 58.5px,#6800bf 63px)"></i>
<i style="top:419px;left:146px;width:56px;background:linear-gradient(90deg,#2a01bf 0px,#6400bf 56px)"></i>
<i style="top:420px;left:148px;width:50px;background:linear-gradient(90deg,#2d01bf 0px,#6000bf 50px)"></i>
<i style="top:421px;left:150px;width:44px;background:linear-gradient(90deg,#3100bf 0px,#5d00bf 44px)"></i>
<i style="top:422px;left:152px;width:37px;background:linear-gradient(90deg,#3400bf 0px,#5900bf 37px)"></i>
<i style="top:423px;left:154px;width:31px;background:linear-gradient(90deg,#3700bf 0px,#5600bf 31px)"></i>
<i style="top:424px;left:157px;width:24px;background:linear-gradient(90deg,#3c00bf 0px,#5300bf 24px)"></i>
<i style="top:425px;left:160px;width:17px;background:linear-gradient(90deg,#4000bf 0px,#5000bf 17px)"></i>
<i style="top:426px;left:162px;width:10px;background:linear-gradient(90deg,#4300bf 0px,#4c00bf 10px)"></i>
<i style="top:427px;left:163px;width:5px;background:linear-gradient(90deg,#4500bf 0px,#4900bf 5px)"></i>
</div>
<div class="lb"></div><div class="rb"></div><div class="bb"></div>
<svg class="o" width="770" height="456" viewBox="0 0 770 456">
<clipPath id="ot"><path clip-rule="evenodd" d="M0 0H770V456H0ZM632.2 290.2L291 140.3L150 421.5Z"/></clipPath>
<path clip-path="url(#ot)" d="M98.5 23V454M194.5 23V454M290.5 23V454M386.5 23V454M481.5 23V454M577.5 23V454M673.5 23V454M3 406.5H769M3 358.5H769M3 310.5H769M3 262.5H769M3 214.5H769M3 166.5H769M3 118.5H769M3 70.5H769" stroke="#000" stroke-opacity=".26" stroke-width="1" fill="none"/>
<path d="M302.5 23V454M3 296.5H769" stroke="#e6e6e6" stroke-opacity=".45" stroke-width="1" stroke-dasharray="2 1.6" fill="none"/>
<path d="M291 140.3L292.1 382.9M632.2 290.2L211.6 299.2M150 421.5L403.3 203.9" stroke="#1a2a1a" stroke-opacity=".6" stroke-width="1" stroke-dasharray="2.4 1.8" fill="none"/>
<path d="M615.8 296L290.2 166.7L146.6 425.3Z" stroke="#000" stroke-opacity=".58" stroke-width="2" fill="none" stroke-linejoin="round"/>
<path d="M632.2 290.2L291 140.3L150 421.5Z" stroke="#fff" stroke-width="2.1" fill="none" stroke-linejoin="round"/>
<path d="M633.5 289.5L629.4 287.7L624.1 285.3L618.6 282.8L607.2 278L595.6 273.5L578 267.3L560.7 262.3L541.9 258L522.1 254.8L506.6 253.2L487.1 252.3L464.7 252.7L444.5 254.4" stroke="#111" stroke-width="1.1" fill="none"/>
<path d="M444.5 254.4L422.9 257.6L404.1 261.4L385.3 266.2L369.3 271L350.4 277.5L335.3 283.3L323.1 288.6L313.2 293.1L304.9 297.1L294.4 302.5L285.4 307.3L277.2 312L268.4 317.2L261.5 321.5L256.8 324.6L250.9 328.5L246 331.9L242.6 334.3L240.9 335.5" stroke="#111" stroke-width="2" fill="none" stroke-linecap="round" stroke-linejoin="round"/>
<circle cx="444.5" cy="254.4" r="1.6" fill="#fff" stroke="#222" stroke-width=".8"/>
<circle cx="422.9" cy="257.6" r="1.6" fill="#fff" stroke="#222" stroke-width=".8"/>
<circle cx="369.3" cy="271" r="1.6" fill="#fff" stroke="#222" stroke-width=".8"/>
<circle cx="323.1" cy="288.6" r="1.6" fill="#fff" stroke="#222" stroke-width=".8"/>
<circle cx="277.2" cy="312" r="1.6" fill="#fff" stroke="#222" stroke-width=".8"/>
<text x="346" y="267.8" font-size="9.6" fill="#262626">4000</text>
<text x="300.5" y="285.6" font-size="9.6" fill="#262626">5500</text>
<text x="403" y="254.2" font-size="9.6" fill="#262626">3000</text>
<text x="443.5" y="251.2" font-size="9.6" fill="#262626">2700</text>
<text x="254.2" y="309.4" font-size="9.6" fill="#262626">9300</text>
<text x="280" y="297" font-size="9.6" fill="#262626">D65</text>
<text x="430.2" y="270.4" font-size="9.6" fill="#262626">A</text>
<text x="338.6" y="297" font-size="9.6" fill="#262626">B</text>
<text x="301.8" y="313.3" font-size="9.6" fill="#262626">C</text>
<rect x="290.9" y="212.1" width="7.5" height="7.5" rx="1.8" fill="#fff" fill-opacity=".15" stroke="#c39d72" stroke-width="1.5"/>
<rect x="359.9" y="212.1" width="7.5" height="7.5" rx="1.8" fill="#fff" fill-opacity=".15" stroke="#c39d72" stroke-width="1.5"/>
<rect x="325.8" y="243.1" width="7.5" height="7.5" rx="1.8" fill="#fff" fill-opacity=".15" stroke="#c39d72" stroke-width="1.5"/>
<rect x="248.7" y="277.1" width="7.5" height="7.5" rx="1.8" fill="#fff" fill-opacity=".15" stroke="#c39d72" stroke-width="1.5"/>
<rect x="197.6" y="322.9" width="7.5" height="7.5" rx="1.8" fill="#fff" fill-opacity=".15" stroke="#c39d72" stroke-width="1.5"/>
<rect x="235.6" y="324.1" width="7.5" height="7.5" rx="1.8" fill="#fff" fill-opacity=".15" stroke="#c39d72" stroke-width="1.5"/>
<rect x="254.4" y="330.4" width="7.5" height="7.5" rx="1.8" fill="#fff" fill-opacity=".15" stroke="#c39d72" stroke-width="1.5"/>
<rect x="274.4" y="346.9" width="7.5" height="7.5" rx="1.8" fill="#fff" fill-opacity=".15" stroke="#c39d72" stroke-width="1.5"/>
<rect x="203.1" y="361.1" width="7.5" height="7.5" rx="1.8" fill="#fff" fill-opacity=".15" stroke="#c39d72" stroke-width="1.5"/>
<rect x="179.3" y="385.8" width="7.5" height="7.5" rx="1.8" fill="#fff" fill-opacity=".15" stroke="#c39d72" stroke-width="1.5"/>
<rect x="359.6" y="333.9" width="7.5" height="7.5" rx="1.8" fill="#fff" fill-opacity=".15" stroke="#c39d72" stroke-width="1.5"/>
<rect x="363.9" y="278.6" width="7.5" height="7.5" rx="1.8" fill="#fff" fill-opacity=".15" stroke="#c39d72" stroke-width="1.5"/>
<rect x="389.1" y="275.9" width="7.5" height="7.5" rx="1.8" fill="#fff" fill-opacity=".15" stroke="#c39d72" stroke-width="1.5"/>
<rect x="429.1" y="222.8" width="7.5" height="7.5" rx="1.8" fill="#fff" fill-opacity=".15" stroke="#c39d72" stroke-width="1.5"/>
<rect x="457.4" y="238.7" width="7.5" height="7.5" rx="1.8" fill="#fff" fill-opacity=".15" stroke="#c39d72" stroke-width="1.5"/>
<rect x="495.9" y="255.2" width="7.5" height="7.5" rx="1.8" fill="#fff" fill-opacity=".15" stroke="#c39d72" stroke-width="1.5"/>
<rect x="448.9" y="300.4" width="7.5" height="7.5" rx="1.8" fill="#fff" fill-opacity=".15" stroke="#c39d72" stroke-width="1.5"/>
<rect x="525.2" y="297.2" width="7.5" height="7.5" rx="1.8" fill="#fff" fill-opacity=".15" stroke="#c39d72" stroke-width="1.5"/>
<rect x="288.9" y="192.2" width="8.1" height="8.1" fill="none" stroke="#8a8a28" stroke-width="1.3"/>
<rect x="291.9" y="224.4" width="8.1" height="8.1" fill="none" stroke="#5f8f1c" stroke-width="1.3"/>
<rect x="294.5" y="257.3" width="9.4" height="9.4" fill="#5fe83c"/><rect x="297.5" y="260.3" width="3.4" height="3.4" fill="#fff" fill-opacity="0.6"/><rect x="295.4" y="258.2" width="7.7" height="7.7" fill="none" stroke="#6a9a28" stroke-width="1.7"/>
<rect x="376" y="226.1" width="9.4" height="9.4" fill="#ffe93a"/><rect x="379" y="229.1" width="3.4" height="3.4" fill="#fff" fill-opacity="0.6"/><rect x="376.9" y="227" width="7.7" height="7.7" fill="none" stroke="#c98f10" stroke-width="1.7"/>
<rect x="350.5" y="247.6" width="9.4" height="9.4" fill="#ffe94a"/><rect x="353.5" y="250.6" width="3.4" height="3.4" fill="#fff" fill-opacity="0.25"/><rect x="351.4" y="248.5" width="7.7" height="7.7" fill="none" stroke="#d09a10" stroke-width="1.7"/>
<rect x="324.3" y="269.5" width="9.4" height="9.4" fill="#ffe650"/><rect x="327.3" y="272.5" width="3.4" height="3.4" fill="#fff" fill-opacity="0.6"/><rect x="325.2" y="270.4" width="7.7" height="7.7" fill="none" stroke="#d8a018" stroke-width="1.7"/>
<rect x="539.1" y="290.6" width="9.4" height="9.4" fill="#f02040"/><rect x="542.1" y="293.6" width="3.4" height="3.4" fill="#fff" fill-opacity="0.25"/><rect x="539.9" y="291.5" width="7.7" height="7.7" fill="none" stroke="#d01028" stroke-width="1.7"/>
<rect x="460.6" y="291" width="9.4" height="9.4" fill="#ff4a62"/><rect x="463.6" y="294" width="3.4" height="3.4" fill="#fff" fill-opacity="0.25"/><rect x="461.5" y="291.9" width="7.7" height="7.7" fill="none" stroke="#c80c30" stroke-width="1.7"/>
<rect x="379.8" y="290.9" width="9.4" height="9.4" fill="#ff93a6"/><rect x="382.8" y="293.9" width="3.4" height="3.4" fill="#fff" fill-opacity="0.25"/><rect x="380.7" y="291.8" width="7.7" height="7.7" fill="none" stroke="#cc1038" stroke-width="1.7"/>
<rect x="233.1" y="291.3" width="9.4" height="9.4" fill="#9fe6f7"/><rect x="236.1" y="294.3" width="3.4" height="3.4" fill="#fff" fill-opacity="0.6"/><rect x="234" y="292.2" width="7.7" height="7.7" fill="none" stroke="#5a8aa8" stroke-width="1.7"/>
<rect x="254.3" y="291.3" width="9.4" height="9.4" fill="#aeeaf8"/><rect x="257.3" y="294.3" width="3.4" height="3.4" fill="#fff" fill-opacity="0.6"/><rect x="255.2" y="292.2" width="7.7" height="7.7" fill="none" stroke="#5a8aa8" stroke-width="1.7"/>
<rect x="275.6" y="291.3" width="9.4" height="9.4" fill="#b4e6fa"/><rect x="278.6" y="294.3" width="3.4" height="3.4" fill="#fff" fill-opacity="0.6"/><rect x="276.5" y="292.2" width="7.7" height="7.7" fill="none" stroke="#6a96c0" stroke-width="1.7"/>
<rect x="303.4" y="355.9" width="9.4" height="9.4" fill="#f65ae6"/><rect x="306.4" y="358.9" width="3.4" height="3.4" fill="#fff" fill-opacity="0.6"/><rect x="304.3" y="356.8" width="7.7" height="7.7" fill="none" stroke="#c414b0" stroke-width="1.7"/>
<rect x="301.8" y="334.5" width="9.4" height="9.4" fill="#f884ec"/><rect x="304.8" y="337.5" width="3.4" height="3.4" fill="#fff" fill-opacity="0.6"/><rect x="302.7" y="335.4" width="7.7" height="7.7" fill="none" stroke="#c414b0" stroke-width="1.7"/>
<rect x="299.9" y="313.5" width="9.4" height="9.4" fill="#f7b0f0"/><rect x="302.9" y="316.5" width="3.4" height="3.4" fill="#fff" fill-opacity="0.6"/><rect x="300.8" y="314.4" width="7.7" height="7.7" fill="none" stroke="#c020ac" stroke-width="1.7"/>
<rect x="178.6" y="389.9" width="9.4" height="9.4" fill="#4a58ff"/><rect x="181.6" y="392.9" width="3.4" height="3.4" fill="#fff" fill-opacity="0.6"/><rect x="179.5" y="390.8" width="7.7" height="7.7" fill="none" stroke="#8a20c8" stroke-width="1.7"/>
<rect x="217.9" y="357.6" width="9.4" height="9.4" fill="#6f78ff"/><rect x="220.9" y="360.6" width="3.4" height="3.4" fill="#fff" fill-opacity="0.6"/><rect x="218.8" y="358.5" width="7.7" height="7.7" fill="none" stroke="#6a18d0" stroke-width="1.7"/>
<rect x="257.8" y="324.5" width="9.4" height="9.4" fill="#a8a8ff"/><rect x="260.8" y="327.5" width="3.4" height="3.4" fill="#fff" fill-opacity="0.6"/><rect x="258.7" y="325.4" width="7.7" height="7.7" fill="none" stroke="#4a10c8" stroke-width="1.7"/>
<rect x="179.3" y="385.8" width="7.5" height="7.5" rx="1.8" fill="#fff" fill-opacity=".15" stroke="#c39d72" stroke-width="1.5"/>
<rect x="254.4" y="330.4" width="7.5" height="7.5" rx="1.8" fill="#fff" fill-opacity=".15" stroke="#c39d72" stroke-width="1.5"/>
<rect x="610.9" y="290.9" width="9.2" height="9.2" fill="#f0485a"/><rect x="611.6" y="291.5" width="7.9" height="7.9" fill="none" stroke="#d8283c" stroke-width="1.3"/>
<path d="M613.7 295.3l1.6 1.8l2-3.4" stroke="#222" stroke-width="1.1" fill="none"/>
<rect x="285.3" y="161.6" width="9.2" height="9.2" fill="#58e040"/><rect x="286" y="162.2" width="7.9" height="7.9" fill="none" stroke="#909028" stroke-width="1.3"/>
<path d="M288.1 166l1.6 1.8l2-3.4" stroke="#222" stroke-width="1.1" fill="none"/>
<rect x="141.7" y="420.2" width="9.2" height="9.2" fill="#4838e8"/><rect x="142.4" y="420.8" width="7.9" height="7.9" fill="none" stroke="#8a28c0" stroke-width="1.3"/>
<path d="M144.5 424.6l1.6 1.8l2-3.4" stroke="#222" stroke-width="1.1" fill="none"/>
<rect x="399.6" y="206.9" width="9.2" height="9.2" fill="#f0e040"/><rect x="400.2" y="207.6" width="7.9" height="7.9" fill="none" stroke="#c88418" stroke-width="1.3"/>
<path d="M402.4 211.3l1.6 1.8l2-3.4" stroke="#222" stroke-width="1.1" fill="none"/>
<rect x="213.2" y="291.5" width="9.2" height="9.2" fill="#8ee0ee"/><rect x="213.8" y="292.1" width="7.9" height="7.9" fill="none" stroke="#466a7a" stroke-width="1.3"/>
<path d="M216 295.9l1.6 1.8l2-3.4" stroke="#222" stroke-width="1.1" fill="none"/>
<rect x="305.4" y="375.1" width="9.2" height="9.2" fill="#e040d0"/><rect x="306" y="375.7" width="7.9" height="7.9" fill="none" stroke="#b818a8" stroke-width="1.3"/>
<path d="M308.2 379.5l1.6 1.8l2-3.4" stroke="#222" stroke-width="1.1" fill="none"/>
<circle cx="291" cy="140.3" r="3.3" fill="#12c818" stroke="#0a7a10" stroke-width="1.2"/>
<circle cx="632.6" cy="290.4" r="3.3" fill="#e02828" stroke="#b01818" stroke-width="1.2"/>
<circle cx="403.3" cy="203.9" r="3.3" fill="#d8d890" stroke="#555" stroke-width="1.2"/>
<circle cx="403.3" cy="203.9" r="1.1" fill="#fff"/>
<circle cx="211.6" cy="299.2" r="3.3" fill="#7ae6d8" stroke="#2a6a6a" stroke-width="1.2"/>
<circle cx="292.1" cy="382.9" r="3.3" fill="#e010c8" stroke="#7a0a78" stroke-width="1.2"/>
<rect x="298.4" y="292.1" width="7.5" height="7.5" rx="1.8" fill="#fff" fill-opacity=".15" stroke="#c39d72" stroke-width="1.5"/>
<circle cx="292.3" cy="298.6" r="3.2" fill="#fff" stroke="#444" stroke-width="1.4"/>
<circle cx="296.6" cy="304.5" r="3.2" fill="#fff" stroke="#444" stroke-width="1.4"/>
<circle cx="288.2" cy="308.4" r="3.2" fill="#fff" stroke="#444" stroke-width="1.4"/>
<circle cx="293.4" cy="405.5" r="2.9" fill="#fff" stroke="#333" stroke-width="0.9"/>
<circle cx="431.6" cy="258.9" r="2.0" fill="#18b828" stroke="#0a5a10" stroke-width="0.8"/>
<circle cx="336.6" cy="285.6" r="2.0" fill="#18b828" stroke="#0a5a10" stroke-width="0.8"/>
<circle cx="299.9" cy="302.6" r="2.0" fill="#18b828" stroke="#0a5a10" stroke-width="0.8"/>
<circle cx="302.4" cy="296.4" r="2.0" fill="#18b828" stroke="#0a5a10" stroke-width="0.8"/>
<text transform="translate(99.6,452.7) scale(0.87,1)" font-size="10.4" fill="#ececec">0.1</text>
<text transform="translate(195.6,452.7) scale(0.87,1)" font-size="10.4" fill="#ececec">0.2</text>
<text transform="translate(291.6,452.7) scale(0.87,1)" font-size="10.4" fill="#ececec">0.3</text>
<text transform="translate(387.6,452.7) scale(0.87,1)" font-size="10.4" fill="#ececec">0.4</text>
<text transform="translate(482.6,452.7) scale(0.87,1)" font-size="10.4" fill="#ececec">0.5</text>
<text transform="translate(578.6,452.7) scale(0.87,1)" font-size="10.4" fill="#ececec">0.6</text>
<text transform="translate(674.6,452.7) scale(0.87,1)" font-size="10.4" fill="#ececec">0.7</text>
<text transform="translate(4.4,404.4) scale(0.87,1)" font-size="10.4" fill="#ececec">0.1</text>
<text transform="translate(4.4,356.4) scale(0.87,1)" font-size="10.4" fill="#ececec">0.2</text>
<text transform="translate(4.4,308.4) scale(0.87,1)" font-size="10.4" fill="#ececec">0.3</text>
<text transform="translate(4.4,260.4) scale(0.87,1)" font-size="10.4" fill="#ececec">0.4</text>
<text transform="translate(4.4,212.4) scale(0.87,1)" font-size="10.4" fill="#ececec">0.5</text>
<text transform="translate(4.4,164.4) scale(0.87,1)" font-size="10.4" fill="#ececec">0.6</text>
<text transform="translate(4.4,116.4) scale(0.87,1)" font-size="10.4" fill="#ececec">0.7</text>
<text transform="translate(4.4,68.4) scale(0.87,1)" font-size="10.4" fill="#ececec">0.8</text>
<text x="668.5" y="416.6" font-size="9.7" fill="#4a4a4a" font-weight="bold">hcfr.sourceforge.net</text>
</svg>
</body></html>
